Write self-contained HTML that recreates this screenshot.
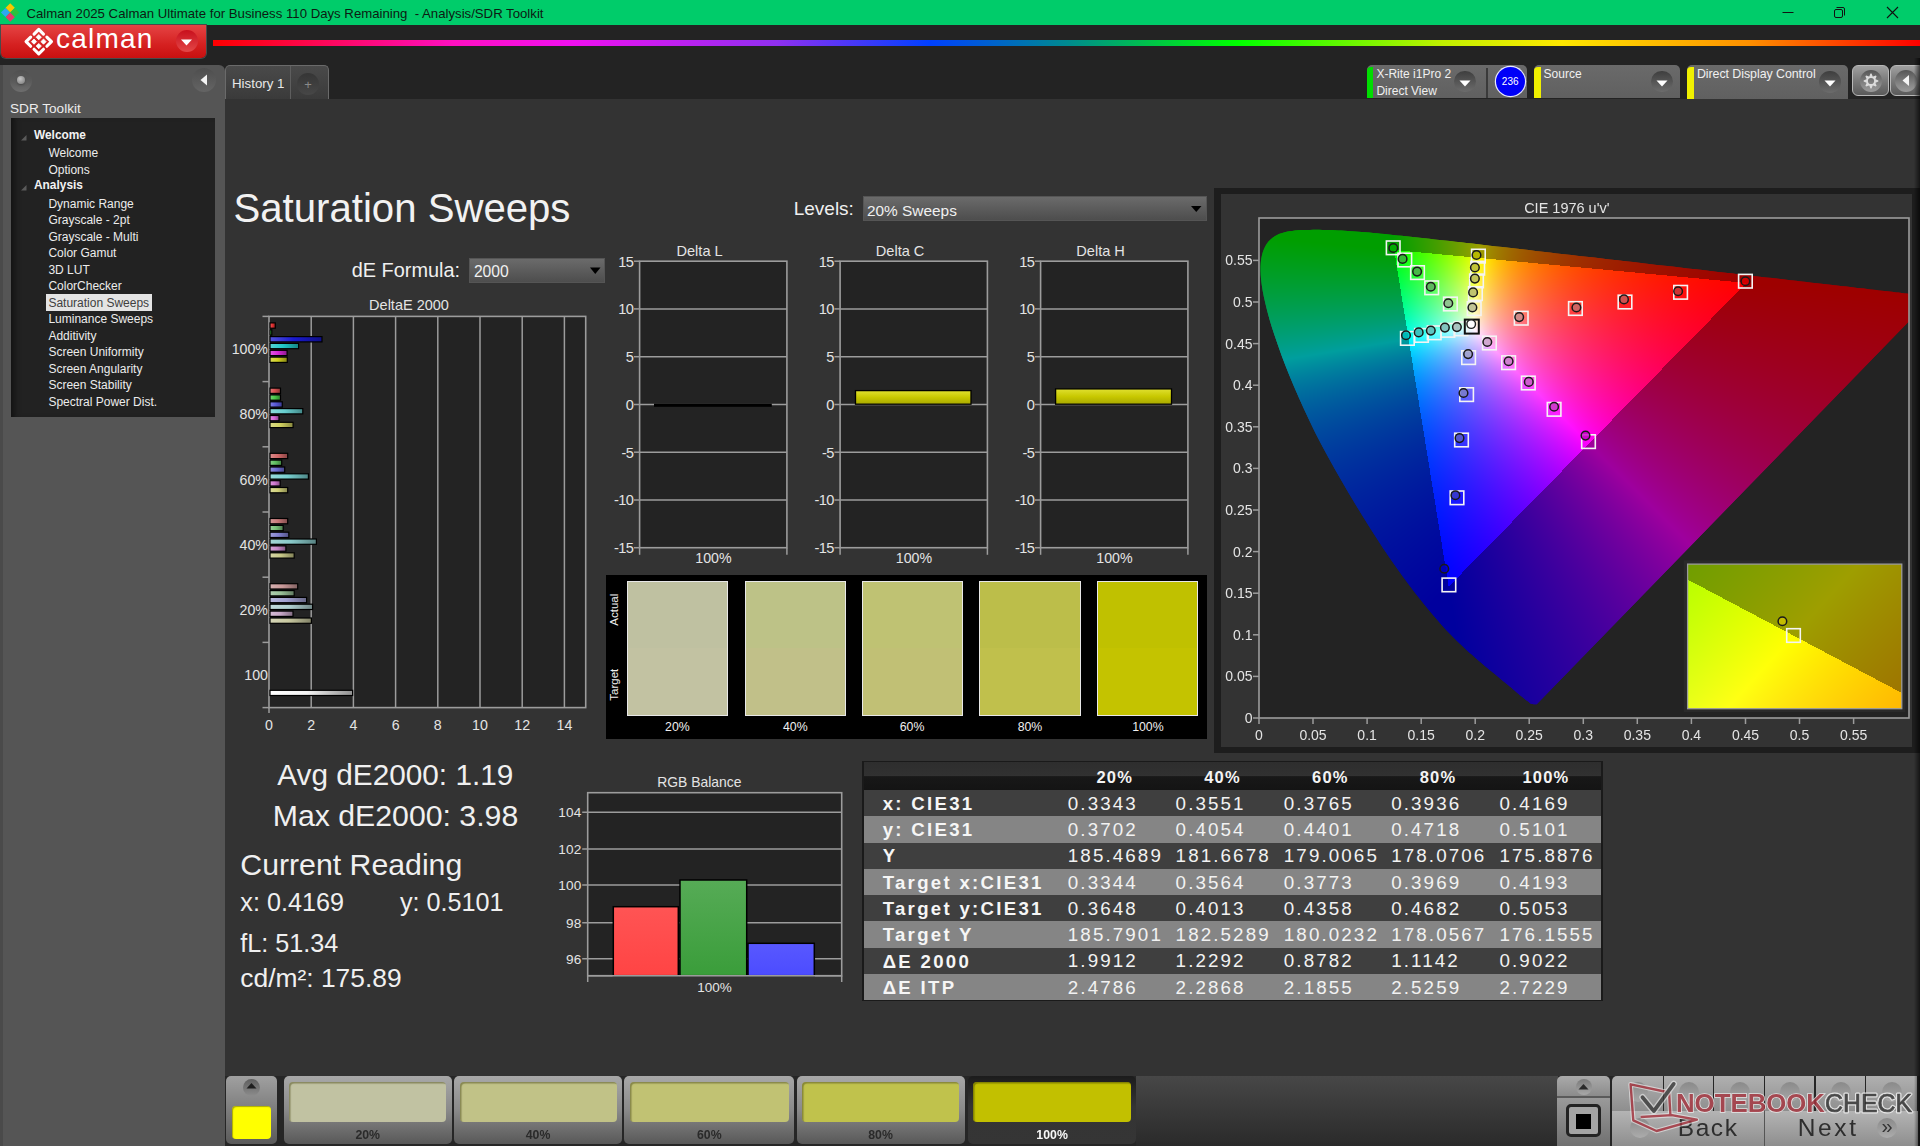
<!DOCTYPE html>
<html><head><meta charset="utf-8"><title>Calman Saturation Sweeps</title>
<style>
html,body{margin:0;padding:0;}
body{width:1920px;height:1146px;overflow:hidden;position:relative;background:#232323;font-family:"Liberation Sans",sans-serif;}
.t{position:absolute;white-space:nowrap;line-height:1;}
div{position:absolute;}
</style></head><body>
<div style="position:absolute;left:0px;top:0px;width:1920px;height:25px;background:#00cc6a"></div>
<svg style="position:absolute;left:0;top:0" width="24" height="25" viewBox="0 0 24 25">
<path d="M10.2 3.2 L14.8 7.8 L10.2 12.4 L5.6 7.8Z" fill="#f7c600"/>
<path d="M5.5 7.9 L10.1 12.5 L5.5 17.1 L0.9 12.5Z" fill="#2ea8f0"/>
<path d="M14.8 7.9 L19.4 12.5 L14.8 17.1 L10.2 12.5Z" fill="#2cc040"/>
<path d="M10.2 12.6 L14.8 17.2 L10.2 21.8 L5.6 17.2Z" fill="#e8386a"/>
</svg>
<div class="t" style="left:26.5px;top:6.8px;font-size:13.2px;color:#0d1a12;">Calman 2025 Calman Ultimate for Business 110 Days Remaining&nbsp; - Analysis/SDR Toolkit</div>
<svg style="position:absolute;left:1770px;top:0" width="150" height="25" viewBox="1770 0 150 25">
<line x1="1782.5" y1="12.5" x2="1793.5" y2="12.5" stroke="#111" stroke-width="1"/>
<rect x="1834.5" y="9.5" width="8" height="8" rx="1.5" fill="none" stroke="#111" stroke-width="1"/>
<path d="M1836.5 7.5 H1843 a1.5 1.5 0 0 1 1.5 1.5 V15.5" fill="none" stroke="#111" stroke-width="1"/>
<path d="M1887 7 L1898 18 M1898 7 L1887 18" stroke="#111" stroke-width="1.1"/>
</svg>
<div style="position:absolute;left:0px;top:25px;width:1920px;height:40px;background:#232323"></div>
<div style="position:absolute;left:1px;top:25px;width:204.5px;height:32.5px;background:linear-gradient(#e54444,#d52020 60%,#c81010);border-radius:0 0 5px 5px;box-shadow:0 0 0 1px #4a4a4a"></div>
<svg style="position:absolute;left:20px;top:24px" width="40" height="36" viewBox="-18.76 -17.64 40 36">
<g fill="none" stroke="#fff" stroke-width="3.1" stroke-linecap="round" stroke-linejoin="round">
<path d="M-4.7 -7.6 L0 -12.3 L4.7 -7.6"/><path d="M-4.7 7.6 L0 12.3 L4.7 7.6"/>
<path d="M-8.1 -4.6 L-12.7 0 L-8.1 4.6"/><path d="M8.1 -4.6 L12.7 0 L8.1 4.6"/>
</g>
<g fill="#fff" stroke="#fff" stroke-width="0.8" stroke-linejoin="round">
<path d="M0 -7.1 L2.6 -4.45 L0 -1.8 L-2.6 -4.45Z"/><path d="M0 1.8 L2.6 4.45 L0 7.1 L-2.6 4.45Z"/>
<path d="M-4.76 -2.6 L-2.16 0 L-4.76 2.6 L-7.36 0Z"/><path d="M4.76 -2.6 L7.36 0 L4.76 2.6 L2.16 0Z"/>
</g></svg>
<div class="t" style="left:56.0px;top:25.3px;font-size:28px;color:#ffffff;letter-spacing:1.2px;">calman</div>
<div style="position:absolute;left:175.5px;top:30px;width:22px;height:22px;border-radius:50%;background:linear-gradient(#c80f1c,#e34848)"></div>
<svg style="position:absolute;left:180px;top:38px" width="14" height="9"><path d="M1 1.5 H12 L6.5 7.5Z" fill="#fff"/></svg>
<div style="position:absolute;left:213px;top:40px;width:1707px;height:5.5px;background:linear-gradient(90deg,#ff0000 0%,#ff10c0 14%,#f010f0 21%,#9030f0 33%,#0040ff 42%,#008a90 50%,#00ff00 60%,#c0f000 72%,#ffe800 79%,#ff9000 90%,#ff0000 100%)"></div>
<div style="position:absolute;left:0px;top:65px;width:2.5px;height:1081px;background:#4a4a4a"></div>
<div style="position:absolute;left:2.5px;top:65px;width:222px;height:1081px;background:#555555;border-radius:0 6px 0 0"></div>
<div style="position:absolute;left:10px;top:69.5px;width:22px;height:22px;border-radius:50%;background:linear-gradient(#505050,#5a5a5a 50%,#6e6e6e)"></div>
<div style="position:absolute;left:16.5px;top:75.5px;width:8px;height:8px;border-radius:50%;background:radial-gradient(circle at 40% 35%,#c4c4c4,#8a8a8a 75%);box-shadow:0 1px 2px #444"></div>
<div style="position:absolute;left:192px;top:68px;width:24px;height:24px;border-radius:50%;background:linear-gradient(#4e4e4e,#646464)"></div>
<svg style="position:absolute;left:199px;top:73px" width="10" height="14"><path d="M8 1.5 V12.5 L1.5 7Z" fill="#f4f4f4"/></svg>
<div class="t" style="left:10.0px;top:101.5px;font-size:13.6px;color:#ececec;">SDR Toolkit</div>
<div style="position:absolute;left:11px;top:118px;width:204px;height:298.6px;background:#222;box-shadow:inset 7px 0 6px -4px #111"></div>
<svg style="position:absolute;left:20px;top:133.8px" width="8" height="8"><path d="M6.5 1 V6.5 H1Z" fill="#5a5a5a"/></svg>
<div class="t" style="left:34.0px;top:130.2px;font-size:11.9px;color:#f2f2f2;font-weight:bold;">Welcome</div>
<div class="t" style="left:48.4px;top:146.6px;font-size:12px;color:#ececec;">Welcome</div>
<div class="t" style="left:48.4px;top:163.5px;font-size:12px;color:#ececec;">Options</div>
<svg style="position:absolute;left:20px;top:184.0px" width="8" height="8"><path d="M6.5 1 V6.5 H1Z" fill="#5a5a5a"/></svg>
<div class="t" style="left:34.0px;top:180.4px;font-size:11.9px;color:#f2f2f2;font-weight:bold;">Analysis</div>
<div class="t" style="left:48.4px;top:197.8px;font-size:12px;color:#ececec;">Dynamic Range</div>
<div class="t" style="left:48.4px;top:214.3px;font-size:12px;color:#ececec;">Grayscale - 2pt</div>
<div class="t" style="left:48.4px;top:230.8px;font-size:12px;color:#ececec;">Grayscale - Multi</div>
<div class="t" style="left:48.4px;top:247.3px;font-size:12px;color:#ececec;">Color Gamut</div>
<div class="t" style="left:48.4px;top:263.8px;font-size:12px;color:#ececec;">3D LUT</div>
<div class="t" style="left:48.4px;top:280.3px;font-size:12px;color:#ececec;">ColorChecker</div>
<div style="position:absolute;left:46px;top:293.9px;width:106px;height:17px;background:#e4e4e4;border:0"></div>
<div class="t" style="left:48.4px;top:296.7px;font-size:12px;color:#404040;">Saturation Sweeps</div>
<div class="t" style="left:48.4px;top:313.2px;font-size:12px;color:#ececec;">Luminance Sweeps</div>
<div class="t" style="left:48.4px;top:329.7px;font-size:12px;color:#ececec;">Additivity</div>
<div class="t" style="left:48.4px;top:346.2px;font-size:12px;color:#ececec;">Screen Uniformity</div>
<div class="t" style="left:48.4px;top:362.7px;font-size:12px;color:#ececec;">Screen Angularity</div>
<div class="t" style="left:48.4px;top:379.2px;font-size:12px;color:#ececec;">Screen Stability</div>
<div class="t" style="left:48.4px;top:395.7px;font-size:12px;color:#ececec;">Spectral Power Dist.</div>
<div style="position:absolute;left:225px;top:65px;width:104px;height:34px;box-sizing:border-box;background:linear-gradient(#4a4a4a,#3a3a3a);border-radius:5px 5px 0 0;border:1.2px solid #6a6a6a;border-bottom:0"></div>
<div style="position:absolute;left:290px;top:66px;width:1.2px;height:33px;background:#5e5e5e"></div>
<div class="t" style="left:232.0px;top:77.2px;font-size:13.3px;color:#e8e8e8;">History 1</div>
<div style="position:absolute;left:297px;top:73px;width:22px;height:22px;border-radius:50%;background:linear-gradient(#353535,#474747)"></div>
<div class="t" style="left:298.0px;width:20px;text-align:center;top:78.0px;font-size:13px;color:#8a8a8a;">+</div>
<div style="position:absolute;left:225px;top:99px;width:1695px;height:1047px;background:#333"></div>
<div style="position:absolute;left:1366.6px;top:65.2px;width:160.2px;height:33.2px;background:linear-gradient(#6a6a6a,#606060);border-radius:5px 5px 0 0"></div>
<div style="position:absolute;left:1366.6px;top:66.5px;width:6.5px;height:31.9px;background:#00dd00;border-radius:4px 0 0 0"></div>
<div class="t" style="left:1376.4px;top:68.2px;font-size:12px;color:#f0f0f0;">X-Rite i1Pro 2</div>
<div class="t" style="left:1376.4px;top:84.8px;font-size:12px;color:#f0f0f0;">Direct View</div>
<div style="position:absolute;left:1454.2px;top:70.8px;width:21.6px;height:21.6px;border-radius:50%;background:linear-gradient(#3e3e3e,#6c6c6c)"></div>
<svg style="position:absolute;left:1459px;top:79.6px" width="12" height="7"><path d="M0.5 0.5 H11.5 L6 6.5Z" fill="#fff"/></svg>
<div style="position:absolute;left:1486px;top:68px;width:2px;height:30.4px;background:#3a3a3a"></div>
<div style="position:absolute;left:1495.5px;top:67.1px;width:29px;height:29px;border-radius:50%;background:#0000f8;box-shadow:0 0 0 1.2px #e8e8ff"></div>
<div class="t" style="left:1495.2px;width:30px;text-align:center;top:76.7px;font-size:10px;color:#ffffff;">236</div>
<div style="position:absolute;left:1534px;top:65.2px;width:145.9px;height:33.2px;background:linear-gradient(#6a6a6a,#606060);border-radius:5px 5px 0 0"></div>
<div style="position:absolute;left:1534px;top:66.5px;width:6.5px;height:31.9px;background:#f0f000;border-radius:4px 0 0 0"></div>
<div class="t" style="left:1543.6px;top:68.2px;font-size:12px;color:#f0f0f0;">Source</div>
<div style="position:absolute;left:1651.0px;top:70.9px;width:21.6px;height:21.6px;border-radius:50%;background:linear-gradient(#3e3e3e,#6c6c6c)"></div>
<svg style="position:absolute;left:1655.8px;top:79.7px" width="12" height="7"><path d="M0.5 0.5 H11.5 L6 6.5Z" fill="#fff"/></svg>
<div style="position:absolute;left:1686.9px;top:65.2px;width:161.1px;height:33.4px;background:linear-gradient(#6a6a6a,#606060);border-radius:5px 5px 0 0"></div>
<div style="position:absolute;left:1686.9px;top:66.5px;width:6.8px;height:32.1px;background:#f0f000;border-radius:4px 0 0 0"></div>
<div class="t" style="left:1696.9px;top:67.9px;font-size:12.4px;color:#f0f0f0;letter-spacing:-0.05px;">Direct Display Control</div>
<div style="position:absolute;left:1819.2px;top:70.95px;width:21.6px;height:21.6px;border-radius:50%;background:linear-gradient(#3e3e3e,#6c6c6c)"></div>
<svg style="position:absolute;left:1824px;top:79.75px" width="12" height="7"><path d="M0.5 0.5 H11.5 L6 6.5Z" fill="#fff"/></svg>
<div style="position:absolute;left:1851.9px;top:65.2px;width:37.6px;height:31.2px;box-sizing:border-box;border:1.5px solid #b8b8b8;border-radius:6px;background:linear-gradient(#a0a0a0,#7a7a7a 50%,#5a5a5a)"></div>
<div style="position:absolute;left:1859.6px;top:69.5px;width:22px;height:22px;border-radius:50%;background:linear-gradient(#555,#8a8a8a 70%,#9a9a9a)"></div>
<svg style="position:absolute;left:1860.6px;top:70.5px" width="20" height="20" viewBox="-10 -10 20 20"><path fill-rule="evenodd" fill="#dcdcdc" d="M-1.73 -4.59 L-0.52 -7.38 L0.52 -7.38 L1.73 -4.59 L2.02 -4.46 L4.85 -5.59 L5.59 -4.85 L4.46 -2.02 L4.59 -1.73 L7.38 -0.52 L7.38 0.52 L4.59 1.73 L4.46 2.02 L5.59 4.85 L4.85 5.59 L2.02 4.46 L1.73 4.59 L0.52 7.38 L-0.52 7.38 L-1.73 4.59 L-2.02 4.46 L-4.85 5.59 L-5.59 4.85 L-4.46 2.02 L-4.59 1.73 L-7.38 0.52 L-7.38 -0.52 L-4.59 -1.73 L-4.46 -2.02 L-5.59 -4.85 L-4.85 -5.59 L-2.02 -4.46Z M3.1 0 A3.1 3.1 0 1 0 -3.1 0 A3.1 3.1 0 1 0 3.1 0Z"/></svg>
<div style="position:absolute;left:1889.5px;top:65.2px;width:35px;height:31.2px;box-sizing:border-box;border:1.5px solid #b8b8b8;border-radius:6px;background:linear-gradient(#a0a0a0,#7a7a7a 50%,#5a5a5a)"></div>
<div style="position:absolute;left:1894.5px;top:69.5px;width:22px;height:22px;border-radius:50%;background:linear-gradient(#555,#8a8a8a 70%,#9a9a9a)"></div>
<svg style="position:absolute;left:1901px;top:74px" width="10" height="13"><path d="M8 1 V12 L1.5 6.5Z" fill="#f4f4f4"/></svg>
<div class="t" style="left:233.5px;top:189.4px;font-size:40.15px;color:#f2f2f2;">Saturation Sweeps</div>
<div class="t" style="left:351.7px;top:260.9px;font-size:19.9px;color:#f0f0f0;">dE Formula:</div>
<div style="position:absolute;left:469px;top:258px;width:135.7px;height:25.2px;background:linear-gradient(#6c6c6c,#4c4c4c);box-shadow:inset 0 0 0 1px #555"></div>
<div class="t" style="left:473.9px;top:264.4px;font-size:15.7px;color:#f0f0f0;">2000</div>
<svg style="position:absolute;left:589px;top:266px" width="14" height="10"><path d="M1 1.5 H11.5 L6.25 8Z" fill="#000"/></svg>
<div class="t" style="left:793.7px;top:199.1px;font-size:19.0px;color:#f0f0f0;">Levels:</div>
<div style="position:absolute;left:862.5px;top:195.7px;width:344.2px;height:25.5px;background:linear-gradient(#6c6c6c,#4c4c4c);box-shadow:inset 0 0 0 1px #555"></div>
<div class="t" style="left:867.0px;top:203.0px;font-size:15.4px;color:#f0f0f0;">20% Sweeps</div>
<svg style="position:absolute;left:1190px;top:205px" width="14" height="10"><path d="M1 1 H11.5 L6.25 7Z" fill="#000"/></svg>
<svg style="position:absolute;left:0;top:0" width="1920" height="1146" viewBox="0 0 1920 1146" font-family="Liberation Sans, sans-serif"><defs><linearGradient id="g00" x1="0" x2="1" y1="0" y2="0"><stop offset="0" stop-color="#eb6363"/><stop offset="0.45" stop-color="#e53030"/><stop offset="1" stop-color="#941f1f"/></linearGradient><linearGradient id="g01" x1="0" x2="1" y1="0" y2="0"><stop offset="0" stop-color="#63db63"/><stop offset="0.45" stop-color="#30d030"/><stop offset="1" stop-color="#1f871f"/></linearGradient><linearGradient id="g02" x1="0" x2="1" y1="0" y2="0"><stop offset="0" stop-color="#5353db"/><stop offset="0.45" stop-color="#1a1ad0"/><stop offset="1" stop-color="#101087"/></linearGradient><linearGradient id="g03" x1="0" x2="1" y1="0" y2="0"><stop offset="0" stop-color="#57d5d5"/><stop offset="0.45" stop-color="#20c8c8"/><stop offset="1" stop-color="#148282"/></linearGradient><linearGradient id="g04" x1="0" x2="1" y1="0" y2="0"><stop offset="0" stop-color="#e15de1"/><stop offset="0.45" stop-color="#d828d8"/><stop offset="1" stop-color="#8c1a8c"/></linearGradient><linearGradient id="g05" x1="0" x2="1" y1="0" y2="0"><stop offset="0" stop-color="#dbdb57"/><stop offset="0.45" stop-color="#d0d020"/><stop offset="1" stop-color="#878714"/></linearGradient><linearGradient id="g10" x1="0" x2="1" y1="0" y2="0"><stop offset="0" stop-color="#e17b7b"/><stop offset="0.45" stop-color="#d85050"/><stop offset="1" stop-color="#8c3434"/></linearGradient><linearGradient id="g11" x1="0" x2="1" y1="0" y2="0"><stop offset="0" stop-color="#75d575"/><stop offset="0.45" stop-color="#48c848"/><stop offset="1" stop-color="#2e822e"/></linearGradient><linearGradient id="g12" x1="0" x2="1" y1="0" y2="0"><stop offset="0" stop-color="#8181e1"/><stop offset="0.45" stop-color="#5858d8"/><stop offset="1" stop-color="#39398c"/></linearGradient><linearGradient id="g13" x1="0" x2="1" y1="0" y2="0"><stop offset="0" stop-color="#8ddbdb"/><stop offset="0.45" stop-color="#68d0d0"/><stop offset="1" stop-color="#438787"/></linearGradient><linearGradient id="g14" x1="0" x2="1" y1="0" y2="0"><stop offset="0" stop-color="#e18de1"/><stop offset="0.45" stop-color="#d868d8"/><stop offset="1" stop-color="#8c438c"/></linearGradient><linearGradient id="g15" x1="0" x2="1" y1="0" y2="0"><stop offset="0" stop-color="#dbdb87"/><stop offset="0.45" stop-color="#d0d060"/><stop offset="1" stop-color="#87873e"/></linearGradient><linearGradient id="g20" x1="0" x2="1" y1="0" y2="0"><stop offset="0" stop-color="#db8d8d"/><stop offset="0.45" stop-color="#d06868"/><stop offset="1" stop-color="#874343"/></linearGradient><linearGradient id="g21" x1="0" x2="1" y1="0" y2="0"><stop offset="0" stop-color="#87cf87"/><stop offset="0.45" stop-color="#60c060"/><stop offset="1" stop-color="#3e7c3e"/></linearGradient><linearGradient id="g22" x1="0" x2="1" y1="0" y2="0"><stop offset="0" stop-color="#9090db"/><stop offset="0.45" stop-color="#6c6cd0"/><stop offset="1" stop-color="#464687"/></linearGradient><linearGradient id="g23" x1="0" x2="1" y1="0" y2="0"><stop offset="0" stop-color="#99dbdb"/><stop offset="0.45" stop-color="#78d0d0"/><stop offset="1" stop-color="#4e8787"/></linearGradient><linearGradient id="g24" x1="0" x2="1" y1="0" y2="0"><stop offset="0" stop-color="#db99db"/><stop offset="0.45" stop-color="#d078d0"/><stop offset="1" stop-color="#874e87"/></linearGradient><linearGradient id="g25" x1="0" x2="1" y1="0" y2="0"><stop offset="0" stop-color="#dbdb99"/><stop offset="0.45" stop-color="#d0d078"/><stop offset="1" stop-color="#87874e"/></linearGradient><linearGradient id="g30" x1="0" x2="1" y1="0" y2="0"><stop offset="0" stop-color="#d59999"/><stop offset="0.45" stop-color="#c87878"/><stop offset="1" stop-color="#824e4e"/></linearGradient><linearGradient id="g31" x1="0" x2="1" y1="0" y2="0"><stop offset="0" stop-color="#99cf99"/><stop offset="0.45" stop-color="#78c078"/><stop offset="1" stop-color="#4e7c4e"/></linearGradient><linearGradient id="g32" x1="0" x2="1" y1="0" y2="0"><stop offset="0" stop-color="#9f9fdb"/><stop offset="0.45" stop-color="#8080d0"/><stop offset="1" stop-color="#535387"/></linearGradient><linearGradient id="g33" x1="0" x2="1" y1="0" y2="0"><stop offset="0" stop-color="#a5d5d5"/><stop offset="0.45" stop-color="#88c8c8"/><stop offset="1" stop-color="#588282"/></linearGradient><linearGradient id="g34" x1="0" x2="1" y1="0" y2="0"><stop offset="0" stop-color="#d5a5d5"/><stop offset="0.45" stop-color="#c888c8"/><stop offset="1" stop-color="#825882"/></linearGradient><linearGradient id="g35" x1="0" x2="1" y1="0" y2="0"><stop offset="0" stop-color="#d5d5a5"/><stop offset="0.45" stop-color="#c8c888"/><stop offset="1" stop-color="#828258"/></linearGradient><linearGradient id="g40" x1="0" x2="1" y1="0" y2="0"><stop offset="0" stop-color="#d5b1b1"/><stop offset="0.45" stop-color="#c89898"/><stop offset="1" stop-color="#826262"/></linearGradient><linearGradient id="g41" x1="0" x2="1" y1="0" y2="0"><stop offset="0" stop-color="#b1cfb1"/><stop offset="0.45" stop-color="#98c098"/><stop offset="1" stop-color="#627c62"/></linearGradient><linearGradient id="g42" x1="0" x2="1" y1="0" y2="0"><stop offset="0" stop-color="#b7b7db"/><stop offset="0.45" stop-color="#a0a0d0"/><stop offset="1" stop-color="#686887"/></linearGradient><linearGradient id="g43" x1="0" x2="1" y1="0" y2="0"><stop offset="0" stop-color="#c3dbdb"/><stop offset="0.45" stop-color="#b0d0d0"/><stop offset="1" stop-color="#728787"/></linearGradient><linearGradient id="g44" x1="0" x2="1" y1="0" y2="0"><stop offset="0" stop-color="#d5bdd5"/><stop offset="0.45" stop-color="#c8a8c8"/><stop offset="1" stop-color="#826d82"/></linearGradient><linearGradient id="g45" x1="0" x2="1" y1="0" y2="0"><stop offset="0" stop-color="#d5d5b7"/><stop offset="0.45" stop-color="#c8c8a0"/><stop offset="1" stop-color="#828268"/></linearGradient><linearGradient id="gw" x1="0" x2="1" y1="0" y2="0"><stop offset="0" stop-color="#ffffff"/><stop offset="0.45" stop-color="#f4f4f4"/><stop offset="1" stop-color="#909090"/></linearGradient><linearGradient id="gy" x1="0" x2="0" y1="0" y2="1"><stop offset="0" stop-color="#e0e030"/><stop offset="0.5" stop-color="#c8c800"/><stop offset="1" stop-color="#a8a800"/></linearGradient></defs><rect x="269" y="316.4" width="316.70000000000005" height="391.20000000000005" fill="#232323" stroke="#9c9c9c" stroke-width="1.6"/><line x1="311.2" y1="316.4" x2="311.2" y2="707.6" stroke="#9c9c9c" stroke-width="1.5"/><line x1="353.4" y1="316.4" x2="353.4" y2="707.6" stroke="#9c9c9c" stroke-width="1.5"/><line x1="395.6" y1="316.4" x2="395.6" y2="707.6" stroke="#9c9c9c" stroke-width="1.5"/><line x1="437.8" y1="316.4" x2="437.8" y2="707.6" stroke="#9c9c9c" stroke-width="1.5"/><line x1="480.0" y1="316.4" x2="480.0" y2="707.6" stroke="#9c9c9c" stroke-width="1.5"/><line x1="522.2" y1="316.4" x2="522.2" y2="707.6" stroke="#9c9c9c" stroke-width="1.5"/><line x1="564.4" y1="316.4" x2="564.4" y2="707.6" stroke="#9c9c9c" stroke-width="1.5"/><text x="269.0" y="729.8" font-size="14.2" fill="#e4e4e4" text-anchor="middle" >0</text><text x="311.2" y="729.8" font-size="14.2" fill="#e4e4e4" text-anchor="middle" >2</text><text x="353.4" y="729.8" font-size="14.2" fill="#e4e4e4" text-anchor="middle" >4</text><text x="395.6" y="729.8" font-size="14.2" fill="#e4e4e4" text-anchor="middle" >6</text><text x="437.8" y="729.8" font-size="14.2" fill="#e4e4e4" text-anchor="middle" >8</text><text x="480.0" y="729.8" font-size="14.2" fill="#e4e4e4" text-anchor="middle" >10</text><text x="522.2" y="729.8" font-size="14.2" fill="#e4e4e4" text-anchor="middle" >12</text><text x="564.4" y="729.8" font-size="14.2" fill="#e4e4e4" text-anchor="middle" >14</text><line x1="269" y1="707.6" x2="269" y2="713" stroke="#9c9c9c" stroke-width="1.5"/><line x1="262.5" y1="316.4" x2="269" y2="316.4" stroke="#9c9c9c" stroke-width="1.5"/><line x1="262.5" y1="381.6" x2="269" y2="381.6" stroke="#9c9c9c" stroke-width="1.5"/><line x1="262.5" y1="446.8" x2="269" y2="446.8" stroke="#9c9c9c" stroke-width="1.5"/><line x1="262.5" y1="512.0" x2="269" y2="512.0" stroke="#9c9c9c" stroke-width="1.5"/><line x1="262.5" y1="577.2" x2="269" y2="577.2" stroke="#9c9c9c" stroke-width="1.5"/><line x1="262.5" y1="642.4" x2="269" y2="642.4" stroke="#9c9c9c" stroke-width="1.5"/><line x1="262.5" y1="707.6" x2="269" y2="707.6" stroke="#9c9c9c" stroke-width="1.5"/><text x="268.0" y="354.2" font-size="14.2" fill="#e4e4e4" text-anchor="end" >100%</text><text x="268.0" y="419.4" font-size="14.2" fill="#e4e4e4" text-anchor="end" >80%</text><text x="268.0" y="484.6" font-size="14.2" fill="#e4e4e4" text-anchor="end" >60%</text><text x="268.0" y="549.8" font-size="14.2" fill="#e4e4e4" text-anchor="end" >40%</text><text x="268.0" y="615.0" font-size="14.2" fill="#e4e4e4" text-anchor="end" >20%</text><text x="268.0" y="680.2" font-size="14.2" fill="#e4e4e4" text-anchor="end" >100</text><rect x="270" y="322.9" width="5.3" height="5.3" fill="url(#g00)" stroke="#000" stroke-width="1.2"/><rect x="270" y="329.8" width="1.8" height="5.3" fill="url(#g01)" stroke="#000" stroke-width="1.2"/><rect x="270" y="336.6" width="52.0" height="5.3" fill="url(#g02)" stroke="#000" stroke-width="1.2"/><rect x="270" y="343.4" width="28.6" height="5.3" fill="url(#g03)" stroke="#000" stroke-width="1.2"/><rect x="270" y="350.3" width="17.1" height="5.3" fill="url(#g04)" stroke="#000" stroke-width="1.2"/><rect x="270" y="357.1" width="17.3" height="5.3" fill="url(#g05)" stroke="#000" stroke-width="1.2"/><rect x="270" y="388.1" width="10.5" height="5.3" fill="url(#g10)" stroke="#000" stroke-width="1.2"/><rect x="270" y="394.9" width="10.5" height="5.3" fill="url(#g11)" stroke="#000" stroke-width="1.2"/><rect x="270" y="401.8" width="12.3" height="5.3" fill="url(#g12)" stroke="#000" stroke-width="1.2"/><rect x="270" y="408.6" width="32.8" height="5.3" fill="url(#g13)" stroke="#000" stroke-width="1.2"/><rect x="270" y="415.5" width="9.0" height="5.3" fill="url(#g14)" stroke="#000" stroke-width="1.2"/><rect x="270" y="422.3" width="23.1" height="5.3" fill="url(#g15)" stroke="#000" stroke-width="1.2"/><rect x="270" y="453.3" width="17.7" height="5.3" fill="url(#g20)" stroke="#000" stroke-width="1.2"/><rect x="270" y="460.1" width="11.7" height="5.3" fill="url(#g21)" stroke="#000" stroke-width="1.2"/><rect x="270" y="467.0" width="14.7" height="5.3" fill="url(#g22)" stroke="#000" stroke-width="1.2"/><rect x="270" y="473.8" width="38.4" height="5.3" fill="url(#g23)" stroke="#000" stroke-width="1.2"/><rect x="270" y="480.7" width="10.2" height="5.3" fill="url(#g24)" stroke="#000" stroke-width="1.2"/><rect x="270" y="487.5" width="17.7" height="5.3" fill="url(#g25)" stroke="#000" stroke-width="1.2"/><rect x="270" y="518.5" width="17.7" height="5.3" fill="url(#g30)" stroke="#000" stroke-width="1.2"/><rect x="270" y="525.4" width="13.2" height="5.3" fill="url(#g31)" stroke="#000" stroke-width="1.2"/><rect x="270" y="532.2" width="18.8" height="5.3" fill="url(#g32)" stroke="#000" stroke-width="1.2"/><rect x="270" y="539.0" width="46.4" height="5.3" fill="url(#g33)" stroke="#000" stroke-width="1.2"/><rect x="270" y="545.9" width="15.9" height="5.3" fill="url(#g34)" stroke="#000" stroke-width="1.2"/><rect x="270" y="552.8" width="24.2" height="5.3" fill="url(#g35)" stroke="#000" stroke-width="1.2"/><rect x="270" y="583.7" width="27.7" height="5.3" fill="url(#g40)" stroke="#000" stroke-width="1.2"/><rect x="270" y="590.6" width="24.2" height="5.3" fill="url(#g41)" stroke="#000" stroke-width="1.2"/><rect x="270" y="597.4" width="36.6" height="5.3" fill="url(#g42)" stroke="#000" stroke-width="1.2"/><rect x="270" y="604.2" width="42.6" height="5.3" fill="url(#g43)" stroke="#000" stroke-width="1.2"/><rect x="270" y="611.1" width="23.0" height="5.3" fill="url(#g44)" stroke="#000" stroke-width="1.2"/><rect x="270" y="618.0" width="41.4" height="5.3" fill="url(#g45)" stroke="#000" stroke-width="1.2"/><rect x="270" y="690.3" width="82.6" height="5.2" fill="url(#gw)" stroke="#000" stroke-width="1.2"/><text x="409.0" y="310.0" font-size="14.5" fill="#e4e4e4" text-anchor="middle" >DeltaE 2000</text><rect x="639.6" y="261.2" width="147.3" height="286.5" fill="#232323" stroke="#9c9c9c" stroke-width="1.6"/><line x1="634.0" y1="261.2" x2="639.6" y2="261.2" stroke="#9c9c9c" stroke-width="1.5"/><text x="633.3" y="266.5" font-size="14.6" fill="#e4e4e4" text-anchor="end" letter-spacing="-0.6">15</text><line x1="639.6" y1="308.9" x2="786.9" y2="308.9" stroke="#9c9c9c" stroke-width="1.5"/><line x1="634.0" y1="308.9" x2="639.6" y2="308.9" stroke="#9c9c9c" stroke-width="1.5"/><text x="633.3" y="314.2" font-size="14.6" fill="#e4e4e4" text-anchor="end" letter-spacing="-0.6">10</text><line x1="639.6" y1="356.7" x2="786.9" y2="356.7" stroke="#9c9c9c" stroke-width="1.5"/><line x1="634.0" y1="356.7" x2="639.6" y2="356.7" stroke="#9c9c9c" stroke-width="1.5"/><text x="633.3" y="362.0" font-size="14.6" fill="#e4e4e4" text-anchor="end" letter-spacing="-0.6">5</text><line x1="639.6" y1="404.5" x2="786.9" y2="404.5" stroke="#9c9c9c" stroke-width="1.5"/><line x1="634.0" y1="404.5" x2="639.6" y2="404.5" stroke="#9c9c9c" stroke-width="1.5"/><text x="633.3" y="409.8" font-size="14.6" fill="#e4e4e4" text-anchor="end" letter-spacing="-0.6">0</text><line x1="639.6" y1="452.2" x2="786.9" y2="452.2" stroke="#9c9c9c" stroke-width="1.5"/><line x1="634.0" y1="452.2" x2="639.6" y2="452.2" stroke="#9c9c9c" stroke-width="1.5"/><text x="633.3" y="457.5" font-size="14.6" fill="#e4e4e4" text-anchor="end" letter-spacing="-0.6">-5</text><line x1="639.6" y1="500.0" x2="786.9" y2="500.0" stroke="#9c9c9c" stroke-width="1.5"/><line x1="634.0" y1="500.0" x2="639.6" y2="500.0" stroke="#9c9c9c" stroke-width="1.5"/><text x="633.3" y="505.3" font-size="14.6" fill="#e4e4e4" text-anchor="end" letter-spacing="-0.6">-10</text><line x1="634.0" y1="547.7" x2="639.6" y2="547.7" stroke="#9c9c9c" stroke-width="1.5"/><text x="633.3" y="553.0" font-size="14.6" fill="#e4e4e4" text-anchor="end" letter-spacing="-0.6">-15</text><line x1="639.6" y1="547.7" x2="639.6" y2="554.8" stroke="#9c9c9c" stroke-width="1.5"/><line x1="786.9" y1="547.7" x2="786.9" y2="554.8" stroke="#9c9c9c" stroke-width="1.5"/><text x="713.4" y="563.4" font-size="14.2" fill="#e4e4e4" text-anchor="middle" >100%</text><text x="699.6" y="255.7" font-size="14.6" fill="#e4e4e4" text-anchor="middle" >Delta L</text><rect x="840.1" y="261.2" width="147.3" height="286.5" fill="#232323" stroke="#9c9c9c" stroke-width="1.6"/><line x1="834.5" y1="261.2" x2="840.1" y2="261.2" stroke="#9c9c9c" stroke-width="1.5"/><text x="833.8" y="266.5" font-size="14.6" fill="#e4e4e4" text-anchor="end" letter-spacing="-0.6">15</text><line x1="840.1" y1="308.9" x2="987.4" y2="308.9" stroke="#9c9c9c" stroke-width="1.5"/><line x1="834.5" y1="308.9" x2="840.1" y2="308.9" stroke="#9c9c9c" stroke-width="1.5"/><text x="833.8" y="314.2" font-size="14.6" fill="#e4e4e4" text-anchor="end" letter-spacing="-0.6">10</text><line x1="840.1" y1="356.7" x2="987.4" y2="356.7" stroke="#9c9c9c" stroke-width="1.5"/><line x1="834.5" y1="356.7" x2="840.1" y2="356.7" stroke="#9c9c9c" stroke-width="1.5"/><text x="833.8" y="362.0" font-size="14.6" fill="#e4e4e4" text-anchor="end" letter-spacing="-0.6">5</text><line x1="840.1" y1="404.5" x2="987.4" y2="404.5" stroke="#9c9c9c" stroke-width="1.5"/><line x1="834.5" y1="404.5" x2="840.1" y2="404.5" stroke="#9c9c9c" stroke-width="1.5"/><text x="833.8" y="409.8" font-size="14.6" fill="#e4e4e4" text-anchor="end" letter-spacing="-0.6">0</text><line x1="840.1" y1="452.2" x2="987.4" y2="452.2" stroke="#9c9c9c" stroke-width="1.5"/><line x1="834.5" y1="452.2" x2="840.1" y2="452.2" stroke="#9c9c9c" stroke-width="1.5"/><text x="833.8" y="457.5" font-size="14.6" fill="#e4e4e4" text-anchor="end" letter-spacing="-0.6">-5</text><line x1="840.1" y1="500.0" x2="987.4" y2="500.0" stroke="#9c9c9c" stroke-width="1.5"/><line x1="834.5" y1="500.0" x2="840.1" y2="500.0" stroke="#9c9c9c" stroke-width="1.5"/><text x="833.8" y="505.3" font-size="14.6" fill="#e4e4e4" text-anchor="end" letter-spacing="-0.6">-10</text><line x1="834.5" y1="547.7" x2="840.1" y2="547.7" stroke="#9c9c9c" stroke-width="1.5"/><text x="833.8" y="553.0" font-size="14.6" fill="#e4e4e4" text-anchor="end" letter-spacing="-0.6">-15</text><line x1="840.1" y1="547.7" x2="840.1" y2="554.8" stroke="#9c9c9c" stroke-width="1.5"/><line x1="987.4" y1="547.7" x2="987.4" y2="554.8" stroke="#9c9c9c" stroke-width="1.5"/><text x="913.9" y="563.4" font-size="14.2" fill="#e4e4e4" text-anchor="middle" >100%</text><text x="900.1" y="255.7" font-size="14.6" fill="#e4e4e4" text-anchor="middle" >Delta C</text><rect x="1040.6" y="261.2" width="147.3" height="286.5" fill="#232323" stroke="#9c9c9c" stroke-width="1.6"/><line x1="1035.0" y1="261.2" x2="1040.6" y2="261.2" stroke="#9c9c9c" stroke-width="1.5"/><text x="1034.3" y="266.5" font-size="14.6" fill="#e4e4e4" text-anchor="end" letter-spacing="-0.6">15</text><line x1="1040.6" y1="308.9" x2="1187.9" y2="308.9" stroke="#9c9c9c" stroke-width="1.5"/><line x1="1035.0" y1="308.9" x2="1040.6" y2="308.9" stroke="#9c9c9c" stroke-width="1.5"/><text x="1034.3" y="314.2" font-size="14.6" fill="#e4e4e4" text-anchor="end" letter-spacing="-0.6">10</text><line x1="1040.6" y1="356.7" x2="1187.9" y2="356.7" stroke="#9c9c9c" stroke-width="1.5"/><line x1="1035.0" y1="356.7" x2="1040.6" y2="356.7" stroke="#9c9c9c" stroke-width="1.5"/><text x="1034.3" y="362.0" font-size="14.6" fill="#e4e4e4" text-anchor="end" letter-spacing="-0.6">5</text><line x1="1040.6" y1="404.5" x2="1187.9" y2="404.5" stroke="#9c9c9c" stroke-width="1.5"/><line x1="1035.0" y1="404.5" x2="1040.6" y2="404.5" stroke="#9c9c9c" stroke-width="1.5"/><text x="1034.3" y="409.8" font-size="14.6" fill="#e4e4e4" text-anchor="end" letter-spacing="-0.6">0</text><line x1="1040.6" y1="452.2" x2="1187.9" y2="452.2" stroke="#9c9c9c" stroke-width="1.5"/><line x1="1035.0" y1="452.2" x2="1040.6" y2="452.2" stroke="#9c9c9c" stroke-width="1.5"/><text x="1034.3" y="457.5" font-size="14.6" fill="#e4e4e4" text-anchor="end" letter-spacing="-0.6">-5</text><line x1="1040.6" y1="500.0" x2="1187.9" y2="500.0" stroke="#9c9c9c" stroke-width="1.5"/><line x1="1035.0" y1="500.0" x2="1040.6" y2="500.0" stroke="#9c9c9c" stroke-width="1.5"/><text x="1034.3" y="505.3" font-size="14.6" fill="#e4e4e4" text-anchor="end" letter-spacing="-0.6">-10</text><line x1="1035.0" y1="547.7" x2="1040.6" y2="547.7" stroke="#9c9c9c" stroke-width="1.5"/><text x="1034.3" y="553.0" font-size="14.6" fill="#e4e4e4" text-anchor="end" letter-spacing="-0.6">-15</text><line x1="1040.6" y1="547.7" x2="1040.6" y2="554.8" stroke="#9c9c9c" stroke-width="1.5"/><line x1="1187.9" y1="547.7" x2="1187.9" y2="554.8" stroke="#9c9c9c" stroke-width="1.5"/><text x="1114.4" y="563.4" font-size="14.2" fill="#e4e4e4" text-anchor="middle" >100%</text><text x="1100.6" y="255.7" font-size="14.6" fill="#e4e4e4" text-anchor="middle" >Delta H</text><rect x="654" y="403.6" width="117.8" height="3.2" fill="#000"/><rect x="855.5" y="390.6" width="115.5" height="13.6" fill="url(#gy)" stroke="#000" stroke-width="1.3"/><rect x="1055.6" y="388.9" width="115.9" height="15.3" fill="url(#gy)" stroke="#000" stroke-width="1.3"/></svg>
<div style="position:absolute;left:605.8px;top:574.8px;width:601.2px;height:164.7px;background:#000"></div>
<div style="position:absolute;left:626.8px;top:581.3px;width:101.2px;height:134.7px;box-sizing:border-box;border:1px solid #e8e8e8;background:linear-gradient(#bfc1a1 50%,#c2c2a2 50%)"></div>
<div class="t" style="left:637.4px;width:80px;text-align:center;top:721.1px;font-size:12.3px;color:#f0f0f0;">20%</div>
<div style="position:absolute;left:744.7px;top:581.3px;width:101.2px;height:134.7px;box-sizing:border-box;border:1px solid #e8e8e8;background:linear-gradient(#bdc287 50%,#c1c089 50%)"></div>
<div class="t" style="left:755.3px;width:80px;text-align:center;top:721.1px;font-size:12.3px;color:#f0f0f0;">40%</div>
<div style="position:absolute;left:861.5px;top:581.3px;width:101.2px;height:134.7px;box-sizing:border-box;border:1px solid #e8e8e8;background:linear-gradient(#bfc273 50%,#c1c075 50%)"></div>
<div class="t" style="left:872.1px;width:80px;text-align:center;top:721.1px;font-size:12.3px;color:#f0f0f0;">60%</div>
<div style="position:absolute;left:979.4px;top:581.3px;width:101.2px;height:134.7px;box-sizing:border-box;border:1px solid #e8e8e8;background:linear-gradient(#bcbe4a 50%,#c0c04c 50%)"></div>
<div class="t" style="left:990.0px;width:80px;text-align:center;top:721.1px;font-size:12.3px;color:#f0f0f0;">80%</div>
<div style="position:absolute;left:1097.3px;top:581.3px;width:101.2px;height:134.7px;box-sizing:border-box;border:1px solid #e8e8e8;background:linear-gradient(#c0c100 50%,#c4c300 50%)"></div>
<div class="t" style="left:1107.9px;width:80px;text-align:center;top:721.1px;font-size:12.3px;color:#f0f0f0;">100%</div>
<div class="t" style="left:575px;top:604px;width:80px;text-align:center;font-size:11.5px;color:#f0f0f0;transform:rotate(-90deg);">Actual</div>
<div class="t" style="left:575px;top:679px;width:80px;text-align:center;font-size:11.5px;color:#f0f0f0;transform:rotate(-90deg);">Target</div>
<div class="t" style="left:277.3px;top:759.8px;font-size:29.75px;color:#f0f0f0;">Avg dE2000: 1.19</div>
<div class="t" style="left:272.7px;top:801.1px;font-size:30.26px;color:#f0f0f0;">Max dE2000: 3.98</div>
<div class="t" style="left:240.3px;top:850.4px;font-size:30.25px;color:#f0f0f0;">Current Reading</div>
<div class="t" style="left:240.3px;top:890.4px;font-size:25.2px;color:#f0f0f0;">x: 0.4169</div>
<div class="t" style="left:400.0px;top:890.4px;font-size:25.2px;color:#f0f0f0;">y: 0.5101</div>
<div class="t" style="left:240.3px;top:931.4px;font-size:25.2px;color:#f0f0f0;">fL: 51.34</div>
<div class="t" style="left:240.3px;top:965.0px;font-size:26.4px;color:#f0f0f0;">cd/m²: 175.89</div>
<svg style="position:absolute;left:0;top:0" width="1920" height="1146" viewBox="0 0 1920 1146" font-family="Liberation Sans, sans-serif"><defs><linearGradient id="rb" x1="0" x2="0" y1="0" y2="1"><stop offset="0" stop-color="#ff5454"/><stop offset="1" stop-color="#ff4444"/></linearGradient><linearGradient id="gb" x1="0" x2="0" y1="0" y2="1"><stop offset="0" stop-color="#56ab56"/><stop offset="1" stop-color="#3a9d3a"/></linearGradient><linearGradient id="bb" x1="0" x2="0" y1="0" y2="1"><stop offset="0" stop-color="#5858ff"/><stop offset="1" stop-color="#4c4cff"/></linearGradient></defs><rect x="587.7" y="792.7" width="254.0" height="183.0" fill="#232323" stroke="#9c9c9c" stroke-width="1.6"/><line x1="582.2" y1="812.3" x2="841.7" y2="812.3" stroke="#9c9c9c" stroke-width="1.5"/><text x="581.5" y="817.1" font-size="13.6" fill="#e4e4e4" text-anchor="end" letter-spacing="0.2">104</text><line x1="582.2" y1="849" x2="841.7" y2="849" stroke="#9c9c9c" stroke-width="1.5"/><text x="581.5" y="853.8" font-size="13.6" fill="#e4e4e4" text-anchor="end" letter-spacing="0.2">102</text><line x1="582.2" y1="885" x2="841.7" y2="885" stroke="#9c9c9c" stroke-width="1.5"/><text x="581.5" y="889.8" font-size="13.6" fill="#e4e4e4" text-anchor="end" letter-spacing="0.2">100</text><line x1="582.2" y1="922.7" x2="841.7" y2="922.7" stroke="#9c9c9c" stroke-width="1.5"/><text x="581.5" y="927.5" font-size="13.6" fill="#e4e4e4" text-anchor="end" letter-spacing="0.2">98</text><line x1="582.2" y1="958.7" x2="841.7" y2="958.7" stroke="#9c9c9c" stroke-width="1.5"/><text x="581.5" y="963.5" font-size="13.6" fill="#e4e4e4" text-anchor="end" letter-spacing="0.2">96</text><line x1="587.7" y1="975.7" x2="587.7" y2="982" stroke="#9c9c9c" stroke-width="1.5"/><line x1="841.7" y1="975.7" x2="841.7" y2="982" stroke="#9c9c9c" stroke-width="1.5"/><rect x="613.3" y="906.7" width="65" height="69.0" fill="url(#rb)" stroke="#000" stroke-width="1.5"/><rect x="680" y="880" width="66.7" height="95.70000000000005" fill="url(#gb)" stroke="#000" stroke-width="1.5"/><rect x="748" y="943.3" width="66.3" height="32.40000000000009" fill="url(#bb)" stroke="#000" stroke-width="1.5"/><line x1="587.7" y1="975.7" x2="841.7" y2="975.7" stroke="#9c9c9c" stroke-width="1.6"/><text x="714.5" y="992.3" font-size="13.5" fill="#e4e4e4" text-anchor="middle" >100%</text><text x="699.3" y="787.3" font-size="13.9" fill="#e4e4e4" text-anchor="middle" >RGB Balance</text></svg>
<div style="position:absolute;left:861.5px;top:760.5px;width:741px;height:240.5px;background:#1a1a1a"></div>
<div style="position:absolute;left:863.5px;top:762px;width:737.5px;height:28px;background:linear-gradient(#2e2e2e 0,#313131 48%,#3a3a3a 50%,#181818 52%,#141414 100%)"></div>
<div class="t" style="left:1064.7px;width:100px;text-align:center;top:769.2px;font-size:16.5px;color:#f4f4f4;font-weight:bold;letter-spacing:1.2px;">20%</div>
<div class="t" style="left:1172.5px;width:100px;text-align:center;top:769.2px;font-size:16.5px;color:#f4f4f4;font-weight:bold;letter-spacing:1.2px;">40%</div>
<div class="t" style="left:1280.4px;width:100px;text-align:center;top:769.2px;font-size:16.5px;color:#f4f4f4;font-weight:bold;letter-spacing:1.2px;">60%</div>
<div class="t" style="left:1388.0px;width:100px;text-align:center;top:769.2px;font-size:16.5px;color:#f4f4f4;font-weight:bold;letter-spacing:1.2px;">80%</div>
<div class="t" style="left:1496.0px;width:100px;text-align:center;top:769.2px;font-size:16.5px;color:#f4f4f4;font-weight:bold;letter-spacing:1.2px;">100%</div>
<div style="position:absolute;left:863.5px;top:790.0px;width:737.5px;height:26.3px;background:#3f3f3f"></div>
<div class="t" style="left:882.7px;top:794.9px;font-size:18.6px;color:#f6f6f6;font-weight:bold;letter-spacing:2.3px;">x: CIE31</div>
<div class="t" style="left:1067.8px;top:794.7px;font-size:18.8px;color:#f2f2f2;letter-spacing:2.1px;">0.3343</div>
<div class="t" style="left:1175.6px;top:794.7px;font-size:18.8px;color:#f2f2f2;letter-spacing:2.1px;">0.3551</div>
<div class="t" style="left:1283.8px;top:794.7px;font-size:18.8px;color:#f2f2f2;letter-spacing:2.1px;">0.3765</div>
<div class="t" style="left:1391.2px;top:794.7px;font-size:18.8px;color:#f2f2f2;letter-spacing:2.1px;">0.3936</div>
<div class="t" style="left:1499.5px;top:794.7px;font-size:18.8px;color:#f2f2f2;letter-spacing:2.1px;">0.4169</div>
<div style="position:absolute;left:863.5px;top:816.3px;width:737.5px;height:26.3px;background:#858585"></div>
<div class="t" style="left:882.7px;top:821.1px;font-size:18.6px;color:#f6f6f6;font-weight:bold;letter-spacing:2.3px;">y: CIE31</div>
<div class="t" style="left:1067.8px;top:821.0px;font-size:18.8px;color:#f2f2f2;letter-spacing:2.1px;">0.3702</div>
<div class="t" style="left:1175.6px;top:821.0px;font-size:18.8px;color:#f2f2f2;letter-spacing:2.1px;">0.4054</div>
<div class="t" style="left:1283.8px;top:821.0px;font-size:18.8px;color:#f2f2f2;letter-spacing:2.1px;">0.4401</div>
<div class="t" style="left:1391.2px;top:821.0px;font-size:18.8px;color:#f2f2f2;letter-spacing:2.1px;">0.4718</div>
<div class="t" style="left:1499.5px;top:821.0px;font-size:18.8px;color:#f2f2f2;letter-spacing:2.1px;">0.5101</div>
<div style="position:absolute;left:863.5px;top:842.6px;width:737.5px;height:26.3px;background:#3f3f3f"></div>
<div class="t" style="left:882.7px;top:847.4px;font-size:18.6px;color:#f6f6f6;font-weight:bold;letter-spacing:2.3px;">Y</div>
<div class="t" style="left:1067.8px;top:847.3px;font-size:18.8px;color:#f2f2f2;letter-spacing:2.1px;">185.4689</div>
<div class="t" style="left:1175.6px;top:847.3px;font-size:18.8px;color:#f2f2f2;letter-spacing:2.1px;">181.6678</div>
<div class="t" style="left:1283.8px;top:847.3px;font-size:18.8px;color:#f2f2f2;letter-spacing:2.1px;">179.0065</div>
<div class="t" style="left:1391.2px;top:847.3px;font-size:18.8px;color:#f2f2f2;letter-spacing:2.1px;">178.0706</div>
<div class="t" style="left:1499.5px;top:847.3px;font-size:18.8px;color:#f2f2f2;letter-spacing:2.1px;">175.8876</div>
<div style="position:absolute;left:863.5px;top:868.9px;width:737.5px;height:26.3px;background:#858585"></div>
<div class="t" style="left:882.7px;top:873.7px;font-size:18.6px;color:#f6f6f6;font-weight:bold;letter-spacing:2.3px;">Target x:CIE31</div>
<div class="t" style="left:1067.8px;top:873.5px;font-size:18.8px;color:#f2f2f2;letter-spacing:2.1px;">0.3344</div>
<div class="t" style="left:1175.6px;top:873.5px;font-size:18.8px;color:#f2f2f2;letter-spacing:2.1px;">0.3564</div>
<div class="t" style="left:1283.8px;top:873.5px;font-size:18.8px;color:#f2f2f2;letter-spacing:2.1px;">0.3773</div>
<div class="t" style="left:1391.2px;top:873.5px;font-size:18.8px;color:#f2f2f2;letter-spacing:2.1px;">0.3969</div>
<div class="t" style="left:1499.5px;top:873.5px;font-size:18.8px;color:#f2f2f2;letter-spacing:2.1px;">0.4193</div>
<div style="position:absolute;left:863.5px;top:895.1px;width:737.5px;height:26.3px;background:#3f3f3f"></div>
<div class="t" style="left:882.7px;top:900.0px;font-size:18.6px;color:#f6f6f6;font-weight:bold;letter-spacing:2.3px;">Target y:CIE31</div>
<div class="t" style="left:1067.8px;top:899.8px;font-size:18.8px;color:#f2f2f2;letter-spacing:2.1px;">0.3648</div>
<div class="t" style="left:1175.6px;top:899.8px;font-size:18.8px;color:#f2f2f2;letter-spacing:2.1px;">0.4013</div>
<div class="t" style="left:1283.8px;top:899.8px;font-size:18.8px;color:#f2f2f2;letter-spacing:2.1px;">0.4358</div>
<div class="t" style="left:1391.2px;top:899.8px;font-size:18.8px;color:#f2f2f2;letter-spacing:2.1px;">0.4682</div>
<div class="t" style="left:1499.5px;top:899.8px;font-size:18.8px;color:#f2f2f2;letter-spacing:2.1px;">0.5053</div>
<div style="position:absolute;left:863.5px;top:921.4px;width:737.5px;height:26.3px;background:#858585"></div>
<div class="t" style="left:882.7px;top:926.3px;font-size:18.6px;color:#f6f6f6;font-weight:bold;letter-spacing:2.3px;">Target Y</div>
<div class="t" style="left:1067.8px;top:926.1px;font-size:18.8px;color:#f2f2f2;letter-spacing:2.1px;">185.7901</div>
<div class="t" style="left:1175.6px;top:926.1px;font-size:18.8px;color:#f2f2f2;letter-spacing:2.1px;">182.5289</div>
<div class="t" style="left:1283.8px;top:926.1px;font-size:18.8px;color:#f2f2f2;letter-spacing:2.1px;">180.0232</div>
<div class="t" style="left:1391.2px;top:926.1px;font-size:18.8px;color:#f2f2f2;letter-spacing:2.1px;">178.0567</div>
<div class="t" style="left:1499.5px;top:926.1px;font-size:18.8px;color:#f2f2f2;letter-spacing:2.1px;">176.1555</div>
<div style="position:absolute;left:863.5px;top:947.7px;width:737.5px;height:26.3px;background:#3f3f3f"></div>
<div class="t" style="left:882.7px;top:952.6px;font-size:18.6px;color:#f6f6f6;font-weight:bold;letter-spacing:2.3px;">ΔE 2000</div>
<div class="t" style="left:1067.8px;top:952.4px;font-size:18.8px;color:#f2f2f2;letter-spacing:2.1px;">1.9912</div>
<div class="t" style="left:1175.6px;top:952.4px;font-size:18.8px;color:#f2f2f2;letter-spacing:2.1px;">1.2292</div>
<div class="t" style="left:1283.8px;top:952.4px;font-size:18.8px;color:#f2f2f2;letter-spacing:2.1px;">0.8782</div>
<div class="t" style="left:1391.2px;top:952.4px;font-size:18.8px;color:#f2f2f2;letter-spacing:2.1px;">1.1142</div>
<div class="t" style="left:1499.5px;top:952.4px;font-size:18.8px;color:#f2f2f2;letter-spacing:2.1px;">0.9022</div>
<div style="position:absolute;left:863.5px;top:974.0px;width:737.5px;height:26.3px;background:#858585"></div>
<div class="t" style="left:882.7px;top:978.9px;font-size:18.6px;color:#f6f6f6;font-weight:bold;letter-spacing:2.3px;">ΔE ITP</div>
<div class="t" style="left:1067.8px;top:978.7px;font-size:18.8px;color:#f2f2f2;letter-spacing:2.1px;">2.4786</div>
<div class="t" style="left:1175.6px;top:978.7px;font-size:18.8px;color:#f2f2f2;letter-spacing:2.1px;">2.2868</div>
<div class="t" style="left:1283.8px;top:978.7px;font-size:18.8px;color:#f2f2f2;letter-spacing:2.1px;">2.1855</div>
<div class="t" style="left:1391.2px;top:978.7px;font-size:18.8px;color:#f2f2f2;letter-spacing:2.1px;">2.5259</div>
<div class="t" style="left:1499.5px;top:978.7px;font-size:18.8px;color:#f2f2f2;letter-spacing:2.1px;">2.7229</div>
<div style="position:absolute;left:1214.3px;top:187.6px;width:705.7px;height:565.7px;background:#1d1d1d"></div>
<div style="position:absolute;left:1221px;top:194px;width:691px;height:552.8px;background:#333"></div>
<div style="position:absolute;left:1259px;top:218px;width:650px;height:500px;background:#232323"></div>
<svg style="position:absolute;left:0;top:0" width="1920" height="1146" viewBox="0 0 1920 1146"><defs><clipPath id="clL"><path d="M1536.7 704.3 L1536.0 704.3 L1534.9 704.3 L1533.7 704.2 L1532.6 704.1 L1531.7 704.0 L1531.0 703.7 L1530.4 703.4 L1529.9 703.0 L1529.4 702.6 L1528.8 702.1 L1528.2 701.6 L1527.5 701.1 L1526.7 700.5 L1525.9 699.9 L1525.0 699.2 L1524.1 698.4 L1523.0 697.6 L1522.0 696.8 L1520.8 695.8 L1519.6 694.9 L1518.4 693.8 L1517.1 692.7 L1515.7 691.5 L1514.3 690.3 L1512.8 689.0 L1511.2 687.6 L1509.5 686.3 L1507.8 684.8 L1505.9 683.3 L1504.0 681.7 L1501.9 680.0 L1499.8 678.2 L1497.5 676.3 L1495.1 674.3 L1492.6 672.3 L1490.1 670.2 L1487.4 668.0 L1484.6 665.7 L1481.8 663.3 L1478.8 660.7 L1475.6 658.0 L1472.4 655.1 L1469.0 652.2 L1465.5 649.0 L1461.9 645.5 L1458.1 641.9 L1454.3 638.2 L1450.4 634.3 L1446.2 629.9 L1441.7 624.9 L1436.8 619.3 L1431.6 613.3 L1426.2 606.8 L1420.6 599.8 L1414.8 592.4 L1408.8 584.4 L1402.5 576.0 L1396.1 567.0 L1389.6 557.7 L1383.0 547.9 L1376.2 537.6 L1369.3 526.8 L1362.3 515.6 L1355.4 504.2 L1348.5 492.7 L1341.7 481.0 L1334.8 469.0 L1328.0 456.8 L1321.5 444.7 L1315.4 432.9 L1309.6 421.1 L1304.1 409.3 L1298.9 397.7 L1294.0 386.4 L1289.4 375.5 L1285.2 365.0 L1281.4 354.9 L1277.9 345.1 L1274.7 335.8 L1271.8 327.1 L1269.4 318.9 L1267.3 311.3 L1265.5 304.1 L1264.0 297.4 L1262.7 291.1 L1261.8 285.3 L1261.1 279.9 L1260.7 275.0 L1260.5 270.4 L1260.5 266.1 L1260.8 262.0 L1261.3 258.3 L1262.0 254.9 L1262.9 251.8 L1264.0 248.9 L1265.3 246.2 L1266.8 243.8 L1268.5 241.6 L1270.3 239.7 L1272.3 238.0 L1274.4 236.4 L1276.6 235.2 L1279.0 234.1 L1281.4 233.2 L1284.0 232.4 L1286.6 231.7 L1289.3 231.2 L1292.1 230.9 L1295.0 230.6 L1297.9 230.3 L1300.9 230.1 L1303.9 230.0 L1307.0 229.9 L1310.0 229.9 L1313.1 229.8 L1316.2 229.8 L1319.2 229.8 L1322.3 229.9 L1325.4 229.9 L1328.5 230.0 L1331.7 230.1 L1334.9 230.2 L1338.1 230.4 L1341.3 230.6 L1344.6 230.8 L1348.0 231.0 L1351.4 231.2 L1354.9 231.5 L1358.4 231.7 L1362.0 232.0 L1365.6 232.3 L1369.3 232.6 L1373.1 233.0 L1376.9 233.3 L1380.8 233.7 L1384.8 234.1 L1388.9 234.5 L1393.0 234.9 L1397.3 235.4 L1401.6 235.8 L1406.0 236.3 L1410.5 236.8 L1415.1 237.3 L1419.7 237.8 L1424.5 238.3 L1429.4 238.8 L1434.4 239.4 L1439.4 239.9 L1444.6 240.5 L1449.9 241.1 L1455.3 241.7 L1460.8 242.3 L1466.4 243.0 L1472.1 243.6 L1478.0 244.3 L1483.9 245.0 L1490.0 245.7 L1496.2 246.4 L1502.5 247.1 L1508.9 247.8 L1515.4 248.6 L1522.0 249.3 L1528.8 250.1 L1535.6 250.9 L1542.6 251.7 L1549.7 252.5 L1556.8 253.4 L1564.1 254.2 L1571.5 255.0 L1578.9 255.9 L1586.4 256.8 L1594.1 257.6 L1601.8 258.5 L1609.5 259.4 L1617.3 260.3 L1625.2 261.2 L1633.1 262.1 L1641.1 263.0 L1649.0 264.0 L1656.9 264.9 L1664.7 265.8 L1672.4 266.6 L1680.0 267.5 L1687.6 268.4 L1695.2 269.3 L1702.8 270.1 L1710.3 271.0 L1717.9 271.9 L1725.2 272.7 L1732.5 273.6 L1739.5 274.4 L1746.4 275.1 L1753.1 275.9 L1759.7 276.7 L1766.1 277.4 L1772.4 278.1 L1778.5 278.8 L1784.5 279.5 L1790.3 280.2 L1795.9 280.8 L1801.4 281.5 L1806.6 282.1 L1811.7 282.7 L1816.6 283.2 L1821.3 283.8 L1825.9 284.3 L1830.3 284.8 L1834.6 285.3 L1838.7 285.8 L1842.7 286.2 L1846.5 286.6 L1850.2 287.1 L1853.7 287.5 L1857.2 287.9 L1860.6 288.3 L1863.9 288.6 L1867.1 289.0 L1870.2 289.4 L1873.2 289.7 L1876.1 290.1 L1878.9 290.4 L1881.7 290.7 L1884.3 291.0 L1886.8 291.3 L1889.2 291.6 L1891.6 291.8 L1893.8 292.1 L1896.0 292.4 L1898.1 292.6 L1900.0 292.8 L1901.7 293.0 L1903.3 293.2 L1904.8 293.4 L1906.3 293.5 L1908.1 293.7 L1910.2 294.0 L1912.4 294.2 L1914.8 294.5 L1917.1 294.8 L1919.3 295.0 L1921.4 295.3 L1923.6 295.5 L1925.7 295.8 L1927.6 296.0 L1929.2 296.2 L1930.4 296.3 L1931.3 296.4 L1931.9 296.5 L1932.5 296.5 L1932.9 296.6Z"/></clipPath><clipPath id="clT"><path d="M1394.1 250.0 L1746.2 282.9 L1448.6 586.6Z"/></clipPath><clipPath id="clP"><rect x="1259" y="218" width="650" height="500"/></clipPath><filter id="blr" x="-5%" y="-5%" width="110%" height="110%"><feGaussianBlur stdDeviation="6.6000000000000005"/></filter></defs><g clip-path="url(#clP)"><g clip-path="url(#clL)"><g filter="url(#blr)"><rect x="1259" y="218" width="132" height="12" fill="#009c00"/><rect x="1391" y="218" width="12" height="12" fill="#0c9c00"/><rect x="1403" y="218" width="12" height="12" fill="#189c00"/><rect x="1415" y="218" width="12" height="12" fill="#2a9c00"/><rect x="1427" y="218" width="12" height="12" fill="#429c00"/><rect x="1439" y="218" width="12" height="12" fill="#549c00"/><rect x="1451" y="218" width="12" height="12" fill="#6c9c00"/><rect x="1463" y="218" width="12" height="12" fill="#849c00"/><rect x="1475" y="218" width="12" height="12" fill="#9c9c00"/><rect x="1487" y="218" width="12" height="12" fill="#9c8a00"/><rect x="1499" y="218" width="12" height="12" fill="#9c7800"/><rect x="1259" y="230" width="132" height="12" fill="#009c00"/><rect x="1391" y="230" width="12" height="12" fill="#069c00"/><rect x="1403" y="230" width="12" height="12" fill="#189c00"/><rect x="1415" y="230" width="12" height="12" fill="#2a9c00"/><rect x="1427" y="230" width="12" height="12" fill="#3c9c00"/><rect x="1439" y="230" width="12" height="12" fill="#549c00"/><rect x="1451" y="230" width="12" height="12" fill="#6c9c00"/><rect x="1463" y="230" width="12" height="12" fill="#849c00"/><rect x="1475" y="230" width="12" height="12" fill="#9c9c00"/><rect x="1487" y="230" width="12" height="12" fill="#9c8400"/><rect x="1499" y="230" width="12" height="12" fill="#9c7200"/><rect x="1511" y="230" width="12" height="12" fill="#9c6600"/><rect x="1523" y="230" width="12" height="12" fill="#9c5a00"/><rect x="1535" y="230" width="12" height="12" fill="#9c4e00"/><rect x="1547" y="230" width="12" height="12" fill="#9c4200"/><rect x="1559" y="230" width="12" height="12" fill="#9c3c00"/><rect x="1571" y="230" width="12" height="12" fill="#9c3600"/><rect x="1583" y="230" width="12" height="12" fill="#9c3000"/><rect x="1595" y="230" width="12" height="12" fill="#9c2a00"/><rect x="1607" y="230" width="12" height="12" fill="#9c2400"/><rect x="1259" y="242" width="24" height="12" fill="#009c0c"/><rect x="1283" y="242" width="60" height="12" fill="#009c06"/><rect x="1343" y="242" width="48" height="12" fill="#009c00"/><rect x="1391" y="242" width="12" height="12" fill="#069c00"/><rect x="1403" y="242" width="12" height="12" fill="#189c00"/><rect x="1415" y="242" width="12" height="12" fill="#2a9c00"/><rect x="1427" y="242" width="12" height="12" fill="#3c9c00"/><rect x="1439" y="242" width="12" height="12" fill="#549c00"/><rect x="1451" y="242" width="12" height="12" fill="#6c9c00"/><rect x="1463" y="242" width="12" height="12" fill="#849c00"/><rect x="1475" y="242" width="12" height="12" fill="#9c9c00"/><rect x="1487" y="242" width="12" height="12" fill="#9c8400"/><rect x="1499" y="242" width="12" height="12" fill="#9c7200"/><rect x="1511" y="242" width="12" height="12" fill="#9c6000"/><rect x="1523" y="242" width="12" height="12" fill="#9c5400"/><rect x="1535" y="242" width="12" height="12" fill="#9c4800"/><rect x="1547" y="242" width="12" height="12" fill="#9c4200"/><rect x="1559" y="242" width="12" height="12" fill="#9c3c00"/><rect x="1571" y="242" width="12" height="12" fill="#9c3000"/><rect x="1583" y="242" width="24" height="12" fill="#9c2a00"/><rect x="1607" y="242" width="12" height="12" fill="#9c2400"/><rect x="1619" y="242" width="12" height="12" fill="#9c1e00"/><rect x="1631" y="242" width="24" height="12" fill="#9c1800"/><rect x="1655" y="242" width="24" height="12" fill="#9c1200"/><rect x="1679" y="242" width="36" height="12" fill="#9c0c00"/><rect x="1259" y="254" width="36" height="12" fill="#009c18"/><rect x="1295" y="254" width="84" height="12" fill="#009c12"/><rect x="1379" y="254" width="12" height="12" fill="#009c0c"/><rect x="1391" y="254" width="12" height="12" fill="#00ff18"/><rect x="1403" y="254" width="12" height="12" fill="#1eff12"/><rect x="1415" y="254" width="12" height="12" fill="#42ff12"/><rect x="1427" y="254" width="12" height="12" fill="#60ff12"/><rect x="1439" y="254" width="12" height="12" fill="#84ff0c"/><rect x="1451" y="254" width="12" height="12" fill="#aeff0c"/><rect x="1463" y="254" width="12" height="12" fill="#d8ff06"/><rect x="1475" y="254" width="12" height="12" fill="#fff606"/><rect x="1487" y="254" width="12" height="12" fill="#ffd200"/><rect x="1499" y="254" width="12" height="12" fill="#9c6c00"/><rect x="1511" y="254" width="12" height="12" fill="#9c6000"/><rect x="1523" y="254" width="12" height="12" fill="#9c5400"/><rect x="1535" y="254" width="12" height="12" fill="#9c4800"/><rect x="1547" y="254" width="12" height="12" fill="#9c3c00"/><rect x="1559" y="254" width="12" height="12" fill="#9c3600"/><rect x="1571" y="254" width="12" height="12" fill="#9c3000"/><rect x="1583" y="254" width="12" height="12" fill="#9c2a00"/><rect x="1595" y="254" width="12" height="12" fill="#9c2400"/><rect x="1607" y="254" width="24" height="12" fill="#9c1e00"/><rect x="1631" y="254" width="24" height="12" fill="#9c1800"/><rect x="1655" y="254" width="24" height="12" fill="#9c1200"/><rect x="1679" y="254" width="24" height="12" fill="#9c0c00"/><rect x="1703" y="254" width="48" height="12" fill="#9c0600"/><rect x="1751" y="254" width="72" height="12" fill="#9c0000"/><rect x="1259" y="266" width="84" height="12" fill="#009c24"/><rect x="1343" y="266" width="60" height="12" fill="#009c1e"/><rect x="1403" y="266" width="12" height="12" fill="#1eff30"/><rect x="1415" y="266" width="12" height="12" fill="#3cff30"/><rect x="1427" y="266" width="12" height="12" fill="#60ff30"/><rect x="1439" y="266" width="12" height="12" fill="#84ff30"/><rect x="1451" y="266" width="12" height="12" fill="#aeff2a"/><rect x="1463" y="266" width="12" height="12" fill="#d8ff2a"/><rect x="1475" y="266" width="12" height="12" fill="#fff62a"/><rect x="1487" y="266" width="12" height="12" fill="#ffcc1e"/><rect x="1499" y="266" width="12" height="12" fill="#ffae18"/><rect x="1511" y="266" width="12" height="12" fill="#ff9612"/><rect x="1523" y="266" width="12" height="12" fill="#ff7e12"/><rect x="1535" y="266" width="12" height="12" fill="#ff6c0c"/><rect x="1547" y="266" width="12" height="12" fill="#ff600c"/><rect x="1559" y="266" width="12" height="12" fill="#ff5406"/><rect x="1571" y="266" width="12" height="12" fill="#ff4806"/><rect x="1583" y="266" width="12" height="12" fill="#ff4206"/><rect x="1595" y="266" width="12" height="12" fill="#ff3606"/><rect x="1607" y="266" width="12" height="12" fill="#ff3000"/><rect x="1619" y="266" width="12" height="12" fill="#ff2a00"/><rect x="1631" y="266" width="12" height="12" fill="#9c1800"/><rect x="1643" y="266" width="24" height="12" fill="#9c1200"/><rect x="1667" y="266" width="36" height="12" fill="#9c0c00"/><rect x="1703" y="266" width="36" height="12" fill="#9c0600"/><rect x="1739" y="266" width="180" height="12" fill="#9c0000"/><rect x="1259" y="278" width="144" height="12" fill="#009c30"/><rect x="1403" y="278" width="12" height="12" fill="#18ff4e"/><rect x="1415" y="278" width="12" height="12" fill="#3cff4e"/><rect x="1427" y="278" width="12" height="12" fill="#60ff4e"/><rect x="1439" y="278" width="12" height="12" fill="#84ff4e"/><rect x="1451" y="278" width="12" height="12" fill="#aeff4e"/><rect x="1463" y="278" width="12" height="12" fill="#deff4e"/><rect x="1475" y="278" width="12" height="12" fill="#fff04e"/><rect x="1487" y="278" width="12" height="12" fill="#ffc63c"/><rect x="1499" y="278" width="12" height="12" fill="#ffa836"/><rect x="1511" y="278" width="12" height="12" fill="#ff9030"/><rect x="1523" y="278" width="12" height="12" fill="#ff782a"/><rect x="1535" y="278" width="12" height="12" fill="#ff6c24"/><rect x="1547" y="278" width="12" height="12" fill="#ff5a1e"/><rect x="1559" y="278" width="12" height="12" fill="#ff4e18"/><rect x="1571" y="278" width="12" height="12" fill="#ff4818"/><rect x="1583" y="278" width="12" height="12" fill="#ff3c12"/><rect x="1595" y="278" width="12" height="12" fill="#ff3612"/><rect x="1607" y="278" width="12" height="12" fill="#ff3012"/><rect x="1619" y="278" width="12" height="12" fill="#ff2a0c"/><rect x="1631" y="278" width="12" height="12" fill="#ff240c"/><rect x="1643" y="278" width="12" height="12" fill="#ff1e0c"/><rect x="1655" y="278" width="12" height="12" fill="#ff1806"/><rect x="1667" y="278" width="24" height="12" fill="#ff1206"/><rect x="1691" y="278" width="12" height="12" fill="#ff0c06"/><rect x="1703" y="278" width="12" height="12" fill="#ff0606"/><rect x="1715" y="278" width="12" height="12" fill="#ff0600"/><rect x="1727" y="278" width="24" height="12" fill="#ff0000"/><rect x="1751" y="278" width="168" height="12" fill="#9c0000"/><rect x="1259" y="290" width="132" height="12" fill="#009c42"/><rect x="1391" y="290" width="12" height="12" fill="#009c48"/><rect x="1403" y="290" width="12" height="12" fill="#12ff72"/><rect x="1415" y="290" width="12" height="12" fill="#36ff72"/><rect x="1427" y="290" width="12" height="12" fill="#5aff72"/><rect x="1439" y="290" width="12" height="12" fill="#84ff78"/><rect x="1451" y="290" width="12" height="12" fill="#b4ff78"/><rect x="1463" y="290" width="12" height="12" fill="#e4ff78"/><rect x="1475" y="290" width="12" height="12" fill="#ffea72"/><rect x="1487" y="290" width="12" height="12" fill="#ffc060"/><rect x="1499" y="290" width="12" height="12" fill="#ffa254"/><rect x="1511" y="290" width="12" height="12" fill="#ff8a48"/><rect x="1523" y="290" width="12" height="12" fill="#ff783c"/><rect x="1535" y="290" width="12" height="12" fill="#ff6636"/><rect x="1547" y="290" width="12" height="12" fill="#ff5a30"/><rect x="1559" y="290" width="12" height="12" fill="#ff4e2a"/><rect x="1571" y="290" width="12" height="12" fill="#ff422a"/><rect x="1583" y="290" width="12" height="12" fill="#ff3624"/><rect x="1595" y="290" width="12" height="12" fill="#ff301e"/><rect x="1607" y="290" width="12" height="12" fill="#ff2a1e"/><rect x="1619" y="290" width="12" height="12" fill="#ff2418"/><rect x="1631" y="290" width="12" height="12" fill="#ff1e18"/><rect x="1643" y="290" width="12" height="12" fill="#ff1818"/><rect x="1655" y="290" width="24" height="12" fill="#ff1212"/><rect x="1679" y="290" width="12" height="12" fill="#ff0c12"/><rect x="1691" y="290" width="12" height="12" fill="#ff0c0c"/><rect x="1703" y="290" width="12" height="12" fill="#ff060c"/><rect x="1715" y="290" width="24" height="12" fill="#ff000c"/><rect x="1739" y="290" width="60" height="12" fill="#9c0006"/><rect x="1799" y="290" width="120" height="12" fill="#9c0000"/><rect x="1259" y="302" width="48" height="12" fill="#009c4e"/><rect x="1307" y="302" width="60" height="12" fill="#009c54"/><rect x="1367" y="302" width="36" height="12" fill="#009c5a"/><rect x="1403" y="302" width="12" height="12" fill="#12ff96"/><rect x="1415" y="302" width="12" height="12" fill="#36ff96"/><rect x="1427" y="302" width="12" height="12" fill="#5aff9c"/><rect x="1439" y="302" width="12" height="12" fill="#84ff9c"/><rect x="1451" y="302" width="12" height="12" fill="#b4ffa2"/><rect x="1463" y="302" width="12" height="12" fill="#e4ffa8"/><rect x="1475" y="302" width="12" height="12" fill="#ffe496"/><rect x="1487" y="302" width="12" height="12" fill="#ffba84"/><rect x="1499" y="302" width="12" height="12" fill="#ff9c72"/><rect x="1511" y="302" width="12" height="12" fill="#ff8460"/><rect x="1523" y="302" width="12" height="12" fill="#ff7254"/><rect x="1535" y="302" width="12" height="12" fill="#ff604e"/><rect x="1547" y="302" width="12" height="12" fill="#ff5442"/><rect x="1559" y="302" width="12" height="12" fill="#ff483c"/><rect x="1571" y="302" width="12" height="12" fill="#ff3c36"/><rect x="1583" y="302" width="12" height="12" fill="#ff3630"/><rect x="1595" y="302" width="12" height="12" fill="#ff2a30"/><rect x="1607" y="302" width="12" height="12" fill="#ff242a"/><rect x="1619" y="302" width="12" height="12" fill="#ff1e24"/><rect x="1631" y="302" width="24" height="12" fill="#ff1824"/><rect x="1655" y="302" width="12" height="12" fill="#ff121e"/><rect x="1667" y="302" width="12" height="12" fill="#ff0c1e"/><rect x="1679" y="302" width="12" height="12" fill="#ff0c18"/><rect x="1691" y="302" width="24" height="12" fill="#ff0618"/><rect x="1715" y="302" width="12" height="12" fill="#ff0012"/><rect x="1727" y="302" width="48" height="12" fill="#9c000c"/><rect x="1775" y="302" width="132" height="12" fill="#9c0006"/><rect x="1907" y="302" width="12" height="12" fill="#9c0000"/><rect x="1259" y="314" width="48" height="12" fill="#009c60"/><rect x="1307" y="314" width="48" height="12" fill="#009c66"/><rect x="1355" y="314" width="24" height="12" fill="#009c6c"/><rect x="1379" y="314" width="24" height="12" fill="#009c72"/><rect x="1403" y="314" width="12" height="12" fill="#0cffba"/><rect x="1415" y="314" width="12" height="12" fill="#30ffc0"/><rect x="1427" y="314" width="12" height="12" fill="#5affc6"/><rect x="1439" y="314" width="12" height="12" fill="#84ffcc"/><rect x="1451" y="314" width="12" height="12" fill="#b4ffd2"/><rect x="1463" y="314" width="12" height="12" fill="#eaffd8"/><rect x="1475" y="314" width="12" height="12" fill="#ffdec0"/><rect x="1487" y="314" width="12" height="12" fill="#ffb4a2"/><rect x="1499" y="314" width="12" height="12" fill="#ff9690"/><rect x="1511" y="314" width="12" height="12" fill="#ff7e7e"/><rect x="1523" y="314" width="12" height="12" fill="#ff6c6c"/><rect x="1535" y="314" width="12" height="12" fill="#ff5a60"/><rect x="1547" y="314" width="12" height="12" fill="#ff4e5a"/><rect x="1559" y="314" width="12" height="12" fill="#ff424e"/><rect x="1571" y="314" width="12" height="12" fill="#ff3c48"/><rect x="1583" y="314" width="12" height="12" fill="#ff3042"/><rect x="1595" y="314" width="12" height="12" fill="#ff2a3c"/><rect x="1607" y="314" width="12" height="12" fill="#ff2436"/><rect x="1619" y="314" width="12" height="12" fill="#ff1e36"/><rect x="1631" y="314" width="12" height="12" fill="#ff1830"/><rect x="1643" y="314" width="12" height="12" fill="#ff122a"/><rect x="1655" y="314" width="12" height="12" fill="#ff0c2a"/><rect x="1667" y="314" width="12" height="12" fill="#ff0c24"/><rect x="1679" y="314" width="24" height="12" fill="#ff0624"/><rect x="1703" y="314" width="12" height="12" fill="#ff001e"/><rect x="1715" y="314" width="48" height="12" fill="#9c0012"/><rect x="1763" y="314" width="84" height="12" fill="#9c000c"/><rect x="1847" y="314" width="72" height="12" fill="#9c0006"/><rect x="1259" y="326" width="12" height="12" fill="#009c6c"/><rect x="1271" y="326" width="36" height="12" fill="#009c72"/><rect x="1307" y="326" width="24" height="12" fill="#009c78"/><rect x="1331" y="326" width="36" height="12" fill="#009c7e"/><rect x="1367" y="326" width="24" height="12" fill="#009c84"/><rect x="1391" y="326" width="12" height="12" fill="#009c8a"/><rect x="1403" y="326" width="12" height="12" fill="#06ffe4"/><rect x="1415" y="326" width="12" height="12" fill="#2affea"/><rect x="1427" y="326" width="12" height="12" fill="#54fff0"/><rect x="1439" y="326" width="12" height="12" fill="#84fffc"/><rect x="1451" y="326" width="12" height="12" fill="#b4fcff"/><rect x="1463" y="326" width="12" height="12" fill="#e4f0ff"/><rect x="1475" y="326" width="12" height="12" fill="#ffd8f0"/><rect x="1487" y="326" width="12" height="12" fill="#ffaecc"/><rect x="1499" y="326" width="12" height="12" fill="#ff90ae"/><rect x="1511" y="326" width="12" height="12" fill="#ff7896"/><rect x="1523" y="326" width="12" height="12" fill="#ff668a"/><rect x="1535" y="326" width="12" height="12" fill="#ff5478"/><rect x="1547" y="326" width="12" height="12" fill="#ff486c"/><rect x="1559" y="326" width="12" height="12" fill="#ff3c66"/><rect x="1571" y="326" width="12" height="12" fill="#ff365a"/><rect x="1583" y="326" width="12" height="12" fill="#ff2a54"/><rect x="1595" y="326" width="12" height="12" fill="#ff244e"/><rect x="1607" y="326" width="12" height="12" fill="#ff1e48"/><rect x="1619" y="326" width="12" height="12" fill="#ff1842"/><rect x="1631" y="326" width="12" height="12" fill="#ff123c"/><rect x="1643" y="326" width="12" height="12" fill="#ff0c3c"/><rect x="1655" y="326" width="12" height="12" fill="#ff0c36"/><rect x="1667" y="326" width="24" height="12" fill="#ff0630"/><rect x="1691" y="326" width="12" height="12" fill="#ff002a"/><rect x="1703" y="326" width="48" height="12" fill="#9c0018"/><rect x="1751" y="326" width="72" height="12" fill="#9c0012"/><rect x="1823" y="326" width="96" height="12" fill="#9c000c"/><rect x="1259" y="338" width="12" height="12" fill="#009c7e"/><rect x="1271" y="338" width="24" height="12" fill="#009c84"/><rect x="1295" y="338" width="24" height="12" fill="#009c8a"/><rect x="1319" y="338" width="24" height="12" fill="#009c90"/><rect x="1343" y="338" width="24" height="12" fill="#009c96"/><rect x="1367" y="338" width="24" height="12" fill="#009c9c"/><rect x="1391" y="338" width="12" height="12" fill="#00969c"/><rect x="1403" y="338" width="12" height="12" fill="#00909c"/><rect x="1415" y="338" width="12" height="12" fill="#24e4ff"/><rect x="1427" y="338" width="12" height="12" fill="#48deff"/><rect x="1439" y="338" width="12" height="12" fill="#6cd8ff"/><rect x="1451" y="338" width="12" height="12" fill="#96ccff"/><rect x="1463" y="338" width="12" height="12" fill="#bac6ff"/><rect x="1475" y="338" width="12" height="12" fill="#e4c0ff"/><rect x="1487" y="338" width="12" height="12" fill="#ffa8f0"/><rect x="1499" y="338" width="12" height="12" fill="#ff8ad2"/><rect x="1511" y="338" width="12" height="12" fill="#ff72b4"/><rect x="1523" y="338" width="12" height="12" fill="#ff60a2"/><rect x="1535" y="338" width="12" height="12" fill="#ff5490"/><rect x="1547" y="338" width="12" height="12" fill="#ff4284"/><rect x="1559" y="338" width="12" height="12" fill="#ff3c78"/><rect x="1571" y="338" width="12" height="12" fill="#ff306c"/><rect x="1583" y="338" width="12" height="12" fill="#ff2a66"/><rect x="1595" y="338" width="12" height="12" fill="#ff1e5a"/><rect x="1607" y="338" width="12" height="12" fill="#ff1854"/><rect x="1619" y="338" width="12" height="12" fill="#ff124e"/><rect x="1631" y="338" width="12" height="12" fill="#ff1248"/><rect x="1643" y="338" width="12" height="12" fill="#ff0c48"/><rect x="1655" y="338" width="12" height="12" fill="#ff0642"/><rect x="1667" y="338" width="12" height="12" fill="#ff063c"/><rect x="1679" y="338" width="12" height="12" fill="#ff003c"/><rect x="1691" y="338" width="12" height="12" fill="#9c0024"/><rect x="1703" y="338" width="36" height="12" fill="#9c001e"/><rect x="1739" y="338" width="60" height="12" fill="#9c0018"/><rect x="1799" y="338" width="84" height="12" fill="#9c0012"/><rect x="1883" y="338" width="36" height="12" fill="#9c000c"/><rect x="1259" y="350" width="12" height="12" fill="#009c90"/><rect x="1271" y="350" width="12" height="12" fill="#009c96"/><rect x="1283" y="350" width="36" height="12" fill="#009c9c"/><rect x="1319" y="350" width="24" height="12" fill="#00969c"/><rect x="1343" y="350" width="12" height="12" fill="#00909c"/><rect x="1355" y="350" width="24" height="12" fill="#008a9c"/><rect x="1379" y="350" width="12" height="12" fill="#00849c"/><rect x="1391" y="350" width="24" height="12" fill="#007e9c"/><rect x="1415" y="350" width="12" height="12" fill="#18c0ff"/><rect x="1427" y="350" width="12" height="12" fill="#3cbaff"/><rect x="1439" y="350" width="12" height="12" fill="#5ab4ff"/><rect x="1451" y="350" width="12" height="12" fill="#7eaeff"/><rect x="1463" y="350" width="12" height="12" fill="#a2a2ff"/><rect x="1475" y="350" width="12" height="12" fill="#c69cff"/><rect x="1487" y="350" width="12" height="12" fill="#ea96ff"/><rect x="1499" y="350" width="12" height="12" fill="#ff84f0"/><rect x="1511" y="350" width="12" height="12" fill="#ff6cd2"/><rect x="1523" y="350" width="12" height="12" fill="#ff5aba"/><rect x="1535" y="350" width="12" height="12" fill="#ff4ea8"/><rect x="1547" y="350" width="12" height="12" fill="#ff4296"/><rect x="1559" y="350" width="12" height="12" fill="#ff368a"/><rect x="1571" y="350" width="12" height="12" fill="#ff2a7e"/><rect x="1583" y="350" width="12" height="12" fill="#ff2478"/><rect x="1595" y="350" width="12" height="12" fill="#ff1e6c"/><rect x="1607" y="350" width="12" height="12" fill="#ff1866"/><rect x="1619" y="350" width="12" height="12" fill="#ff1260"/><rect x="1631" y="350" width="12" height="12" fill="#ff0c5a"/><rect x="1643" y="350" width="12" height="12" fill="#ff0654"/><rect x="1655" y="350" width="12" height="12" fill="#ff064e"/><rect x="1667" y="350" width="12" height="12" fill="#ff0048"/><rect x="1679" y="350" width="24" height="12" fill="#9c002a"/><rect x="1703" y="350" width="36" height="12" fill="#9c0024"/><rect x="1739" y="350" width="48" height="12" fill="#9c001e"/><rect x="1787" y="350" width="60" height="12" fill="#9c0018"/><rect x="1847" y="350" width="60" height="12" fill="#9c0012"/><rect x="1259" y="362" width="12" height="12" fill="#00969c"/><rect x="1271" y="362" width="24" height="12" fill="#00909c"/><rect x="1295" y="362" width="24" height="12" fill="#008a9c"/><rect x="1319" y="362" width="24" height="12" fill="#00849c"/><rect x="1343" y="362" width="12" height="12" fill="#007e9c"/><rect x="1355" y="362" width="24" height="12" fill="#00789c"/><rect x="1379" y="362" width="12" height="12" fill="#00729c"/><rect x="1391" y="362" width="24" height="12" fill="#006c9c"/><rect x="1415" y="362" width="12" height="12" fill="#12a8ff"/><rect x="1427" y="362" width="12" height="12" fill="#309cff"/><rect x="1439" y="362" width="12" height="12" fill="#4e96ff"/><rect x="1451" y="362" width="12" height="12" fill="#6c90ff"/><rect x="1463" y="362" width="12" height="12" fill="#8a8aff"/><rect x="1475" y="362" width="12" height="12" fill="#a884ff"/><rect x="1487" y="362" width="12" height="12" fill="#cc7eff"/><rect x="1499" y="362" width="12" height="12" fill="#ea72ff"/><rect x="1511" y="362" width="12" height="12" fill="#ff66f6"/><rect x="1523" y="362" width="12" height="12" fill="#ff54d8"/><rect x="1535" y="362" width="12" height="12" fill="#ff48c0"/><rect x="1547" y="362" width="12" height="12" fill="#ff3cae"/><rect x="1559" y="362" width="12" height="12" fill="#ff30a2"/><rect x="1571" y="362" width="12" height="12" fill="#ff2490"/><rect x="1583" y="362" width="12" height="12" fill="#ff1e84"/><rect x="1595" y="362" width="12" height="12" fill="#ff187e"/><rect x="1607" y="362" width="12" height="12" fill="#ff1272"/><rect x="1619" y="362" width="12" height="12" fill="#ff0c6c"/><rect x="1631" y="362" width="12" height="12" fill="#ff0666"/><rect x="1643" y="362" width="12" height="12" fill="#ff0660"/><rect x="1655" y="362" width="12" height="12" fill="#ff005a"/><rect x="1667" y="362" width="12" height="12" fill="#9c0036"/><rect x="1679" y="362" width="24" height="12" fill="#9c0030"/><rect x="1703" y="362" width="36" height="12" fill="#9c002a"/><rect x="1739" y="362" width="36" height="12" fill="#9c0024"/><rect x="1775" y="362" width="60" height="12" fill="#9c001e"/><rect x="1835" y="362" width="60" height="12" fill="#9c0018"/><rect x="1271" y="374" width="12" height="12" fill="#00849c"/><rect x="1283" y="374" width="24" height="12" fill="#007e9c"/><rect x="1307" y="374" width="24" height="12" fill="#00789c"/><rect x="1331" y="374" width="12" height="12" fill="#00729c"/><rect x="1343" y="374" width="24" height="12" fill="#006c9c"/><rect x="1367" y="374" width="24" height="12" fill="#00669c"/><rect x="1391" y="374" width="12" height="12" fill="#00609c"/><rect x="1403" y="374" width="12" height="12" fill="#005a9c"/><rect x="1415" y="374" width="12" height="12" fill="#0c90ff"/><rect x="1427" y="374" width="12" height="12" fill="#248aff"/><rect x="1439" y="374" width="12" height="12" fill="#4284ff"/><rect x="1451" y="374" width="12" height="12" fill="#5a7eff"/><rect x="1463" y="374" width="12" height="12" fill="#7878ff"/><rect x="1475" y="374" width="12" height="12" fill="#966cff"/><rect x="1487" y="374" width="12" height="12" fill="#ae66ff"/><rect x="1499" y="374" width="12" height="12" fill="#cc60ff"/><rect x="1511" y="374" width="12" height="12" fill="#ea5aff"/><rect x="1523" y="374" width="12" height="12" fill="#ff4ef6"/><rect x="1535" y="374" width="12" height="12" fill="#ff42de"/><rect x="1547" y="374" width="12" height="12" fill="#ff36c6"/><rect x="1559" y="374" width="12" height="12" fill="#ff2ab4"/><rect x="1571" y="374" width="12" height="12" fill="#ff24a8"/><rect x="1583" y="374" width="12" height="12" fill="#ff1896"/><rect x="1595" y="374" width="12" height="12" fill="#ff1290"/><rect x="1607" y="374" width="12" height="12" fill="#ff0c84"/><rect x="1619" y="374" width="12" height="12" fill="#ff0c78"/><rect x="1631" y="374" width="12" height="12" fill="#ff0672"/><rect x="1643" y="374" width="12" height="12" fill="#ff006c"/><rect x="1655" y="374" width="24" height="12" fill="#9c003c"/><rect x="1679" y="374" width="24" height="12" fill="#9c0036"/><rect x="1703" y="374" width="36" height="12" fill="#9c0030"/><rect x="1739" y="374" width="36" height="12" fill="#9c002a"/><rect x="1775" y="374" width="48" height="12" fill="#9c0024"/><rect x="1823" y="374" width="60" height="12" fill="#9c001e"/><rect x="1271" y="386" width="24" height="12" fill="#00729c"/><rect x="1295" y="386" width="24" height="12" fill="#006c9c"/><rect x="1319" y="386" width="24" height="12" fill="#00669c"/><rect x="1343" y="386" width="24" height="12" fill="#00609c"/><rect x="1367" y="386" width="24" height="12" fill="#005a9c"/><rect x="1391" y="386" width="12" height="12" fill="#00549c"/><rect x="1403" y="386" width="12" height="12" fill="#004e9c"/><rect x="1415" y="386" width="12" height="12" fill="#067eff"/><rect x="1427" y="386" width="12" height="12" fill="#1e78ff"/><rect x="1439" y="386" width="12" height="12" fill="#3672ff"/><rect x="1451" y="386" width="12" height="12" fill="#4e6cff"/><rect x="1463" y="386" width="12" height="12" fill="#6c66ff"/><rect x="1475" y="386" width="12" height="12" fill="#8460ff"/><rect x="1487" y="386" width="12" height="12" fill="#9c5aff"/><rect x="1499" y="386" width="12" height="12" fill="#b44eff"/><rect x="1511" y="386" width="12" height="12" fill="#d248ff"/><rect x="1523" y="386" width="12" height="12" fill="#ea42ff"/><rect x="1535" y="386" width="12" height="12" fill="#ff3cf6"/><rect x="1547" y="386" width="12" height="12" fill="#ff30de"/><rect x="1559" y="386" width="12" height="12" fill="#ff24cc"/><rect x="1571" y="386" width="12" height="12" fill="#ff1eba"/><rect x="1583" y="386" width="12" height="12" fill="#ff18a8"/><rect x="1595" y="386" width="12" height="12" fill="#ff129c"/><rect x="1607" y="386" width="12" height="12" fill="#ff0c96"/><rect x="1619" y="386" width="12" height="12" fill="#ff068a"/><rect x="1631" y="386" width="12" height="12" fill="#ff007e"/><rect x="1643" y="386" width="24" height="12" fill="#9c0048"/><rect x="1667" y="386" width="24" height="12" fill="#9c0042"/><rect x="1691" y="386" width="12" height="12" fill="#9c003c"/><rect x="1703" y="386" width="36" height="12" fill="#9c0036"/><rect x="1739" y="386" width="24" height="12" fill="#9c0030"/><rect x="1763" y="386" width="48" height="12" fill="#9c002a"/><rect x="1811" y="386" width="48" height="12" fill="#9c0024"/><rect x="1859" y="386" width="12" height="12" fill="#9c001e"/><rect x="1271" y="398" width="24" height="12" fill="#00669c"/><rect x="1295" y="398" width="24" height="12" fill="#00609c"/><rect x="1319" y="398" width="24" height="12" fill="#005a9c"/><rect x="1343" y="398" width="24" height="12" fill="#00549c"/><rect x="1367" y="398" width="24" height="12" fill="#004e9c"/><rect x="1391" y="398" width="24" height="12" fill="#00489c"/><rect x="1415" y="398" width="12" height="12" fill="#066cff"/><rect x="1427" y="398" width="12" height="12" fill="#1866ff"/><rect x="1439" y="398" width="12" height="12" fill="#3060ff"/><rect x="1451" y="398" width="12" height="12" fill="#485aff"/><rect x="1463" y="398" width="12" height="12" fill="#6054ff"/><rect x="1475" y="398" width="12" height="12" fill="#724eff"/><rect x="1487" y="398" width="12" height="12" fill="#8a48ff"/><rect x="1499" y="398" width="12" height="12" fill="#a242ff"/><rect x="1511" y="398" width="12" height="12" fill="#ba3cff"/><rect x="1523" y="398" width="12" height="12" fill="#d836ff"/><rect x="1535" y="398" width="12" height="12" fill="#f030ff"/><rect x="1547" y="398" width="12" height="12" fill="#ff2af6"/><rect x="1559" y="398" width="12" height="12" fill="#ff1ede"/><rect x="1571" y="398" width="12" height="12" fill="#ff18cc"/><rect x="1583" y="398" width="12" height="12" fill="#ff12c0"/><rect x="1595" y="398" width="12" height="12" fill="#ff0cae"/><rect x="1607" y="398" width="12" height="12" fill="#ff06a2"/><rect x="1619" y="398" width="12" height="12" fill="#ff0096"/><rect x="1631" y="398" width="12" height="12" fill="#9c005a"/><rect x="1643" y="398" width="12" height="12" fill="#9c0054"/><rect x="1655" y="398" width="12" height="12" fill="#9c004e"/><rect x="1667" y="398" width="24" height="12" fill="#9c0048"/><rect x="1691" y="398" width="24" height="12" fill="#9c0042"/><rect x="1715" y="398" width="24" height="12" fill="#9c003c"/><rect x="1739" y="398" width="24" height="12" fill="#9c0036"/><rect x="1763" y="398" width="36" height="12" fill="#9c0030"/><rect x="1799" y="398" width="48" height="12" fill="#9c002a"/><rect x="1847" y="398" width="12" height="12" fill="#9c0024"/><rect x="1283" y="410" width="24" height="12" fill="#005a9c"/><rect x="1307" y="410" width="24" height="12" fill="#00549c"/><rect x="1331" y="410" width="24" height="12" fill="#004e9c"/><rect x="1355" y="410" width="24" height="12" fill="#00489c"/><rect x="1379" y="410" width="24" height="12" fill="#00429c"/><rect x="1403" y="410" width="24" height="12" fill="#003c9c"/><rect x="1427" y="410" width="12" height="12" fill="#125aff"/><rect x="1439" y="410" width="12" height="12" fill="#2a54ff"/><rect x="1451" y="410" width="12" height="12" fill="#3c4eff"/><rect x="1463" y="410" width="12" height="12" fill="#5448ff"/><rect x="1475" y="410" width="12" height="12" fill="#6642ff"/><rect x="1487" y="410" width="12" height="12" fill="#7e3cff"/><rect x="1499" y="410" width="12" height="12" fill="#9636ff"/><rect x="1511" y="410" width="12" height="12" fill="#a830ff"/><rect x="1523" y="410" width="12" height="12" fill="#c02aff"/><rect x="1535" y="410" width="12" height="12" fill="#d824ff"/><rect x="1547" y="410" width="12" height="12" fill="#f01eff"/><rect x="1559" y="410" width="12" height="12" fill="#ff18f6"/><rect x="1571" y="410" width="12" height="12" fill="#ff12e4"/><rect x="1583" y="410" width="12" height="12" fill="#ff0cd2"/><rect x="1595" y="410" width="12" height="12" fill="#ff06c0"/><rect x="1607" y="410" width="12" height="12" fill="#ff00b4"/><rect x="1619" y="410" width="12" height="12" fill="#9c0066"/><rect x="1631" y="410" width="12" height="12" fill="#9c0060"/><rect x="1643" y="410" width="12" height="12" fill="#9c005a"/><rect x="1655" y="410" width="24" height="12" fill="#9c0054"/><rect x="1679" y="410" width="12" height="12" fill="#9c004e"/><rect x="1691" y="410" width="24" height="12" fill="#9c0048"/><rect x="1715" y="410" width="24" height="12" fill="#9c0042"/><rect x="1739" y="410" width="24" height="12" fill="#9c003c"/><rect x="1763" y="410" width="24" height="12" fill="#9c0036"/><rect x="1787" y="410" width="48" height="12" fill="#9c0030"/><rect x="1835" y="410" width="12" height="12" fill="#9c002a"/><rect x="1283" y="422" width="12" height="12" fill="#00549c"/><rect x="1295" y="422" width="24" height="12" fill="#004e9c"/><rect x="1319" y="422" width="24" height="12" fill="#00489c"/><rect x="1343" y="422" width="24" height="12" fill="#00429c"/><rect x="1367" y="422" width="36" height="12" fill="#003c9c"/><rect x="1403" y="422" width="24" height="12" fill="#00369c"/><rect x="1427" y="422" width="12" height="12" fill="#124eff"/><rect x="1439" y="422" width="12" height="12" fill="#2448ff"/><rect x="1451" y="422" width="12" height="12" fill="#3642ff"/><rect x="1463" y="422" width="12" height="12" fill="#483cff"/><rect x="1475" y="422" width="12" height="12" fill="#603cff"/><rect x="1487" y="422" width="12" height="12" fill="#7236ff"/><rect x="1499" y="422" width="12" height="12" fill="#8430ff"/><rect x="1511" y="422" width="12" height="12" fill="#9c2aff"/><rect x="1523" y="422" width="12" height="12" fill="#ae24ff"/><rect x="1535" y="422" width="12" height="12" fill="#c61eff"/><rect x="1547" y="422" width="12" height="12" fill="#d818ff"/><rect x="1559" y="422" width="12" height="12" fill="#f012ff"/><rect x="1571" y="422" width="12" height="12" fill="#ff0cf6"/><rect x="1583" y="422" width="12" height="12" fill="#ff06e4"/><rect x="1595" y="422" width="12" height="12" fill="#ff00d2"/><rect x="1607" y="422" width="12" height="12" fill="#9c0078"/><rect x="1619" y="422" width="12" height="12" fill="#9c0072"/><rect x="1631" y="422" width="12" height="12" fill="#9c006c"/><rect x="1643" y="422" width="12" height="12" fill="#9c0066"/><rect x="1655" y="422" width="12" height="12" fill="#9c0060"/><rect x="1667" y="422" width="12" height="12" fill="#9c005a"/><rect x="1679" y="422" width="12" height="12" fill="#9c0054"/><rect x="1691" y="422" width="24" height="12" fill="#9c004e"/><rect x="1715" y="422" width="24" height="12" fill="#9c0048"/><rect x="1739" y="422" width="24" height="12" fill="#9c0042"/><rect x="1763" y="422" width="24" height="12" fill="#9c003c"/><rect x="1787" y="422" width="36" height="12" fill="#9c0036"/><rect x="1823" y="422" width="12" height="12" fill="#9c0030"/><rect x="1295" y="434" width="24" height="12" fill="#00489c"/><rect x="1319" y="434" width="24" height="12" fill="#00429c"/><rect x="1343" y="434" width="24" height="12" fill="#003c9c"/><rect x="1367" y="434" width="24" height="12" fill="#00369c"/><rect x="1391" y="434" width="24" height="12" fill="#00309c"/><rect x="1415" y="434" width="12" height="12" fill="#002a9c"/><rect x="1427" y="434" width="12" height="12" fill="#0c42ff"/><rect x="1439" y="434" width="12" height="12" fill="#1e3cff"/><rect x="1451" y="434" width="12" height="12" fill="#303cff"/><rect x="1463" y="434" width="12" height="12" fill="#4236ff"/><rect x="1475" y="434" width="12" height="12" fill="#5430ff"/><rect x="1487" y="434" width="12" height="12" fill="#662aff"/><rect x="1499" y="434" width="12" height="12" fill="#7824ff"/><rect x="1511" y="434" width="12" height="12" fill="#9024ff"/><rect x="1523" y="434" width="12" height="12" fill="#a21eff"/><rect x="1535" y="434" width="12" height="12" fill="#b418ff"/><rect x="1547" y="434" width="12" height="12" fill="#c612ff"/><rect x="1559" y="434" width="12" height="12" fill="#de0cff"/><rect x="1571" y="434" width="12" height="12" fill="#f006ff"/><rect x="1583" y="434" width="12" height="12" fill="#ff00f6"/><rect x="1595" y="434" width="12" height="12" fill="#9c0090"/><rect x="1607" y="434" width="12" height="12" fill="#9c0084"/><rect x="1619" y="434" width="12" height="12" fill="#9c007e"/><rect x="1631" y="434" width="12" height="12" fill="#9c0072"/><rect x="1643" y="434" width="12" height="12" fill="#9c006c"/><rect x="1655" y="434" width="12" height="12" fill="#9c0066"/><rect x="1667" y="434" width="12" height="12" fill="#9c0060"/><rect x="1679" y="434" width="24" height="12" fill="#9c005a"/><rect x="1703" y="434" width="12" height="12" fill="#9c0054"/><rect x="1715" y="434" width="24" height="12" fill="#9c004e"/><rect x="1739" y="434" width="24" height="12" fill="#9c0048"/><rect x="1763" y="434" width="24" height="12" fill="#9c0042"/><rect x="1787" y="434" width="24" height="12" fill="#9c003c"/><rect x="1811" y="434" width="12" height="12" fill="#9c0036"/><rect x="1295" y="446" width="12" height="12" fill="#00429c"/><rect x="1307" y="446" width="36" height="12" fill="#003c9c"/><rect x="1343" y="446" width="24" height="12" fill="#00369c"/><rect x="1367" y="446" width="24" height="12" fill="#00309c"/><rect x="1391" y="446" width="36" height="12" fill="#002a9c"/><rect x="1427" y="446" width="12" height="12" fill="#063cff"/><rect x="1439" y="446" width="12" height="12" fill="#1836ff"/><rect x="1451" y="446" width="12" height="12" fill="#2a30ff"/><rect x="1463" y="446" width="12" height="12" fill="#3c30ff"/><rect x="1475" y="446" width="12" height="12" fill="#4e2aff"/><rect x="1487" y="446" width="12" height="12" fill="#6024ff"/><rect x="1499" y="446" width="12" height="12" fill="#721eff"/><rect x="1511" y="446" width="12" height="12" fill="#8418ff"/><rect x="1523" y="446" width="12" height="12" fill="#9618ff"/><rect x="1535" y="446" width="12" height="12" fill="#a812ff"/><rect x="1547" y="446" width="12" height="12" fill="#ba0cff"/><rect x="1559" y="446" width="12" height="12" fill="#cc06ff"/><rect x="1571" y="446" width="12" height="12" fill="#de00ff"/><rect x="1583" y="446" width="12" height="12" fill="#96009c"/><rect x="1595" y="446" width="12" height="12" fill="#9c009c"/><rect x="1607" y="446" width="12" height="12" fill="#9c0090"/><rect x="1619" y="446" width="12" height="12" fill="#9c0084"/><rect x="1631" y="446" width="12" height="12" fill="#9c007e"/><rect x="1643" y="446" width="12" height="12" fill="#9c0078"/><rect x="1655" y="446" width="12" height="12" fill="#9c0072"/><rect x="1667" y="446" width="12" height="12" fill="#9c006c"/><rect x="1679" y="446" width="12" height="12" fill="#9c0066"/><rect x="1691" y="446" width="12" height="12" fill="#9c0060"/><rect x="1703" y="446" width="12" height="12" fill="#9c005a"/><rect x="1715" y="446" width="24" height="12" fill="#9c0054"/><rect x="1739" y="446" width="12" height="12" fill="#9c004e"/><rect x="1751" y="446" width="24" height="12" fill="#9c0048"/><rect x="1775" y="446" width="36" height="12" fill="#9c0042"/><rect x="1307" y="458" width="36" height="12" fill="#00369c"/><rect x="1343" y="458" width="24" height="12" fill="#00309c"/><rect x="1367" y="458" width="36" height="12" fill="#002a9c"/><rect x="1403" y="458" width="24" height="12" fill="#00249c"/><rect x="1427" y="458" width="12" height="12" fill="#0636ff"/><rect x="1439" y="458" width="12" height="12" fill="#1830ff"/><rect x="1451" y="458" width="12" height="12" fill="#242aff"/><rect x="1463" y="458" width="12" height="12" fill="#3624ff"/><rect x="1475" y="458" width="12" height="12" fill="#4824ff"/><rect x="1487" y="458" width="12" height="12" fill="#541eff"/><rect x="1499" y="458" width="12" height="12" fill="#6618ff"/><rect x="1511" y="458" width="12" height="12" fill="#7812ff"/><rect x="1523" y="458" width="12" height="12" fill="#8a12ff"/><rect x="1535" y="458" width="12" height="12" fill="#9c0cff"/><rect x="1547" y="458" width="12" height="12" fill="#a806ff"/><rect x="1559" y="458" width="12" height="12" fill="#ba00ff"/><rect x="1571" y="458" width="12" height="12" fill="#7e009c"/><rect x="1583" y="458" width="12" height="12" fill="#8a009c"/><rect x="1595" y="458" width="12" height="12" fill="#96009c"/><rect x="1607" y="458" width="12" height="12" fill="#9c009c"/><rect x="1619" y="458" width="12" height="12" fill="#9c0090"/><rect x="1631" y="458" width="12" height="12" fill="#9c008a"/><rect x="1643" y="458" width="12" height="12" fill="#9c007e"/><rect x="1655" y="458" width="12" height="12" fill="#9c0078"/><rect x="1667" y="458" width="12" height="12" fill="#9c0072"/><rect x="1679" y="458" width="12" height="12" fill="#9c006c"/><rect x="1691" y="458" width="12" height="12" fill="#9c0066"/><rect x="1703" y="458" width="12" height="12" fill="#9c0060"/><rect x="1715" y="458" width="24" height="12" fill="#9c005a"/><rect x="1739" y="458" width="12" height="12" fill="#9c0054"/><rect x="1751" y="458" width="24" height="12" fill="#9c004e"/><rect x="1775" y="458" width="24" height="12" fill="#9c0048"/><rect x="1307" y="470" width="12" height="12" fill="#00369c"/><rect x="1319" y="470" width="24" height="12" fill="#00309c"/><rect x="1343" y="470" width="36" height="12" fill="#002a9c"/><rect x="1379" y="470" width="24" height="12" fill="#00249c"/><rect x="1403" y="470" width="24" height="12" fill="#001e9c"/><rect x="1427" y="470" width="12" height="12" fill="#002aff"/><rect x="1439" y="470" width="12" height="12" fill="#122aff"/><rect x="1451" y="470" width="12" height="12" fill="#1e24ff"/><rect x="1463" y="470" width="12" height="12" fill="#301eff"/><rect x="1475" y="470" width="12" height="12" fill="#421eff"/><rect x="1487" y="470" width="12" height="12" fill="#4e18ff"/><rect x="1499" y="470" width="12" height="12" fill="#6012ff"/><rect x="1511" y="470" width="12" height="12" fill="#6c0cff"/><rect x="1523" y="470" width="12" height="12" fill="#7e0cff"/><rect x="1535" y="470" width="12" height="12" fill="#9006ff"/><rect x="1547" y="470" width="12" height="12" fill="#9c00ff"/><rect x="1559" y="470" width="12" height="12" fill="#6c009c"/><rect x="1571" y="470" width="12" height="12" fill="#78009c"/><rect x="1583" y="470" width="12" height="12" fill="#84009c"/><rect x="1595" y="470" width="12" height="12" fill="#8a009c"/><rect x="1607" y="470" width="12" height="12" fill="#96009c"/><rect x="1619" y="470" width="12" height="12" fill="#9c009c"/><rect x="1631" y="470" width="12" height="12" fill="#9c0090"/><rect x="1643" y="470" width="12" height="12" fill="#9c008a"/><rect x="1655" y="470" width="12" height="12" fill="#9c007e"/><rect x="1667" y="470" width="12" height="12" fill="#9c0078"/><rect x="1679" y="470" width="12" height="12" fill="#9c0072"/><rect x="1691" y="470" width="12" height="12" fill="#9c006c"/><rect x="1703" y="470" width="24" height="12" fill="#9c0066"/><rect x="1727" y="470" width="12" height="12" fill="#9c0060"/><rect x="1739" y="470" width="12" height="12" fill="#9c005a"/><rect x="1751" y="470" width="24" height="12" fill="#9c0054"/><rect x="1775" y="470" width="12" height="12" fill="#9c004e"/><rect x="1319" y="482" width="36" height="12" fill="#002a9c"/><rect x="1355" y="482" width="24" height="12" fill="#00249c"/><rect x="1379" y="482" width="36" height="12" fill="#001e9c"/><rect x="1415" y="482" width="12" height="12" fill="#00189c"/><rect x="1427" y="482" width="12" height="12" fill="#0024ff"/><rect x="1439" y="482" width="12" height="12" fill="#0c24ff"/><rect x="1451" y="482" width="12" height="12" fill="#1e1eff"/><rect x="1463" y="482" width="12" height="12" fill="#2a18ff"/><rect x="1475" y="482" width="12" height="12" fill="#3c18ff"/><rect x="1487" y="482" width="12" height="12" fill="#4812ff"/><rect x="1499" y="482" width="12" height="12" fill="#5a0cff"/><rect x="1511" y="482" width="12" height="12" fill="#660cff"/><rect x="1523" y="482" width="12" height="12" fill="#7806ff"/><rect x="1535" y="482" width="12" height="12" fill="#8400ff"/><rect x="1547" y="482" width="12" height="12" fill="#5a009c"/><rect x="1559" y="482" width="12" height="12" fill="#66009c"/><rect x="1571" y="482" width="12" height="12" fill="#72009c"/><rect x="1583" y="482" width="12" height="12" fill="#78009c"/><rect x="1595" y="482" width="12" height="12" fill="#84009c"/><rect x="1607" y="482" width="12" height="12" fill="#8a009c"/><rect x="1619" y="482" width="12" height="12" fill="#96009c"/><rect x="1631" y="482" width="12" height="12" fill="#9c009c"/><rect x="1643" y="482" width="12" height="12" fill="#9c0090"/><rect x="1655" y="482" width="12" height="12" fill="#9c008a"/><rect x="1667" y="482" width="12" height="12" fill="#9c0084"/><rect x="1679" y="482" width="12" height="12" fill="#9c0078"/><rect x="1691" y="482" width="24" height="12" fill="#9c0072"/><rect x="1715" y="482" width="12" height="12" fill="#9c006c"/><rect x="1727" y="482" width="12" height="12" fill="#9c0066"/><rect x="1739" y="482" width="12" height="12" fill="#9c0060"/><rect x="1751" y="482" width="24" height="12" fill="#9c005a"/><rect x="1331" y="494" width="36" height="12" fill="#00249c"/><rect x="1367" y="494" width="24" height="12" fill="#001e9c"/><rect x="1391" y="494" width="36" height="12" fill="#00189c"/><rect x="1427" y="494" width="12" height="12" fill="#00129c"/><rect x="1439" y="494" width="12" height="12" fill="#0c1eff"/><rect x="1451" y="494" width="12" height="12" fill="#1818ff"/><rect x="1463" y="494" width="12" height="12" fill="#2418ff"/><rect x="1475" y="494" width="12" height="12" fill="#3612ff"/><rect x="1487" y="494" width="12" height="12" fill="#420cff"/><rect x="1499" y="494" width="12" height="12" fill="#4e0cff"/><rect x="1511" y="494" width="12" height="12" fill="#6006ff"/><rect x="1523" y="494" width="12" height="12" fill="#6c00ff"/><rect x="1535" y="494" width="12" height="12" fill="#4e009c"/><rect x="1547" y="494" width="12" height="12" fill="#54009c"/><rect x="1559" y="494" width="12" height="12" fill="#60009c"/><rect x="1571" y="494" width="12" height="12" fill="#66009c"/><rect x="1583" y="494" width="12" height="12" fill="#72009c"/><rect x="1595" y="494" width="12" height="12" fill="#78009c"/><rect x="1607" y="494" width="12" height="12" fill="#84009c"/><rect x="1619" y="494" width="12" height="12" fill="#90009c"/><rect x="1631" y="494" width="12" height="12" fill="#96009c"/><rect x="1643" y="494" width="12" height="12" fill="#9c009c"/><rect x="1655" y="494" width="12" height="12" fill="#9c0090"/><rect x="1667" y="494" width="12" height="12" fill="#9c008a"/><rect x="1679" y="494" width="12" height="12" fill="#9c0084"/><rect x="1691" y="494" width="12" height="12" fill="#9c007e"/><rect x="1703" y="494" width="12" height="12" fill="#9c0078"/><rect x="1715" y="494" width="12" height="12" fill="#9c0072"/><rect x="1727" y="494" width="12" height="12" fill="#9c006c"/><rect x="1739" y="494" width="12" height="12" fill="#9c0066"/><rect x="1751" y="494" width="12" height="12" fill="#9c0060"/><rect x="1331" y="506" width="12" height="12" fill="#00249c"/><rect x="1343" y="506" width="36" height="12" fill="#001e9c"/><rect x="1379" y="506" width="36" height="12" fill="#00189c"/><rect x="1415" y="506" width="24" height="12" fill="#00129c"/><rect x="1439" y="506" width="12" height="12" fill="#0618ff"/><rect x="1451" y="506" width="12" height="12" fill="#1812ff"/><rect x="1463" y="506" width="12" height="12" fill="#2412ff"/><rect x="1475" y="506" width="12" height="12" fill="#300cff"/><rect x="1487" y="506" width="12" height="12" fill="#3c0cff"/><rect x="1499" y="506" width="12" height="12" fill="#4806ff"/><rect x="1511" y="506" width="12" height="12" fill="#5a00ff"/><rect x="1523" y="506" width="12" height="12" fill="#3c009c"/><rect x="1535" y="506" width="12" height="12" fill="#48009c"/><rect x="1547" y="506" width="12" height="12" fill="#4e009c"/><rect x="1559" y="506" width="12" height="12" fill="#5a009c"/><rect x="1571" y="506" width="12" height="12" fill="#60009c"/><rect x="1583" y="506" width="12" height="12" fill="#6c009c"/><rect x="1595" y="506" width="12" height="12" fill="#72009c"/><rect x="1607" y="506" width="12" height="12" fill="#7e009c"/><rect x="1619" y="506" width="12" height="12" fill="#84009c"/><rect x="1631" y="506" width="12" height="12" fill="#90009c"/><rect x="1643" y="506" width="12" height="12" fill="#96009c"/><rect x="1655" y="506" width="12" height="12" fill="#9c009c"/><rect x="1667" y="506" width="12" height="12" fill="#9c0090"/><rect x="1679" y="506" width="12" height="12" fill="#9c008a"/><rect x="1691" y="506" width="12" height="12" fill="#9c0084"/><rect x="1703" y="506" width="12" height="12" fill="#9c007e"/><rect x="1715" y="506" width="12" height="12" fill="#9c0078"/><rect x="1727" y="506" width="12" height="12" fill="#9c0072"/><rect x="1739" y="506" width="12" height="12" fill="#9c006c"/><rect x="1751" y="506" width="12" height="12" fill="#9c0066"/><rect x="1343" y="518" width="12" height="12" fill="#001e9c"/><rect x="1355" y="518" width="36" height="12" fill="#00189c"/><rect x="1391" y="518" width="36" height="12" fill="#00129c"/><rect x="1427" y="518" width="12" height="12" fill="#000c9c"/><rect x="1439" y="518" width="12" height="12" fill="#0612ff"/><rect x="1451" y="518" width="12" height="12" fill="#1212ff"/><rect x="1463" y="518" width="12" height="12" fill="#1e0cff"/><rect x="1475" y="518" width="12" height="12" fill="#2a06ff"/><rect x="1487" y="518" width="12" height="12" fill="#3606ff"/><rect x="1499" y="518" width="12" height="12" fill="#4800ff"/><rect x="1511" y="518" width="12" height="12" fill="#30009c"/><rect x="1523" y="518" width="12" height="12" fill="#3c009c"/><rect x="1535" y="518" width="12" height="12" fill="#42009c"/><rect x="1547" y="518" width="12" height="12" fill="#4e009c"/><rect x="1559" y="518" width="12" height="12" fill="#54009c"/><rect x="1571" y="518" width="12" height="12" fill="#5a009c"/><rect x="1583" y="518" width="12" height="12" fill="#66009c"/><rect x="1595" y="518" width="12" height="12" fill="#6c009c"/><rect x="1607" y="518" width="12" height="12" fill="#72009c"/><rect x="1619" y="518" width="12" height="12" fill="#7e009c"/><rect x="1631" y="518" width="12" height="12" fill="#84009c"/><rect x="1643" y="518" width="12" height="12" fill="#90009c"/><rect x="1655" y="518" width="12" height="12" fill="#96009c"/><rect x="1667" y="518" width="12" height="12" fill="#9c009c"/><rect x="1679" y="518" width="12" height="12" fill="#9c0096"/><rect x="1691" y="518" width="12" height="12" fill="#9c008a"/><rect x="1703" y="518" width="12" height="12" fill="#9c0084"/><rect x="1715" y="518" width="12" height="12" fill="#9c007e"/><rect x="1727" y="518" width="12" height="12" fill="#9c0078"/><rect x="1739" y="518" width="12" height="12" fill="#9c0072"/><rect x="1343" y="530" width="36" height="12" fill="#00189c"/><rect x="1379" y="530" width="36" height="12" fill="#00129c"/><rect x="1415" y="530" width="24" height="12" fill="#000c9c"/><rect x="1439" y="530" width="12" height="12" fill="#060cff"/><rect x="1451" y="530" width="12" height="12" fill="#120cff"/><rect x="1463" y="530" width="12" height="12" fill="#1e06ff"/><rect x="1475" y="530" width="12" height="12" fill="#2a06ff"/><rect x="1487" y="530" width="12" height="12" fill="#3600ff"/><rect x="1499" y="530" width="12" height="12" fill="#2a009c"/><rect x="1511" y="530" width="12" height="12" fill="#30009c"/><rect x="1523" y="530" width="12" height="12" fill="#36009c"/><rect x="1535" y="530" width="12" height="12" fill="#3c009c"/><rect x="1547" y="530" width="12" height="12" fill="#48009c"/><rect x="1559" y="530" width="12" height="12" fill="#4e009c"/><rect x="1571" y="530" width="12" height="12" fill="#54009c"/><rect x="1583" y="530" width="12" height="12" fill="#60009c"/><rect x="1595" y="530" width="12" height="12" fill="#66009c"/><rect x="1607" y="530" width="12" height="12" fill="#6c009c"/><rect x="1619" y="530" width="12" height="12" fill="#78009c"/><rect x="1631" y="530" width="12" height="12" fill="#7e009c"/><rect x="1643" y="530" width="12" height="12" fill="#8a009c"/><rect x="1655" y="530" width="12" height="12" fill="#90009c"/><rect x="1667" y="530" width="12" height="12" fill="#96009c"/><rect x="1679" y="530" width="12" height="12" fill="#9c009c"/><rect x="1691" y="530" width="12" height="12" fill="#9c0096"/><rect x="1703" y="530" width="12" height="12" fill="#9c008a"/><rect x="1715" y="530" width="12" height="12" fill="#9c0084"/><rect x="1727" y="530" width="12" height="12" fill="#9c007e"/><rect x="1355" y="542" width="36" height="12" fill="#00129c"/><rect x="1391" y="542" width="36" height="12" fill="#000c9c"/><rect x="1427" y="542" width="12" height="12" fill="#00069c"/><rect x="1439" y="542" width="12" height="12" fill="#000cff"/><rect x="1451" y="542" width="12" height="12" fill="#0c06ff"/><rect x="1463" y="542" width="12" height="12" fill="#1806ff"/><rect x="1475" y="542" width="12" height="12" fill="#2400ff"/><rect x="1487" y="542" width="12" height="12" fill="#1e009c"/><rect x="1499" y="542" width="12" height="12" fill="#24009c"/><rect x="1511" y="542" width="12" height="12" fill="#2a009c"/><rect x="1523" y="542" width="12" height="12" fill="#36009c"/><rect x="1535" y="542" width="12" height="12" fill="#3c009c"/><rect x="1547" y="542" width="12" height="12" fill="#42009c"/><rect x="1559" y="542" width="12" height="12" fill="#48009c"/><rect x="1571" y="542" width="12" height="12" fill="#54009c"/><rect x="1583" y="542" width="12" height="12" fill="#5a009c"/><rect x="1595" y="542" width="12" height="12" fill="#60009c"/><rect x="1607" y="542" width="12" height="12" fill="#66009c"/><rect x="1619" y="542" width="12" height="12" fill="#72009c"/><rect x="1631" y="542" width="12" height="12" fill="#78009c"/><rect x="1643" y="542" width="12" height="12" fill="#7e009c"/><rect x="1655" y="542" width="12" height="12" fill="#8a009c"/><rect x="1667" y="542" width="12" height="12" fill="#90009c"/><rect x="1679" y="542" width="12" height="12" fill="#96009c"/><rect x="1691" y="542" width="12" height="12" fill="#9c009c"/><rect x="1703" y="542" width="12" height="12" fill="#9c0096"/><rect x="1715" y="542" width="12" height="12" fill="#9c0090"/><rect x="1367" y="554" width="12" height="12" fill="#00129c"/><rect x="1379" y="554" width="36" height="12" fill="#000c9c"/><rect x="1415" y="554" width="24" height="12" fill="#00069c"/><rect x="1439" y="554" width="12" height="12" fill="#0006ff"/><rect x="1451" y="554" width="12" height="12" fill="#0c06ff"/><rect x="1463" y="554" width="12" height="12" fill="#1800ff"/><rect x="1475" y="554" width="12" height="12" fill="#12009c"/><rect x="1487" y="554" width="12" height="12" fill="#1e009c"/><rect x="1499" y="554" width="12" height="12" fill="#24009c"/><rect x="1511" y="554" width="12" height="12" fill="#2a009c"/><rect x="1523" y="554" width="12" height="12" fill="#30009c"/><rect x="1535" y="554" width="12" height="12" fill="#36009c"/><rect x="1547" y="554" width="12" height="12" fill="#3c009c"/><rect x="1559" y="554" width="12" height="12" fill="#48009c"/><rect x="1571" y="554" width="12" height="12" fill="#4e009c"/><rect x="1583" y="554" width="12" height="12" fill="#54009c"/><rect x="1595" y="554" width="12" height="12" fill="#5a009c"/><rect x="1607" y="554" width="12" height="12" fill="#60009c"/><rect x="1619" y="554" width="12" height="12" fill="#6c009c"/><rect x="1631" y="554" width="12" height="12" fill="#72009c"/><rect x="1643" y="554" width="12" height="12" fill="#78009c"/><rect x="1655" y="554" width="12" height="12" fill="#84009c"/><rect x="1667" y="554" width="12" height="12" fill="#8a009c"/><rect x="1679" y="554" width="12" height="12" fill="#90009c"/><rect x="1691" y="554" width="12" height="12" fill="#96009c"/><rect x="1703" y="554" width="12" height="12" fill="#9c009c"/><rect x="1367" y="566" width="36" height="12" fill="#000c9c"/><rect x="1403" y="566" width="36" height="12" fill="#00069c"/><rect x="1439" y="566" width="12" height="12" fill="#00009c"/><rect x="1451" y="566" width="12" height="12" fill="#0c00ff"/><rect x="1463" y="566" width="12" height="12" fill="#0c009c"/><rect x="1475" y="566" width="12" height="12" fill="#12009c"/><rect x="1487" y="566" width="12" height="12" fill="#18009c"/><rect x="1499" y="566" width="12" height="12" fill="#1e009c"/><rect x="1511" y="566" width="12" height="12" fill="#24009c"/><rect x="1523" y="566" width="12" height="12" fill="#30009c"/><rect x="1535" y="566" width="12" height="12" fill="#36009c"/><rect x="1547" y="566" width="12" height="12" fill="#3c009c"/><rect x="1559" y="566" width="12" height="12" fill="#42009c"/><rect x="1571" y="566" width="12" height="12" fill="#48009c"/><rect x="1583" y="566" width="12" height="12" fill="#4e009c"/><rect x="1595" y="566" width="12" height="12" fill="#54009c"/><rect x="1607" y="566" width="12" height="12" fill="#60009c"/><rect x="1619" y="566" width="12" height="12" fill="#66009c"/><rect x="1631" y="566" width="12" height="12" fill="#6c009c"/><rect x="1643" y="566" width="12" height="12" fill="#72009c"/><rect x="1655" y="566" width="12" height="12" fill="#78009c"/><rect x="1667" y="566" width="12" height="12" fill="#84009c"/><rect x="1679" y="566" width="12" height="12" fill="#8a009c"/><rect x="1691" y="566" width="12" height="12" fill="#90009c"/><rect x="1379" y="578" width="12" height="12" fill="#000c9c"/><rect x="1391" y="578" width="36" height="12" fill="#00069c"/><rect x="1427" y="578" width="24" height="12" fill="#00009c"/><rect x="1451" y="578" width="12" height="12" fill="#06009c"/><rect x="1463" y="578" width="12" height="12" fill="#0c009c"/><rect x="1475" y="578" width="12" height="12" fill="#12009c"/><rect x="1487" y="578" width="12" height="12" fill="#18009c"/><rect x="1499" y="578" width="12" height="12" fill="#1e009c"/><rect x="1511" y="578" width="12" height="12" fill="#24009c"/><rect x="1523" y="578" width="12" height="12" fill="#2a009c"/><rect x="1535" y="578" width="12" height="12" fill="#30009c"/><rect x="1547" y="578" width="12" height="12" fill="#36009c"/><rect x="1559" y="578" width="12" height="12" fill="#3c009c"/><rect x="1571" y="578" width="12" height="12" fill="#48009c"/><rect x="1583" y="578" width="12" height="12" fill="#4e009c"/><rect x="1595" y="578" width="12" height="12" fill="#54009c"/><rect x="1607" y="578" width="12" height="12" fill="#5a009c"/><rect x="1619" y="578" width="12" height="12" fill="#60009c"/><rect x="1631" y="578" width="12" height="12" fill="#66009c"/><rect x="1643" y="578" width="12" height="12" fill="#6c009c"/><rect x="1655" y="578" width="12" height="12" fill="#72009c"/><rect x="1667" y="578" width="12" height="12" fill="#7e009c"/><rect x="1679" y="578" width="12" height="12" fill="#84009c"/><rect x="1391" y="590" width="24" height="12" fill="#00069c"/><rect x="1415" y="590" width="36" height="12" fill="#00009c"/><rect x="1451" y="590" width="12" height="12" fill="#06009c"/><rect x="1463" y="590" width="12" height="12" fill="#0c009c"/><rect x="1475" y="590" width="12" height="12" fill="#12009c"/><rect x="1487" y="590" width="12" height="12" fill="#18009c"/><rect x="1499" y="590" width="12" height="12" fill="#1e009c"/><rect x="1511" y="590" width="12" height="12" fill="#24009c"/><rect x="1523" y="590" width="12" height="12" fill="#2a009c"/><rect x="1535" y="590" width="12" height="12" fill="#30009c"/><rect x="1547" y="590" width="12" height="12" fill="#36009c"/><rect x="1559" y="590" width="12" height="12" fill="#3c009c"/><rect x="1571" y="590" width="12" height="12" fill="#42009c"/><rect x="1583" y="590" width="12" height="12" fill="#48009c"/><rect x="1595" y="590" width="12" height="12" fill="#4e009c"/><rect x="1607" y="590" width="12" height="12" fill="#54009c"/><rect x="1619" y="590" width="12" height="12" fill="#5a009c"/><rect x="1631" y="590" width="12" height="12" fill="#60009c"/><rect x="1643" y="590" width="12" height="12" fill="#66009c"/><rect x="1655" y="590" width="12" height="12" fill="#72009c"/><rect x="1667" y="590" width="12" height="12" fill="#78009c"/><rect x="1391" y="602" width="12" height="12" fill="#00069c"/><rect x="1403" y="602" width="60" height="12" fill="#00009c"/><rect x="1463" y="602" width="12" height="12" fill="#06009c"/><rect x="1475" y="602" width="12" height="12" fill="#0c009c"/><rect x="1487" y="602" width="12" height="12" fill="#12009c"/><rect x="1499" y="602" width="12" height="12" fill="#18009c"/><rect x="1511" y="602" width="12" height="12" fill="#1e009c"/><rect x="1523" y="602" width="12" height="12" fill="#24009c"/><rect x="1535" y="602" width="12" height="12" fill="#2a009c"/><rect x="1547" y="602" width="12" height="12" fill="#30009c"/><rect x="1559" y="602" width="12" height="12" fill="#36009c"/><rect x="1571" y="602" width="12" height="12" fill="#3c009c"/><rect x="1583" y="602" width="12" height="12" fill="#42009c"/><rect x="1595" y="602" width="12" height="12" fill="#48009c"/><rect x="1607" y="602" width="12" height="12" fill="#4e009c"/><rect x="1619" y="602" width="12" height="12" fill="#5a009c"/><rect x="1631" y="602" width="12" height="12" fill="#60009c"/><rect x="1643" y="602" width="12" height="12" fill="#66009c"/><rect x="1655" y="602" width="12" height="12" fill="#6c009c"/><rect x="1403" y="614" width="60" height="12" fill="#00009c"/><rect x="1463" y="614" width="12" height="12" fill="#06009c"/><rect x="1475" y="614" width="12" height="12" fill="#0c009c"/><rect x="1487" y="614" width="12" height="12" fill="#12009c"/><rect x="1499" y="614" width="12" height="12" fill="#18009c"/><rect x="1511" y="614" width="12" height="12" fill="#1e009c"/><rect x="1523" y="614" width="12" height="12" fill="#24009c"/><rect x="1535" y="614" width="12" height="12" fill="#2a009c"/><rect x="1547" y="614" width="12" height="12" fill="#30009c"/><rect x="1559" y="614" width="12" height="12" fill="#36009c"/><rect x="1571" y="614" width="12" height="12" fill="#3c009c"/><rect x="1583" y="614" width="12" height="12" fill="#42009c"/><rect x="1595" y="614" width="12" height="12" fill="#48009c"/><rect x="1607" y="614" width="12" height="12" fill="#4e009c"/><rect x="1619" y="614" width="12" height="12" fill="#54009c"/><rect x="1631" y="614" width="12" height="12" fill="#5a009c"/><rect x="1643" y="614" width="12" height="12" fill="#60009c"/><rect x="1415" y="626" width="48" height="12" fill="#00009c"/><rect x="1463" y="626" width="12" height="12" fill="#06009c"/><rect x="1475" y="626" width="12" height="12" fill="#0c009c"/><rect x="1487" y="626" width="12" height="12" fill="#12009c"/><rect x="1499" y="626" width="12" height="12" fill="#18009c"/><rect x="1511" y="626" width="12" height="12" fill="#1e009c"/><rect x="1523" y="626" width="12" height="12" fill="#24009c"/><rect x="1535" y="626" width="24" height="12" fill="#2a009c"/><rect x="1559" y="626" width="12" height="12" fill="#30009c"/><rect x="1571" y="626" width="12" height="12" fill="#36009c"/><rect x="1583" y="626" width="12" height="12" fill="#3c009c"/><rect x="1595" y="626" width="12" height="12" fill="#42009c"/><rect x="1607" y="626" width="12" height="12" fill="#48009c"/><rect x="1619" y="626" width="12" height="12" fill="#4e009c"/><rect x="1631" y="626" width="12" height="12" fill="#54009c"/><rect x="1427" y="638" width="36" height="12" fill="#00009c"/><rect x="1463" y="638" width="12" height="12" fill="#06009c"/><rect x="1475" y="638" width="12" height="12" fill="#0c009c"/><rect x="1487" y="638" width="24" height="12" fill="#12009c"/><rect x="1511" y="638" width="12" height="12" fill="#18009c"/><rect x="1523" y="638" width="12" height="12" fill="#1e009c"/><rect x="1535" y="638" width="12" height="12" fill="#24009c"/><rect x="1547" y="638" width="12" height="12" fill="#2a009c"/><rect x="1559" y="638" width="12" height="12" fill="#30009c"/><rect x="1571" y="638" width="12" height="12" fill="#36009c"/><rect x="1583" y="638" width="12" height="12" fill="#3c009c"/><rect x="1595" y="638" width="12" height="12" fill="#42009c"/><rect x="1607" y="638" width="12" height="12" fill="#48009c"/><rect x="1619" y="638" width="12" height="12" fill="#4e009c"/><rect x="1439" y="650" width="24" height="12" fill="#00009c"/><rect x="1463" y="650" width="12" height="12" fill="#06009c"/><rect x="1475" y="650" width="24" height="12" fill="#0c009c"/><rect x="1499" y="650" width="12" height="12" fill="#12009c"/><rect x="1511" y="650" width="12" height="12" fill="#18009c"/><rect x="1523" y="650" width="12" height="12" fill="#1e009c"/><rect x="1535" y="650" width="12" height="12" fill="#24009c"/><rect x="1547" y="650" width="12" height="12" fill="#2a009c"/><rect x="1559" y="650" width="12" height="12" fill="#30009c"/><rect x="1571" y="650" width="24" height="12" fill="#36009c"/><rect x="1595" y="650" width="12" height="12" fill="#3c009c"/><rect x="1607" y="650" width="12" height="12" fill="#42009c"/><rect x="1451" y="662" width="24" height="12" fill="#00009c"/><rect x="1475" y="662" width="12" height="12" fill="#06009c"/><rect x="1487" y="662" width="12" height="12" fill="#0c009c"/><rect x="1499" y="662" width="12" height="12" fill="#12009c"/><rect x="1511" y="662" width="12" height="12" fill="#18009c"/><rect x="1523" y="662" width="12" height="12" fill="#1e009c"/><rect x="1535" y="662" width="24" height="12" fill="#24009c"/><rect x="1559" y="662" width="12" height="12" fill="#2a009c"/><rect x="1571" y="662" width="12" height="12" fill="#30009c"/><rect x="1583" y="662" width="12" height="12" fill="#36009c"/><rect x="1595" y="662" width="12" height="12" fill="#3c009c"/><rect x="1463" y="674" width="12" height="12" fill="#00009c"/><rect x="1475" y="674" width="12" height="12" fill="#06009c"/><rect x="1487" y="674" width="12" height="12" fill="#0c009c"/><rect x="1499" y="674" width="12" height="12" fill="#12009c"/><rect x="1511" y="674" width="24" height="12" fill="#18009c"/><rect x="1535" y="674" width="12" height="12" fill="#1e009c"/><rect x="1547" y="674" width="12" height="12" fill="#24009c"/><rect x="1559" y="674" width="12" height="12" fill="#2a009c"/><rect x="1571" y="674" width="12" height="12" fill="#30009c"/><rect x="1583" y="674" width="12" height="12" fill="#36009c"/><rect x="1475" y="686" width="12" height="12" fill="#06009c"/><rect x="1487" y="686" width="12" height="12" fill="#0c009c"/><rect x="1499" y="686" width="24" height="12" fill="#12009c"/><rect x="1523" y="686" width="12" height="12" fill="#18009c"/><rect x="1535" y="686" width="12" height="12" fill="#1e009c"/><rect x="1547" y="686" width="12" height="12" fill="#24009c"/><rect x="1559" y="686" width="24" height="12" fill="#2a009c"/><rect x="1499" y="698" width="12" height="12" fill="#0c009c"/><rect x="1511" y="698" width="12" height="12" fill="#12009c"/><rect x="1523" y="698" width="12" height="12" fill="#18009c"/><rect x="1535" y="698" width="12" height="12" fill="#1e009c"/><rect x="1547" y="698" width="24" height="12" fill="#24009c"/><rect x="1511" y="710" width="12" height="12" fill="#12009c"/><rect x="1523" y="710" width="24" height="12" fill="#18009c"/><rect x="1547" y="710" width="12" height="12" fill="#1e009c"/></g></g><g clip-path="url(#clT)"><g filter="url(#blr)"><rect x="1379" y="230" width="12" height="12" fill="#00ff00"/><rect x="1391" y="230" width="12" height="12" fill="#0cff00"/><rect x="1403" y="230" width="12" height="12" fill="#2aff00"/><rect x="1415" y="230" width="12" height="12" fill="#48ff00"/><rect x="1427" y="230" width="12" height="12" fill="#66ff00"/><rect x="1439" y="230" width="12" height="12" fill="#8aff00"/><rect x="1451" y="230" width="12" height="12" fill="#aeff00"/><rect x="1463" y="230" width="12" height="12" fill="#d2ff00"/><rect x="1475" y="230" width="12" height="12" fill="#fcff00"/><rect x="1487" y="230" width="12" height="12" fill="#ffd800"/><rect x="1367" y="242" width="24" height="12" fill="#00ff00"/><rect x="1391" y="242" width="12" height="12" fill="#06ff00"/><rect x="1403" y="242" width="12" height="12" fill="#24ff00"/><rect x="1415" y="242" width="12" height="12" fill="#42ff00"/><rect x="1427" y="242" width="12" height="12" fill="#66ff00"/><rect x="1439" y="242" width="12" height="12" fill="#84ff00"/><rect x="1451" y="242" width="12" height="12" fill="#aeff00"/><rect x="1463" y="242" width="12" height="12" fill="#d8ff00"/><rect x="1475" y="242" width="12" height="12" fill="#fffc00"/><rect x="1487" y="242" width="12" height="12" fill="#ffd800"/><rect x="1499" y="242" width="12" height="12" fill="#ffb400"/><rect x="1511" y="242" width="12" height="12" fill="#ff9c00"/><rect x="1523" y="242" width="12" height="12" fill="#ff8a00"/><rect x="1535" y="242" width="12" height="12" fill="#ff7800"/><rect x="1547" y="242" width="12" height="12" fill="#ff6c00"/><rect x="1559" y="242" width="12" height="12" fill="#ff5a00"/><rect x="1571" y="242" width="12" height="12" fill="#ff5400"/><rect x="1583" y="242" width="12" height="12" fill="#ff4800"/><rect x="1595" y="242" width="12" height="12" fill="#ff4200"/><rect x="1607" y="242" width="12" height="12" fill="#ff3600"/><rect x="1619" y="242" width="12" height="12" fill="#ff3000"/><rect x="1367" y="254" width="36" height="12" fill="#00ff18"/><rect x="1403" y="254" width="12" height="12" fill="#1eff12"/><rect x="1415" y="254" width="12" height="12" fill="#42ff12"/><rect x="1427" y="254" width="12" height="12" fill="#60ff12"/><rect x="1439" y="254" width="12" height="12" fill="#84ff0c"/><rect x="1451" y="254" width="12" height="12" fill="#aeff0c"/><rect x="1463" y="254" width="12" height="12" fill="#d8ff06"/><rect x="1475" y="254" width="12" height="12" fill="#fff606"/><rect x="1487" y="254" width="12" height="12" fill="#ffd200"/><rect x="1499" y="254" width="12" height="12" fill="#ffb400"/><rect x="1511" y="254" width="12" height="12" fill="#ff9600"/><rect x="1523" y="254" width="12" height="12" fill="#ff8400"/><rect x="1535" y="254" width="12" height="12" fill="#ff7200"/><rect x="1547" y="254" width="12" height="12" fill="#ff6600"/><rect x="1559" y="254" width="12" height="12" fill="#ff5a00"/><rect x="1571" y="254" width="12" height="12" fill="#ff4e00"/><rect x="1583" y="254" width="12" height="12" fill="#ff4200"/><rect x="1595" y="254" width="12" height="12" fill="#ff3c00"/><rect x="1607" y="254" width="12" height="12" fill="#ff3600"/><rect x="1619" y="254" width="12" height="12" fill="#ff3000"/><rect x="1631" y="254" width="12" height="12" fill="#ff2a00"/><rect x="1643" y="254" width="12" height="12" fill="#ff2400"/><rect x="1655" y="254" width="12" height="12" fill="#ff1e00"/><rect x="1667" y="254" width="24" height="12" fill="#ff1800"/><rect x="1691" y="254" width="12" height="12" fill="#ff1200"/><rect x="1703" y="254" width="24" height="12" fill="#ff0c00"/><rect x="1727" y="254" width="24" height="12" fill="#ff0600"/><rect x="1379" y="266" width="24" height="12" fill="#00ff30"/><rect x="1403" y="266" width="12" height="12" fill="#1eff30"/><rect x="1415" y="266" width="12" height="12" fill="#3cff30"/><rect x="1427" y="266" width="12" height="12" fill="#60ff30"/><rect x="1439" y="266" width="12" height="12" fill="#84ff30"/><rect x="1451" y="266" width="12" height="12" fill="#aeff2a"/><rect x="1463" y="266" width="12" height="12" fill="#d8ff2a"/><rect x="1475" y="266" width="12" height="12" fill="#fff62a"/><rect x="1487" y="266" width="12" height="12" fill="#ffcc1e"/><rect x="1499" y="266" width="12" height="12" fill="#ffae18"/><rect x="1511" y="266" width="12" height="12" fill="#ff9612"/><rect x="1523" y="266" width="12" height="12" fill="#ff7e12"/><rect x="1535" y="266" width="12" height="12" fill="#ff6c0c"/><rect x="1547" y="266" width="12" height="12" fill="#ff600c"/><rect x="1559" y="266" width="12" height="12" fill="#ff5406"/><rect x="1571" y="266" width="12" height="12" fill="#ff4806"/><rect x="1583" y="266" width="12" height="12" fill="#ff4206"/><rect x="1595" y="266" width="12" height="12" fill="#ff3606"/><rect x="1607" y="266" width="12" height="12" fill="#ff3000"/><rect x="1619" y="266" width="12" height="12" fill="#ff2a00"/><rect x="1631" y="266" width="12" height="12" fill="#ff2400"/><rect x="1643" y="266" width="12" height="12" fill="#ff1e00"/><rect x="1655" y="266" width="24" height="12" fill="#ff1800"/><rect x="1679" y="266" width="12" height="12" fill="#ff1200"/><rect x="1691" y="266" width="24" height="12" fill="#ff0c00"/><rect x="1715" y="266" width="24" height="12" fill="#ff0600"/><rect x="1739" y="266" width="24" height="12" fill="#ff0000"/><rect x="1379" y="278" width="24" height="12" fill="#00ff4e"/><rect x="1403" y="278" width="12" height="12" fill="#18ff4e"/><rect x="1415" y="278" width="12" height="12" fill="#3cff4e"/><rect x="1427" y="278" width="12" height="12" fill="#60ff4e"/><rect x="1439" y="278" width="12" height="12" fill="#84ff4e"/><rect x="1451" y="278" width="12" height="12" fill="#aeff4e"/><rect x="1463" y="278" width="12" height="12" fill="#deff4e"/><rect x="1475" y="278" width="12" height="12" fill="#fff04e"/><rect x="1487" y="278" width="12" height="12" fill="#ffc63c"/><rect x="1499" y="278" width="12" height="12" fill="#ffa836"/><rect x="1511" y="278" width="12" height="12" fill="#ff9030"/><rect x="1523" y="278" width="12" height="12" fill="#ff782a"/><rect x="1535" y="278" width="12" height="12" fill="#ff6c24"/><rect x="1547" y="278" width="12" height="12" fill="#ff5a1e"/><rect x="1559" y="278" width="12" height="12" fill="#ff4e18"/><rect x="1571" y="278" width="12" height="12" fill="#ff4818"/><rect x="1583" y="278" width="12" height="12" fill="#ff3c12"/><rect x="1595" y="278" width="12" height="12" fill="#ff3612"/><rect x="1607" y="278" width="12" height="12" fill="#ff3012"/><rect x="1619" y="278" width="12" height="12" fill="#ff2a0c"/><rect x="1631" y="278" width="12" height="12" fill="#ff240c"/><rect x="1643" y="278" width="12" height="12" fill="#ff1e0c"/><rect x="1655" y="278" width="12" height="12" fill="#ff1806"/><rect x="1667" y="278" width="24" height="12" fill="#ff1206"/><rect x="1691" y="278" width="12" height="12" fill="#ff0c06"/><rect x="1703" y="278" width="12" height="12" fill="#ff0606"/><rect x="1715" y="278" width="12" height="12" fill="#ff0600"/><rect x="1727" y="278" width="48" height="12" fill="#ff0000"/><rect x="1379" y="290" width="12" height="12" fill="#00ff6c"/><rect x="1391" y="290" width="12" height="12" fill="#00ff72"/><rect x="1403" y="290" width="12" height="12" fill="#12ff72"/><rect x="1415" y="290" width="12" height="12" fill="#36ff72"/><rect x="1427" y="290" width="12" height="12" fill="#5aff72"/><rect x="1439" y="290" width="12" height="12" fill="#84ff78"/><rect x="1451" y="290" width="12" height="12" fill="#b4ff78"/><rect x="1463" y="290" width="12" height="12" fill="#e4ff78"/><rect x="1475" y="290" width="12" height="12" fill="#ffea72"/><rect x="1487" y="290" width="12" height="12" fill="#ffc060"/><rect x="1499" y="290" width="12" height="12" fill="#ffa254"/><rect x="1511" y="290" width="12" height="12" fill="#ff8a48"/><rect x="1523" y="290" width="12" height="12" fill="#ff783c"/><rect x="1535" y="290" width="12" height="12" fill="#ff6636"/><rect x="1547" y="290" width="12" height="12" fill="#ff5a30"/><rect x="1559" y="290" width="12" height="12" fill="#ff4e2a"/><rect x="1571" y="290" width="12" height="12" fill="#ff422a"/><rect x="1583" y="290" width="12" height="12" fill="#ff3624"/><rect x="1595" y="290" width="12" height="12" fill="#ff301e"/><rect x="1607" y="290" width="12" height="12" fill="#ff2a1e"/><rect x="1619" y="290" width="12" height="12" fill="#ff2418"/><rect x="1631" y="290" width="12" height="12" fill="#ff1e18"/><rect x="1643" y="290" width="12" height="12" fill="#ff1818"/><rect x="1655" y="290" width="24" height="12" fill="#ff1212"/><rect x="1679" y="290" width="12" height="12" fill="#ff0c12"/><rect x="1691" y="290" width="12" height="12" fill="#ff0c0c"/><rect x="1703" y="290" width="12" height="12" fill="#ff060c"/><rect x="1715" y="290" width="36" height="12" fill="#ff000c"/><rect x="1751" y="290" width="12" height="12" fill="#ff0006"/><rect x="1379" y="302" width="24" height="12" fill="#00ff90"/><rect x="1403" y="302" width="12" height="12" fill="#12ff96"/><rect x="1415" y="302" width="12" height="12" fill="#36ff96"/><rect x="1427" y="302" width="12" height="12" fill="#5aff9c"/><rect x="1439" y="302" width="12" height="12" fill="#84ff9c"/><rect x="1451" y="302" width="12" height="12" fill="#b4ffa2"/><rect x="1463" y="302" width="12" height="12" fill="#e4ffa8"/><rect x="1475" y="302" width="12" height="12" fill="#ffe496"/><rect x="1487" y="302" width="12" height="12" fill="#ffba84"/><rect x="1499" y="302" width="12" height="12" fill="#ff9c72"/><rect x="1511" y="302" width="12" height="12" fill="#ff8460"/><rect x="1523" y="302" width="12" height="12" fill="#ff7254"/><rect x="1535" y="302" width="12" height="12" fill="#ff604e"/><rect x="1547" y="302" width="12" height="12" fill="#ff5442"/><rect x="1559" y="302" width="12" height="12" fill="#ff483c"/><rect x="1571" y="302" width="12" height="12" fill="#ff3c36"/><rect x="1583" y="302" width="12" height="12" fill="#ff3630"/><rect x="1595" y="302" width="12" height="12" fill="#ff2a30"/><rect x="1607" y="302" width="12" height="12" fill="#ff242a"/><rect x="1619" y="302" width="12" height="12" fill="#ff1e24"/><rect x="1631" y="302" width="24" height="12" fill="#ff1824"/><rect x="1655" y="302" width="12" height="12" fill="#ff121e"/><rect x="1667" y="302" width="12" height="12" fill="#ff0c1e"/><rect x="1679" y="302" width="12" height="12" fill="#ff0c18"/><rect x="1691" y="302" width="24" height="12" fill="#ff0618"/><rect x="1715" y="302" width="36" height="12" fill="#ff0012"/><rect x="1379" y="314" width="12" height="12" fill="#00ffb4"/><rect x="1391" y="314" width="12" height="12" fill="#00ffba"/><rect x="1403" y="314" width="12" height="12" fill="#0cffba"/><rect x="1415" y="314" width="12" height="12" fill="#30ffc0"/><rect x="1427" y="314" width="12" height="12" fill="#5affc6"/><rect x="1439" y="314" width="12" height="12" fill="#84ffcc"/><rect x="1451" y="314" width="12" height="12" fill="#b4ffd2"/><rect x="1463" y="314" width="12" height="12" fill="#eaffd8"/><rect x="1475" y="314" width="12" height="12" fill="#ffdec0"/><rect x="1487" y="314" width="12" height="12" fill="#ffb4a2"/><rect x="1499" y="314" width="12" height="12" fill="#ff9690"/><rect x="1511" y="314" width="12" height="12" fill="#ff7e7e"/><rect x="1523" y="314" width="12" height="12" fill="#ff6c6c"/><rect x="1535" y="314" width="12" height="12" fill="#ff5a60"/><rect x="1547" y="314" width="12" height="12" fill="#ff4e5a"/><rect x="1559" y="314" width="12" height="12" fill="#ff424e"/><rect x="1571" y="314" width="12" height="12" fill="#ff3c48"/><rect x="1583" y="314" width="12" height="12" fill="#ff3042"/><rect x="1595" y="314" width="12" height="12" fill="#ff2a3c"/><rect x="1607" y="314" width="12" height="12" fill="#ff2436"/><rect x="1619" y="314" width="12" height="12" fill="#ff1e36"/><rect x="1631" y="314" width="12" height="12" fill="#ff1830"/><rect x="1643" y="314" width="12" height="12" fill="#ff122a"/><rect x="1655" y="314" width="12" height="12" fill="#ff0c2a"/><rect x="1667" y="314" width="12" height="12" fill="#ff0c24"/><rect x="1679" y="314" width="24" height="12" fill="#ff0624"/><rect x="1703" y="314" width="36" height="12" fill="#ff001e"/><rect x="1379" y="326" width="12" height="12" fill="#00ffd8"/><rect x="1391" y="326" width="12" height="12" fill="#00ffde"/><rect x="1403" y="326" width="12" height="12" fill="#06ffe4"/><rect x="1415" y="326" width="12" height="12" fill="#2affea"/><rect x="1427" y="326" width="12" height="12" fill="#54fff0"/><rect x="1439" y="326" width="12" height="12" fill="#84fffc"/><rect x="1451" y="326" width="12" height="12" fill="#b4fcff"/><rect x="1463" y="326" width="12" height="12" fill="#e4f0ff"/><rect x="1475" y="326" width="12" height="12" fill="#ffd8f0"/><rect x="1487" y="326" width="12" height="12" fill="#ffaecc"/><rect x="1499" y="326" width="12" height="12" fill="#ff90ae"/><rect x="1511" y="326" width="12" height="12" fill="#ff7896"/><rect x="1523" y="326" width="12" height="12" fill="#ff668a"/><rect x="1535" y="326" width="12" height="12" fill="#ff5478"/><rect x="1547" y="326" width="12" height="12" fill="#ff486c"/><rect x="1559" y="326" width="12" height="12" fill="#ff3c66"/><rect x="1571" y="326" width="12" height="12" fill="#ff365a"/><rect x="1583" y="326" width="12" height="12" fill="#ff2a54"/><rect x="1595" y="326" width="12" height="12" fill="#ff244e"/><rect x="1607" y="326" width="12" height="12" fill="#ff1e48"/><rect x="1619" y="326" width="12" height="12" fill="#ff1842"/><rect x="1631" y="326" width="12" height="12" fill="#ff123c"/><rect x="1643" y="326" width="12" height="12" fill="#ff0c3c"/><rect x="1655" y="326" width="12" height="12" fill="#ff0c36"/><rect x="1667" y="326" width="24" height="12" fill="#ff0630"/><rect x="1691" y="326" width="24" height="12" fill="#ff002a"/><rect x="1715" y="326" width="12" height="12" fill="#ff0024"/><rect x="1391" y="338" width="12" height="12" fill="#00f6ff"/><rect x="1403" y="338" width="12" height="12" fill="#00eaff"/><rect x="1415" y="338" width="12" height="12" fill="#24e4ff"/><rect x="1427" y="338" width="12" height="12" fill="#48deff"/><rect x="1439" y="338" width="12" height="12" fill="#6cd8ff"/><rect x="1451" y="338" width="12" height="12" fill="#96ccff"/><rect x="1463" y="338" width="12" height="12" fill="#bac6ff"/><rect x="1475" y="338" width="12" height="12" fill="#e4c0ff"/><rect x="1487" y="338" width="12" height="12" fill="#ffa8f0"/><rect x="1499" y="338" width="12" height="12" fill="#ff8ad2"/><rect x="1511" y="338" width="12" height="12" fill="#ff72b4"/><rect x="1523" y="338" width="12" height="12" fill="#ff60a2"/><rect x="1535" y="338" width="12" height="12" fill="#ff5490"/><rect x="1547" y="338" width="12" height="12" fill="#ff4284"/><rect x="1559" y="338" width="12" height="12" fill="#ff3c78"/><rect x="1571" y="338" width="12" height="12" fill="#ff306c"/><rect x="1583" y="338" width="12" height="12" fill="#ff2a66"/><rect x="1595" y="338" width="12" height="12" fill="#ff1e5a"/><rect x="1607" y="338" width="12" height="12" fill="#ff1854"/><rect x="1619" y="338" width="12" height="12" fill="#ff124e"/><rect x="1631" y="338" width="12" height="12" fill="#ff1248"/><rect x="1643" y="338" width="12" height="12" fill="#ff0c48"/><rect x="1655" y="338" width="12" height="12" fill="#ff0642"/><rect x="1667" y="338" width="12" height="12" fill="#ff063c"/><rect x="1679" y="338" width="12" height="12" fill="#ff003c"/><rect x="1691" y="338" width="24" height="12" fill="#ff0036"/><rect x="1391" y="350" width="12" height="12" fill="#00d2ff"/><rect x="1403" y="350" width="12" height="12" fill="#00c6ff"/><rect x="1415" y="350" width="12" height="12" fill="#18c0ff"/><rect x="1427" y="350" width="12" height="12" fill="#3cbaff"/><rect x="1439" y="350" width="12" height="12" fill="#5ab4ff"/><rect x="1451" y="350" width="12" height="12" fill="#7eaeff"/><rect x="1463" y="350" width="12" height="12" fill="#a2a2ff"/><rect x="1475" y="350" width="12" height="12" fill="#c69cff"/><rect x="1487" y="350" width="12" height="12" fill="#ea96ff"/><rect x="1499" y="350" width="12" height="12" fill="#ff84f0"/><rect x="1511" y="350" width="12" height="12" fill="#ff6cd2"/><rect x="1523" y="350" width="12" height="12" fill="#ff5aba"/><rect x="1535" y="350" width="12" height="12" fill="#ff4ea8"/><rect x="1547" y="350" width="12" height="12" fill="#ff4296"/><rect x="1559" y="350" width="12" height="12" fill="#ff368a"/><rect x="1571" y="350" width="12" height="12" fill="#ff2a7e"/><rect x="1583" y="350" width="12" height="12" fill="#ff2478"/><rect x="1595" y="350" width="12" height="12" fill="#ff1e6c"/><rect x="1607" y="350" width="12" height="12" fill="#ff1866"/><rect x="1619" y="350" width="12" height="12" fill="#ff1260"/><rect x="1631" y="350" width="12" height="12" fill="#ff0c5a"/><rect x="1643" y="350" width="12" height="12" fill="#ff0654"/><rect x="1655" y="350" width="12" height="12" fill="#ff064e"/><rect x="1667" y="350" width="12" height="12" fill="#ff0048"/><rect x="1679" y="350" width="24" height="12" fill="#ff0042"/><rect x="1391" y="362" width="12" height="12" fill="#00b4ff"/><rect x="1403" y="362" width="12" height="12" fill="#00aeff"/><rect x="1415" y="362" width="12" height="12" fill="#12a8ff"/><rect x="1427" y="362" width="12" height="12" fill="#309cff"/><rect x="1439" y="362" width="12" height="12" fill="#4e96ff"/><rect x="1451" y="362" width="12" height="12" fill="#6c90ff"/><rect x="1463" y="362" width="12" height="12" fill="#8a8aff"/><rect x="1475" y="362" width="12" height="12" fill="#a884ff"/><rect x="1487" y="362" width="12" height="12" fill="#cc7eff"/><rect x="1499" y="362" width="12" height="12" fill="#ea72ff"/><rect x="1511" y="362" width="12" height="12" fill="#ff66f6"/><rect x="1523" y="362" width="12" height="12" fill="#ff54d8"/><rect x="1535" y="362" width="12" height="12" fill="#ff48c0"/><rect x="1547" y="362" width="12" height="12" fill="#ff3cae"/><rect x="1559" y="362" width="12" height="12" fill="#ff30a2"/><rect x="1571" y="362" width="12" height="12" fill="#ff2490"/><rect x="1583" y="362" width="12" height="12" fill="#ff1e84"/><rect x="1595" y="362" width="12" height="12" fill="#ff187e"/><rect x="1607" y="362" width="12" height="12" fill="#ff1272"/><rect x="1619" y="362" width="12" height="12" fill="#ff0c6c"/><rect x="1631" y="362" width="12" height="12" fill="#ff0666"/><rect x="1643" y="362" width="12" height="12" fill="#ff0660"/><rect x="1655" y="362" width="12" height="12" fill="#ff005a"/><rect x="1667" y="362" width="12" height="12" fill="#ff0054"/><rect x="1679" y="362" width="12" height="12" fill="#ff004e"/><rect x="1391" y="374" width="12" height="12" fill="#009cff"/><rect x="1403" y="374" width="12" height="12" fill="#0096ff"/><rect x="1415" y="374" width="12" height="12" fill="#0c90ff"/><rect x="1427" y="374" width="12" height="12" fill="#248aff"/><rect x="1439" y="374" width="12" height="12" fill="#4284ff"/><rect x="1451" y="374" width="12" height="12" fill="#5a7eff"/><rect x="1463" y="374" width="12" height="12" fill="#7878ff"/><rect x="1475" y="374" width="12" height="12" fill="#966cff"/><rect x="1487" y="374" width="12" height="12" fill="#ae66ff"/><rect x="1499" y="374" width="12" height="12" fill="#cc60ff"/><rect x="1511" y="374" width="12" height="12" fill="#ea5aff"/><rect x="1523" y="374" width="12" height="12" fill="#ff4ef6"/><rect x="1535" y="374" width="12" height="12" fill="#ff42de"/><rect x="1547" y="374" width="12" height="12" fill="#ff36c6"/><rect x="1559" y="374" width="12" height="12" fill="#ff2ab4"/><rect x="1571" y="374" width="12" height="12" fill="#ff24a8"/><rect x="1583" y="374" width="12" height="12" fill="#ff1896"/><rect x="1595" y="374" width="12" height="12" fill="#ff1290"/><rect x="1607" y="374" width="12" height="12" fill="#ff0c84"/><rect x="1619" y="374" width="12" height="12" fill="#ff0c78"/><rect x="1631" y="374" width="12" height="12" fill="#ff0672"/><rect x="1643" y="374" width="12" height="12" fill="#ff006c"/><rect x="1655" y="374" width="12" height="12" fill="#ff0066"/><rect x="1667" y="374" width="12" height="12" fill="#ff0060"/><rect x="1391" y="386" width="12" height="12" fill="#008aff"/><rect x="1403" y="386" width="12" height="12" fill="#0084ff"/><rect x="1415" y="386" width="12" height="12" fill="#067eff"/><rect x="1427" y="386" width="12" height="12" fill="#1e78ff"/><rect x="1439" y="386" width="12" height="12" fill="#3672ff"/><rect x="1451" y="386" width="12" height="12" fill="#4e6cff"/><rect x="1463" y="386" width="12" height="12" fill="#6c66ff"/><rect x="1475" y="386" width="12" height="12" fill="#8460ff"/><rect x="1487" y="386" width="12" height="12" fill="#9c5aff"/><rect x="1499" y="386" width="12" height="12" fill="#b44eff"/><rect x="1511" y="386" width="12" height="12" fill="#d248ff"/><rect x="1523" y="386" width="12" height="12" fill="#ea42ff"/><rect x="1535" y="386" width="12" height="12" fill="#ff3cf6"/><rect x="1547" y="386" width="12" height="12" fill="#ff30de"/><rect x="1559" y="386" width="12" height="12" fill="#ff24cc"/><rect x="1571" y="386" width="12" height="12" fill="#ff1eba"/><rect x="1583" y="386" width="12" height="12" fill="#ff18a8"/><rect x="1595" y="386" width="12" height="12" fill="#ff129c"/><rect x="1607" y="386" width="12" height="12" fill="#ff0c96"/><rect x="1619" y="386" width="12" height="12" fill="#ff068a"/><rect x="1631" y="386" width="12" height="12" fill="#ff007e"/><rect x="1643" y="386" width="12" height="12" fill="#ff0078"/><rect x="1655" y="386" width="12" height="12" fill="#ff0072"/><rect x="1391" y="398" width="12" height="12" fill="#0078ff"/><rect x="1403" y="398" width="12" height="12" fill="#0072ff"/><rect x="1415" y="398" width="12" height="12" fill="#066cff"/><rect x="1427" y="398" width="12" height="12" fill="#1866ff"/><rect x="1439" y="398" width="12" height="12" fill="#3060ff"/><rect x="1451" y="398" width="12" height="12" fill="#485aff"/><rect x="1463" y="398" width="12" height="12" fill="#6054ff"/><rect x="1475" y="398" width="12" height="12" fill="#724eff"/><rect x="1487" y="398" width="12" height="12" fill="#8a48ff"/><rect x="1499" y="398" width="12" height="12" fill="#a242ff"/><rect x="1511" y="398" width="12" height="12" fill="#ba3cff"/><rect x="1523" y="398" width="12" height="12" fill="#d836ff"/><rect x="1535" y="398" width="12" height="12" fill="#f030ff"/><rect x="1547" y="398" width="12" height="12" fill="#ff2af6"/><rect x="1559" y="398" width="12" height="12" fill="#ff1ede"/><rect x="1571" y="398" width="12" height="12" fill="#ff18cc"/><rect x="1583" y="398" width="12" height="12" fill="#ff12c0"/><rect x="1595" y="398" width="12" height="12" fill="#ff0cae"/><rect x="1607" y="398" width="12" height="12" fill="#ff06a2"/><rect x="1619" y="398" width="12" height="12" fill="#ff0096"/><rect x="1631" y="398" width="12" height="12" fill="#ff0090"/><rect x="1643" y="398" width="12" height="12" fill="#ff0084"/><rect x="1655" y="398" width="12" height="12" fill="#ff007e"/><rect x="1391" y="410" width="24" height="12" fill="#0066ff"/><rect x="1415" y="410" width="12" height="12" fill="#0060ff"/><rect x="1427" y="410" width="12" height="12" fill="#125aff"/><rect x="1439" y="410" width="12" height="12" fill="#2a54ff"/><rect x="1451" y="410" width="12" height="12" fill="#3c4eff"/><rect x="1463" y="410" width="12" height="12" fill="#5448ff"/><rect x="1475" y="410" width="12" height="12" fill="#6642ff"/><rect x="1487" y="410" width="12" height="12" fill="#7e3cff"/><rect x="1499" y="410" width="12" height="12" fill="#9636ff"/><rect x="1511" y="410" width="12" height="12" fill="#a830ff"/><rect x="1523" y="410" width="12" height="12" fill="#c02aff"/><rect x="1535" y="410" width="12" height="12" fill="#d824ff"/><rect x="1547" y="410" width="12" height="12" fill="#f01eff"/><rect x="1559" y="410" width="12" height="12" fill="#ff18f6"/><rect x="1571" y="410" width="12" height="12" fill="#ff12e4"/><rect x="1583" y="410" width="12" height="12" fill="#ff0cd2"/><rect x="1595" y="410" width="12" height="12" fill="#ff06c0"/><rect x="1607" y="410" width="12" height="12" fill="#ff00b4"/><rect x="1619" y="410" width="12" height="12" fill="#ff00a8"/><rect x="1631" y="410" width="12" height="12" fill="#ff009c"/><rect x="1643" y="410" width="12" height="12" fill="#ff0096"/><rect x="1403" y="422" width="12" height="12" fill="#005aff"/><rect x="1415" y="422" width="12" height="12" fill="#0054ff"/><rect x="1427" y="422" width="12" height="12" fill="#124eff"/><rect x="1439" y="422" width="12" height="12" fill="#2448ff"/><rect x="1451" y="422" width="12" height="12" fill="#3642ff"/><rect x="1463" y="422" width="12" height="12" fill="#483cff"/><rect x="1475" y="422" width="12" height="12" fill="#603cff"/><rect x="1487" y="422" width="12" height="12" fill="#7236ff"/><rect x="1499" y="422" width="12" height="12" fill="#8430ff"/><rect x="1511" y="422" width="12" height="12" fill="#9c2aff"/><rect x="1523" y="422" width="12" height="12" fill="#ae24ff"/><rect x="1535" y="422" width="12" height="12" fill="#c61eff"/><rect x="1547" y="422" width="12" height="12" fill="#d818ff"/><rect x="1559" y="422" width="12" height="12" fill="#f012ff"/><rect x="1571" y="422" width="12" height="12" fill="#ff0cf6"/><rect x="1583" y="422" width="12" height="12" fill="#ff06e4"/><rect x="1595" y="422" width="12" height="12" fill="#ff00d2"/><rect x="1607" y="422" width="12" height="12" fill="#ff00c6"/><rect x="1619" y="422" width="12" height="12" fill="#ff00ba"/><rect x="1631" y="422" width="12" height="12" fill="#ff00ae"/><rect x="1403" y="434" width="12" height="12" fill="#004eff"/><rect x="1415" y="434" width="12" height="12" fill="#0048ff"/><rect x="1427" y="434" width="12" height="12" fill="#0c42ff"/><rect x="1439" y="434" width="12" height="12" fill="#1e3cff"/><rect x="1451" y="434" width="12" height="12" fill="#303cff"/><rect x="1463" y="434" width="12" height="12" fill="#4236ff"/><rect x="1475" y="434" width="12" height="12" fill="#5430ff"/><rect x="1487" y="434" width="12" height="12" fill="#662aff"/><rect x="1499" y="434" width="12" height="12" fill="#7824ff"/><rect x="1511" y="434" width="12" height="12" fill="#9024ff"/><rect x="1523" y="434" width="12" height="12" fill="#a21eff"/><rect x="1535" y="434" width="12" height="12" fill="#b418ff"/><rect x="1547" y="434" width="12" height="12" fill="#c612ff"/><rect x="1559" y="434" width="12" height="12" fill="#de0cff"/><rect x="1571" y="434" width="12" height="12" fill="#f006ff"/><rect x="1583" y="434" width="12" height="12" fill="#ff00f6"/><rect x="1595" y="434" width="12" height="12" fill="#ff00e4"/><rect x="1607" y="434" width="12" height="12" fill="#ff00d8"/><rect x="1619" y="434" width="12" height="12" fill="#ff00c6"/><rect x="1403" y="446" width="24" height="12" fill="#0042ff"/><rect x="1427" y="446" width="12" height="12" fill="#063cff"/><rect x="1439" y="446" width="12" height="12" fill="#1836ff"/><rect x="1451" y="446" width="12" height="12" fill="#2a30ff"/><rect x="1463" y="446" width="12" height="12" fill="#3c30ff"/><rect x="1475" y="446" width="12" height="12" fill="#4e2aff"/><rect x="1487" y="446" width="12" height="12" fill="#6024ff"/><rect x="1499" y="446" width="12" height="12" fill="#721eff"/><rect x="1511" y="446" width="12" height="12" fill="#8418ff"/><rect x="1523" y="446" width="12" height="12" fill="#9618ff"/><rect x="1535" y="446" width="12" height="12" fill="#a812ff"/><rect x="1547" y="446" width="12" height="12" fill="#ba0cff"/><rect x="1559" y="446" width="12" height="12" fill="#cc06ff"/><rect x="1571" y="446" width="12" height="12" fill="#de00ff"/><rect x="1583" y="446" width="12" height="12" fill="#f000ff"/><rect x="1595" y="446" width="12" height="12" fill="#ff00f6"/><rect x="1607" y="446" width="12" height="12" fill="#ff00ea"/><rect x="1403" y="458" width="12" height="12" fill="#003cff"/><rect x="1415" y="458" width="12" height="12" fill="#0036ff"/><rect x="1427" y="458" width="12" height="12" fill="#0636ff"/><rect x="1439" y="458" width="12" height="12" fill="#1830ff"/><rect x="1451" y="458" width="12" height="12" fill="#242aff"/><rect x="1463" y="458" width="12" height="12" fill="#3624ff"/><rect x="1475" y="458" width="12" height="12" fill="#4824ff"/><rect x="1487" y="458" width="12" height="12" fill="#541eff"/><rect x="1499" y="458" width="12" height="12" fill="#6618ff"/><rect x="1511" y="458" width="12" height="12" fill="#7812ff"/><rect x="1523" y="458" width="12" height="12" fill="#8a12ff"/><rect x="1535" y="458" width="12" height="12" fill="#9c0cff"/><rect x="1547" y="458" width="12" height="12" fill="#a806ff"/><rect x="1559" y="458" width="12" height="12" fill="#ba00ff"/><rect x="1571" y="458" width="12" height="12" fill="#cc00ff"/><rect x="1583" y="458" width="12" height="12" fill="#de00ff"/><rect x="1595" y="458" width="12" height="12" fill="#f000ff"/><rect x="1403" y="470" width="12" height="12" fill="#0036ff"/><rect x="1415" y="470" width="12" height="12" fill="#0030ff"/><rect x="1427" y="470" width="12" height="12" fill="#002aff"/><rect x="1439" y="470" width="12" height="12" fill="#122aff"/><rect x="1451" y="470" width="12" height="12" fill="#1e24ff"/><rect x="1463" y="470" width="12" height="12" fill="#301eff"/><rect x="1475" y="470" width="12" height="12" fill="#421eff"/><rect x="1487" y="470" width="12" height="12" fill="#4e18ff"/><rect x="1499" y="470" width="12" height="12" fill="#6012ff"/><rect x="1511" y="470" width="12" height="12" fill="#6c0cff"/><rect x="1523" y="470" width="12" height="12" fill="#7e0cff"/><rect x="1535" y="470" width="12" height="12" fill="#9006ff"/><rect x="1547" y="470" width="12" height="12" fill="#9c00ff"/><rect x="1559" y="470" width="12" height="12" fill="#ae00ff"/><rect x="1571" y="470" width="12" height="12" fill="#c000ff"/><rect x="1583" y="470" width="12" height="12" fill="#d200ff"/><rect x="1403" y="482" width="12" height="12" fill="#0030ff"/><rect x="1415" y="482" width="12" height="12" fill="#002aff"/><rect x="1427" y="482" width="12" height="12" fill="#0024ff"/><rect x="1439" y="482" width="12" height="12" fill="#0c24ff"/><rect x="1451" y="482" width="12" height="12" fill="#1e1eff"/><rect x="1463" y="482" width="12" height="12" fill="#2a18ff"/><rect x="1475" y="482" width="12" height="12" fill="#3c18ff"/><rect x="1487" y="482" width="12" height="12" fill="#4812ff"/><rect x="1499" y="482" width="12" height="12" fill="#5a0cff"/><rect x="1511" y="482" width="12" height="12" fill="#660cff"/><rect x="1523" y="482" width="12" height="12" fill="#7806ff"/><rect x="1535" y="482" width="12" height="12" fill="#8400ff"/><rect x="1547" y="482" width="12" height="12" fill="#9600ff"/><rect x="1559" y="482" width="12" height="12" fill="#a200ff"/><rect x="1571" y="482" width="12" height="12" fill="#b400ff"/><rect x="1415" y="494" width="12" height="12" fill="#0024ff"/><rect x="1427" y="494" width="12" height="12" fill="#001eff"/><rect x="1439" y="494" width="12" height="12" fill="#0c1eff"/><rect x="1451" y="494" width="12" height="12" fill="#1818ff"/><rect x="1463" y="494" width="12" height="12" fill="#2418ff"/><rect x="1475" y="494" width="12" height="12" fill="#3612ff"/><rect x="1487" y="494" width="12" height="12" fill="#420cff"/><rect x="1499" y="494" width="12" height="12" fill="#4e0cff"/><rect x="1511" y="494" width="12" height="12" fill="#6006ff"/><rect x="1523" y="494" width="12" height="12" fill="#6c00ff"/><rect x="1535" y="494" width="12" height="12" fill="#7e00ff"/><rect x="1547" y="494" width="12" height="12" fill="#8a00ff"/><rect x="1559" y="494" width="12" height="12" fill="#9600ff"/><rect x="1415" y="506" width="24" height="12" fill="#001eff"/><rect x="1439" y="506" width="12" height="12" fill="#0618ff"/><rect x="1451" y="506" width="12" height="12" fill="#1812ff"/><rect x="1463" y="506" width="12" height="12" fill="#2412ff"/><rect x="1475" y="506" width="12" height="12" fill="#300cff"/><rect x="1487" y="506" width="12" height="12" fill="#3c0cff"/><rect x="1499" y="506" width="12" height="12" fill="#4806ff"/><rect x="1511" y="506" width="12" height="12" fill="#5a00ff"/><rect x="1523" y="506" width="12" height="12" fill="#6600ff"/><rect x="1535" y="506" width="12" height="12" fill="#7200ff"/><rect x="1547" y="506" width="12" height="12" fill="#8400ff"/><rect x="1415" y="518" width="24" height="12" fill="#0018ff"/><rect x="1439" y="518" width="12" height="12" fill="#0612ff"/><rect x="1451" y="518" width="12" height="12" fill="#1212ff"/><rect x="1463" y="518" width="12" height="12" fill="#1e0cff"/><rect x="1475" y="518" width="12" height="12" fill="#2a06ff"/><rect x="1487" y="518" width="12" height="12" fill="#3606ff"/><rect x="1499" y="518" width="12" height="12" fill="#4800ff"/><rect x="1511" y="518" width="12" height="12" fill="#5400ff"/><rect x="1523" y="518" width="12" height="12" fill="#6000ff"/><rect x="1535" y="518" width="12" height="12" fill="#6c00ff"/><rect x="1415" y="530" width="12" height="12" fill="#0018ff"/><rect x="1427" y="530" width="12" height="12" fill="#0012ff"/><rect x="1439" y="530" width="12" height="12" fill="#060cff"/><rect x="1451" y="530" width="12" height="12" fill="#120cff"/><rect x="1463" y="530" width="12" height="12" fill="#1e06ff"/><rect x="1475" y="530" width="12" height="12" fill="#2a06ff"/><rect x="1487" y="530" width="12" height="12" fill="#3600ff"/><rect x="1499" y="530" width="12" height="12" fill="#4200ff"/><rect x="1511" y="530" width="12" height="12" fill="#4e00ff"/><rect x="1523" y="530" width="12" height="12" fill="#5a00ff"/><rect x="1415" y="542" width="12" height="12" fill="#0012ff"/><rect x="1427" y="542" width="24" height="12" fill="#000cff"/><rect x="1451" y="542" width="12" height="12" fill="#0c06ff"/><rect x="1463" y="542" width="12" height="12" fill="#1806ff"/><rect x="1475" y="542" width="12" height="12" fill="#2400ff"/><rect x="1487" y="542" width="12" height="12" fill="#3000ff"/><rect x="1499" y="542" width="12" height="12" fill="#3c00ff"/><rect x="1511" y="542" width="12" height="12" fill="#4800ff"/><rect x="1415" y="554" width="24" height="12" fill="#000cff"/><rect x="1439" y="554" width="12" height="12" fill="#0006ff"/><rect x="1451" y="554" width="12" height="12" fill="#0c06ff"/><rect x="1463" y="554" width="12" height="12" fill="#1800ff"/><rect x="1475" y="554" width="12" height="12" fill="#2400ff"/><rect x="1487" y="554" width="12" height="12" fill="#2a00ff"/><rect x="1499" y="554" width="12" height="12" fill="#3600ff"/><rect x="1427" y="566" width="24" height="12" fill="#0006ff"/><rect x="1451" y="566" width="12" height="12" fill="#0c00ff"/><rect x="1463" y="566" width="12" height="12" fill="#1200ff"/><rect x="1475" y="566" width="12" height="12" fill="#1e00ff"/><rect x="1487" y="566" width="12" height="12" fill="#2a00ff"/><rect x="1427" y="578" width="12" height="12" fill="#0006ff"/><rect x="1439" y="578" width="12" height="12" fill="#0000ff"/><rect x="1451" y="578" width="12" height="12" fill="#0600ff"/><rect x="1463" y="578" width="12" height="12" fill="#1200ff"/><rect x="1475" y="578" width="12" height="12" fill="#1e00ff"/><rect x="1427" y="590" width="24" height="12" fill="#0000ff"/><rect x="1451" y="590" width="12" height="12" fill="#0600ff"/><rect x="1463" y="590" width="12" height="12" fill="#1200ff"/><rect x="1439" y="602" width="12" height="12" fill="#0000ff"/><rect x="1451" y="602" width="12" height="12" fill="#0600ff"/></g></g></g></svg>
<canvas id="cie" width="650" height="500" style="position:absolute;left:1259px;top:218px;width:650px;height:500px"></canvas>
<svg style="position:absolute;left:1688px;top:564px" width="214" height="145" viewBox="1688 564 214 145">
<defs><linearGradient id="iu" x1="0" y1="0" x2="1" y2="1"><stop offset="0" stop-color="#609800"/><stop offset="0.5" stop-color="#959800"/><stop offset="1" stop-color="#9a7000"/></linearGradient>
<linearGradient id="il" x1="0" y1="0.2" x2="1" y2="1"><stop offset="0" stop-color="#a8ff00"/><stop offset="0.45" stop-color="#ffff00"/><stop offset="1" stop-color="#ffb000"/></linearGradient></defs>
<rect x="1688" y="564" width="214" height="145" fill="url(#iu)"/>
<path d="M1688 580 L1902 694 L1902 709 L1688 709Z" fill="url(#il)"/>
</svg>
<canvas id="ins" width="214" height="145" style="position:absolute;left:1688px;top:564px;width:214px;height:145px"></canvas>
<svg style="position:absolute;left:0;top:0" width="1920" height="1146" viewBox="0 0 1920 1146" font-family="Liberation Sans, sans-serif"><rect x="1259" y="218" width="650" height="500" fill="none" stroke="#9c9c9c" stroke-width="1.6"/><line x1="1253" y1="718.0" x2="1259" y2="718.0" stroke="#9c9c9c" stroke-width="1.5"/><text x="1252.5" y="723.0" font-size="14" fill="#e4e4e4" text-anchor="end" >0</text><line x1="1259.0" y1="718" x2="1259.0" y2="724" stroke="#9c9c9c" stroke-width="1.5"/><text x="1259.0" y="739.5" font-size="14" fill="#e4e4e4" text-anchor="middle" >0</text><line x1="1253" y1="676.4" x2="1259" y2="676.4" stroke="#9c9c9c" stroke-width="1.5"/><text x="1252.5" y="681.4" font-size="14" fill="#e4e4e4" text-anchor="end" >0.05</text><line x1="1313.0" y1="718" x2="1313.0" y2="724" stroke="#9c9c9c" stroke-width="1.5"/><text x="1313.0" y="739.5" font-size="14" fill="#e4e4e4" text-anchor="middle" >0.05</text><line x1="1253" y1="634.8" x2="1259" y2="634.8" stroke="#9c9c9c" stroke-width="1.5"/><text x="1252.5" y="639.8" font-size="14" fill="#e4e4e4" text-anchor="end" >0.1</text><line x1="1367.1" y1="718" x2="1367.1" y2="724" stroke="#9c9c9c" stroke-width="1.5"/><text x="1367.1" y="739.5" font-size="14" fill="#e4e4e4" text-anchor="middle" >0.1</text><line x1="1253" y1="593.2" x2="1259" y2="593.2" stroke="#9c9c9c" stroke-width="1.5"/><text x="1252.5" y="598.2" font-size="14" fill="#e4e4e4" text-anchor="end" >0.15</text><line x1="1421.2" y1="718" x2="1421.2" y2="724" stroke="#9c9c9c" stroke-width="1.5"/><text x="1421.2" y="739.5" font-size="14" fill="#e4e4e4" text-anchor="middle" >0.15</text><line x1="1253" y1="551.6" x2="1259" y2="551.6" stroke="#9c9c9c" stroke-width="1.5"/><text x="1252.5" y="556.6" font-size="14" fill="#e4e4e4" text-anchor="end" >0.2</text><line x1="1475.2" y1="718" x2="1475.2" y2="724" stroke="#9c9c9c" stroke-width="1.5"/><text x="1475.2" y="739.5" font-size="14" fill="#e4e4e4" text-anchor="middle" >0.2</text><line x1="1253" y1="510.0" x2="1259" y2="510.0" stroke="#9c9c9c" stroke-width="1.5"/><text x="1252.5" y="515.0" font-size="14" fill="#e4e4e4" text-anchor="end" >0.25</text><line x1="1529.2" y1="718" x2="1529.2" y2="724" stroke="#9c9c9c" stroke-width="1.5"/><text x="1529.2" y="739.5" font-size="14" fill="#e4e4e4" text-anchor="middle" >0.25</text><line x1="1253" y1="468.4" x2="1259" y2="468.4" stroke="#9c9c9c" stroke-width="1.5"/><text x="1252.5" y="473.4" font-size="14" fill="#e4e4e4" text-anchor="end" >0.3</text><line x1="1583.3" y1="718" x2="1583.3" y2="724" stroke="#9c9c9c" stroke-width="1.5"/><text x="1583.3" y="739.5" font-size="14" fill="#e4e4e4" text-anchor="middle" >0.3</text><line x1="1253" y1="426.8" x2="1259" y2="426.8" stroke="#9c9c9c" stroke-width="1.5"/><text x="1252.5" y="431.8" font-size="14" fill="#e4e4e4" text-anchor="end" >0.35</text><line x1="1637.3" y1="718" x2="1637.3" y2="724" stroke="#9c9c9c" stroke-width="1.5"/><text x="1637.3" y="739.5" font-size="14" fill="#e4e4e4" text-anchor="middle" >0.35</text><line x1="1253" y1="385.2" x2="1259" y2="385.2" stroke="#9c9c9c" stroke-width="1.5"/><text x="1252.5" y="390.2" font-size="14" fill="#e4e4e4" text-anchor="end" >0.4</text><line x1="1691.4" y1="718" x2="1691.4" y2="724" stroke="#9c9c9c" stroke-width="1.5"/><text x="1691.4" y="739.5" font-size="14" fill="#e4e4e4" text-anchor="middle" >0.4</text><line x1="1253" y1="343.6" x2="1259" y2="343.6" stroke="#9c9c9c" stroke-width="1.5"/><text x="1252.5" y="348.6" font-size="14" fill="#e4e4e4" text-anchor="end" >0.45</text><line x1="1745.5" y1="718" x2="1745.5" y2="724" stroke="#9c9c9c" stroke-width="1.5"/><text x="1745.5" y="739.5" font-size="14" fill="#e4e4e4" text-anchor="middle" >0.45</text><line x1="1253" y1="302.0" x2="1259" y2="302.0" stroke="#9c9c9c" stroke-width="1.5"/><text x="1252.5" y="307.0" font-size="14" fill="#e4e4e4" text-anchor="end" >0.5</text><line x1="1799.5" y1="718" x2="1799.5" y2="724" stroke="#9c9c9c" stroke-width="1.5"/><text x="1799.5" y="739.5" font-size="14" fill="#e4e4e4" text-anchor="middle" >0.5</text><line x1="1253" y1="260.4" x2="1259" y2="260.4" stroke="#9c9c9c" stroke-width="1.5"/><text x="1252.5" y="265.4" font-size="14" fill="#e4e4e4" text-anchor="end" >0.55</text><line x1="1853.6" y1="718" x2="1853.6" y2="724" stroke="#9c9c9c" stroke-width="1.5"/><text x="1853.6" y="739.5" font-size="14" fill="#e4e4e4" text-anchor="middle" >0.55</text><text x="1566.8" y="213.0" font-size="14.5" fill="#e4e4e4" text-anchor="middle" >CIE 1976 u'v'</text><rect x="1386.4" y="241.0" width="13.6" height="13.6" fill="none" stroke="#f4f4f4" stroke-width="1.6"/><rect x="1398.0" y="253.2" width="13.6" height="13.6" fill="none" stroke="#f4f4f4" stroke-width="1.6"/><rect x="1410.7" y="265.8" width="13.6" height="13.6" fill="none" stroke="#f4f4f4" stroke-width="1.6"/><rect x="1424.9" y="281.0" width="13.6" height="13.6" fill="none" stroke="#f4f4f4" stroke-width="1.6"/><rect x="1443.6" y="297.2" width="13.6" height="13.6" fill="none" stroke="#f4f4f4" stroke-width="1.6"/><rect x="1471.6" y="249.3" width="13.6" height="13.6" fill="none" stroke="#f4f4f4" stroke-width="1.6"/><rect x="1470.9" y="261.4" width="13.6" height="13.6" fill="none" stroke="#f4f4f4" stroke-width="1.6"/><rect x="1469.7" y="274.1" width="13.6" height="13.6" fill="none" stroke="#f4f4f4" stroke-width="1.6"/><rect x="1468.6" y="286.8" width="13.6" height="13.6" fill="none" stroke="#f4f4f4" stroke-width="1.6"/><rect x="1467.4" y="301.8" width="13.6" height="13.6" fill="none" stroke="#f4f4f4" stroke-width="1.6"/><rect x="1400.6" y="331.6" width="13.6" height="13.6" fill="none" stroke="#f4f4f4" stroke-width="1.6"/><rect x="1414.7" y="328.6" width="13.6" height="13.6" fill="none" stroke="#f4f4f4" stroke-width="1.6"/><rect x="1427.4" y="326.0" width="13.6" height="13.6" fill="none" stroke="#f4f4f4" stroke-width="1.6"/><rect x="1441.1" y="323.5" width="13.6" height="13.6" fill="none" stroke="#f4f4f4" stroke-width="1.6"/><rect x="1454.2" y="322.0" width="13.6" height="13.6" fill="none" stroke="#f4f4f4" stroke-width="1.6"/><rect x="1738.6" y="274.4" width="13.6" height="13.6" fill="none" stroke="#f4f4f4" stroke-width="1.6"/><rect x="1673.8" y="285.5" width="13.6" height="13.6" fill="none" stroke="#f4f4f4" stroke-width="1.6"/><rect x="1618.2" y="295.2" width="13.6" height="13.6" fill="none" stroke="#f4f4f4" stroke-width="1.6"/><rect x="1568.6" y="301.7" width="13.6" height="13.6" fill="none" stroke="#f4f4f4" stroke-width="1.6"/><rect x="1514.4" y="311.4" width="13.6" height="13.6" fill="none" stroke="#f4f4f4" stroke-width="1.6"/><rect x="1581.7" y="434.8" width="13.6" height="13.6" fill="none" stroke="#f4f4f4" stroke-width="1.6"/><rect x="1547.3" y="402.5" width="13.6" height="13.6" fill="none" stroke="#f4f4f4" stroke-width="1.6"/><rect x="1521.5" y="376.2" width="13.6" height="13.6" fill="none" stroke="#f4f4f4" stroke-width="1.6"/><rect x="1501.8" y="355.9" width="13.6" height="13.6" fill="none" stroke="#f4f4f4" stroke-width="1.6"/><rect x="1482.6" y="336.2" width="13.6" height="13.6" fill="none" stroke="#f4f4f4" stroke-width="1.6"/><rect x="1442.1" y="578.1" width="13.6" height="13.6" fill="none" stroke="#f4f4f4" stroke-width="1.6"/><rect x="1450.2" y="491.0" width="13.6" height="13.6" fill="none" stroke="#f4f4f4" stroke-width="1.6"/><rect x="1454.7" y="433.2" width="13.6" height="13.6" fill="none" stroke="#f4f4f4" stroke-width="1.6"/><rect x="1459.8" y="387.8" width="13.6" height="13.6" fill="none" stroke="#f4f4f4" stroke-width="1.6"/><rect x="1461.8" y="350.8" width="13.6" height="13.6" fill="none" stroke="#f4f4f4" stroke-width="1.6"/><circle cx="1393.3" cy="248" r="4.3" fill="#00b000" fill-opacity="0.75" stroke="#1a1a1a" stroke-width="1.5"/><circle cx="1402.6" cy="258.9" r="4.3" fill="#40a040" fill-opacity="0.75" stroke="#1a1a1a" stroke-width="1.5"/><circle cx="1417.1" cy="271.6" r="4.3" fill="#50a050" fill-opacity="0.75" stroke="#1a1a1a" stroke-width="1.5"/><circle cx="1430.8" cy="286.7" r="4.3" fill="#60a060" fill-opacity="0.75" stroke="#1a1a1a" stroke-width="1.5"/><circle cx="1448.3" cy="303.3" r="4.3" fill="#90b090" fill-opacity="0.75" stroke="#1a1a1a" stroke-width="1.5"/><circle cx="1476.5" cy="255" r="4.3" fill="#c0c000" fill-opacity="0.75" stroke="#1a1a1a" stroke-width="1.5"/><circle cx="1474.9" cy="267.5" r="4.3" fill="#b0b040" fill-opacity="0.75" stroke="#1a1a1a" stroke-width="1.5"/><circle cx="1474.9" cy="278.6" r="4.3" fill="#b0b060" fill-opacity="0.75" stroke="#1a1a1a" stroke-width="1.5"/><circle cx="1473.1" cy="292.4" r="4.3" fill="#b0b070" fill-opacity="0.75" stroke="#1a1a1a" stroke-width="1.5"/><circle cx="1472.4" cy="307.5" r="4.3" fill="#b0b090" fill-opacity="0.75" stroke="#1a1a1a" stroke-width="1.5"/><circle cx="1406" cy="335.2" r="4.3" fill="#00c0c0" fill-opacity="0.75" stroke="#1a1a1a" stroke-width="1.5"/><circle cx="1418.7" cy="332.4" r="4.3" fill="#40b0b0" fill-opacity="0.75" stroke="#1a1a1a" stroke-width="1.5"/><circle cx="1430.8" cy="330.6" r="4.3" fill="#60b0b0" fill-opacity="0.75" stroke="#1a1a1a" stroke-width="1.5"/><circle cx="1444.9" cy="327.6" r="4.3" fill="#80b0b0" fill-opacity="0.75" stroke="#1a1a1a" stroke-width="1.5"/><circle cx="1456.9" cy="327.1" r="4.3" fill="#a0b0b0" fill-opacity="0.75" stroke="#1a1a1a" stroke-width="1.5"/><circle cx="1745.4" cy="281.2" r="4.3" fill="#e00000" fill-opacity="0.75" stroke="#1a1a1a" stroke-width="1.5"/><circle cx="1678.1" cy="291.3" r="4.3" fill="#c04040" fill-opacity="0.75" stroke="#1a1a1a" stroke-width="1.5"/><circle cx="1624" cy="299.4" r="4.3" fill="#c06060" fill-opacity="0.75" stroke="#1a1a1a" stroke-width="1.5"/><circle cx="1576.4" cy="307.5" r="4.3" fill="#c07070" fill-opacity="0.75" stroke="#1a1a1a" stroke-width="1.5"/><circle cx="1519.2" cy="317.1" r="4.3" fill="#c09090" fill-opacity="0.75" stroke="#1a1a1a" stroke-width="1.5"/><circle cx="1585.5" cy="435.6" r="4.3" fill="#c000c0" fill-opacity="0.75" stroke="#1a1a1a" stroke-width="1.5"/><circle cx="1554.1" cy="406.7" r="4.3" fill="#c040c0" fill-opacity="0.75" stroke="#1a1a1a" stroke-width="1.5"/><circle cx="1528.8" cy="381.9" r="4.3" fill="#c060c0" fill-opacity="0.75" stroke="#1a1a1a" stroke-width="1.5"/><circle cx="1508.6" cy="361.2" r="4.3" fill="#c080c0" fill-opacity="0.75" stroke="#1a1a1a" stroke-width="1.5"/><circle cx="1487.3" cy="342" r="4.3" fill="#c0a0c0" fill-opacity="0.75" stroke="#1a1a1a" stroke-width="1.5"/><circle cx="1444.3" cy="568.7" r="4.3" fill="#0000c0" fill-opacity="0.75" stroke="#1a1a1a" stroke-width="1.5"/><circle cx="1455.4" cy="495.3" r="4.3" fill="#4040c0" fill-opacity="0.75" stroke="#1a1a1a" stroke-width="1.5"/><circle cx="1459.5" cy="438.1" r="4.3" fill="#6060c0" fill-opacity="0.75" stroke="#1a1a1a" stroke-width="1.5"/><circle cx="1463.5" cy="393" r="4.3" fill="#8080c0" fill-opacity="0.75" stroke="#1a1a1a" stroke-width="1.5"/><circle cx="1468.1" cy="354.1" r="4.3" fill="#a0a0c0" fill-opacity="0.75" stroke="#1a1a1a" stroke-width="1.5"/><rect x="1464.8" y="319.6" width="14" height="14" fill="none" stroke="#111" stroke-width="2"/><circle cx="1471.2" cy="324.1" r="4.3" fill="#fff" stroke="#222" stroke-width="1.4"/><rect x="1685.2" y="561.8" width="218.6" height="148.8" fill="none" stroke="#2a2a2a" stroke-width="3"/><rect x="1687.6" y="564.1" width="214.2" height="144.6" fill="none" stroke="#9a9a9a" stroke-width="1.3"/><circle cx="1782.4" cy="621.3" r="4.3" fill="#c4bc00" stroke="#1a1a1a" stroke-width="1.5"/><rect x="1786.7" y="628.7" width="13.6" height="13.6" fill="none" stroke="#f4f4f4" stroke-width="1.6"/></svg>
<script>
(function(){
var L=[277.7,486.3,277.0,486.3,275.9,486.3,274.7,486.2,273.6,486.1,272.7,486.0,272.0,485.7,271.4,485.4,270.9,485.0,270.4,484.6,269.8,484.1,269.2,483.6,268.5,483.1,267.7,482.5,266.9,481.9,266.0,481.2,265.1,480.4,264.0,479.6,263.0,478.8,261.8,477.8,260.6,476.9,259.4,475.8,258.1,474.7,256.7,473.5,255.3,472.3,253.8,471.0,252.2,469.6,250.5,468.3,248.8,466.8,246.9,465.3,245.0,463.7,242.9,462.0,240.8,460.2,238.5,458.3,236.1,456.3,233.6,454.3,231.1,452.2,228.4,450.0,225.6,447.7,222.8,445.3,219.8,442.7,216.6,440.0,213.4,437.1,210.0,434.2,206.5,431.0,202.9,427.5,199.1,423.9,195.3,420.2,191.4,416.3,187.2,411.9,182.7,406.9,177.8,401.3,172.6,395.3,167.2,388.8,161.6,381.8,155.8,374.4,149.8,366.4,143.5,358.0,137.1,349.0,130.6,339.7,124.0,329.9,117.2,319.6,110.3,308.8,103.3,297.6,96.4,286.2,89.5,274.7,82.7,263.0,75.8,251.0,69.0,238.8,62.5,226.7,56.4,214.9,50.6,203.1,45.1,191.3,39.9,179.7,35.0,168.4,30.4,157.5,26.2,147.0,22.4,136.9,18.9,127.1,15.7,117.8,12.8,109.1,10.4,100.9,8.3,93.3,6.5,86.1,5.0,79.4,3.7,73.1,2.8,67.3,2.1,61.9,1.7,57.0,1.5,52.4,1.5,48.1,1.8,44.0,2.3,40.3,3.0,36.9,3.9,33.8,5.0,30.9,6.3,28.2,7.8,25.8,9.5,23.6,11.3,21.7,13.3,20.0,15.4,18.4,17.6,17.2,20.0,16.1,22.4,15.2,25.0,14.4,27.6,13.7,30.3,13.2,33.1,12.9,36.0,12.6,38.9,12.3,41.9,12.1,44.9,12.0,48.0,11.9,51.0,11.9,54.1,11.8,57.2,11.8,60.2,11.8,63.3,11.9,66.4,11.9,69.5,12.0,72.7,12.1,75.9,12.2,79.1,12.4,82.3,12.6,85.6,12.8,89.0,13.0,92.4,13.2,95.9,13.5,99.4,13.7,103.0,14.0,106.6,14.3,110.3,14.6,114.1,15.0,117.9,15.3,121.8,15.7,125.8,16.1,129.9,16.5,134.0,16.9,138.3,17.4,142.6,17.8,147.0,18.3,151.5,18.8,156.1,19.3,160.7,19.8,165.5,20.3,170.4,20.8,175.4,21.4,180.4,21.9,185.6,22.5,190.9,23.1,196.3,23.7,201.8,24.3,207.4,25.0,213.1,25.6,219.0,26.3,224.9,27.0,231.0,27.7,237.2,28.4,243.5,29.1,249.9,29.8,256.4,30.6,263.0,31.3,269.8,32.1,276.6,32.9,283.6,33.7,290.7,34.5,297.8,35.4,305.1,36.2,312.5,37.0,319.9,37.9,327.4,38.8,335.1,39.6,342.8,40.5,350.5,41.4,358.3,42.3,366.2,43.2,374.1,44.1,382.1,45.0,390.0,46.0,397.9,46.9,405.7,47.8,413.4,48.6,421.0,49.5,428.6,50.4,436.2,51.3,443.8,52.1,451.3,53.0,458.9,53.9,466.2,54.7,473.5,55.6,480.5,56.4,487.4,57.1,494.1,57.9,500.7,58.7,507.1,59.4,513.4,60.1,519.5,60.8,525.5,61.5,531.3,62.2,536.9,62.8,542.4,63.5,547.6,64.1,552.7,64.7,557.6,65.2,562.3,65.8,566.9,66.3,571.3,66.8,575.6,67.3,579.7,67.8,583.7,68.2,587.5,68.6,591.2,69.1,594.7,69.5,598.2,69.9,601.6,70.3,604.9,70.6,608.1,71.0,611.2,71.4,614.2,71.7,617.1,72.1,619.9,72.4,622.7,72.7,625.3,73.0,627.8,73.3,630.2,73.6,632.6,73.8,634.8,74.1,637.0,74.4,639.1,74.6,641.0,74.8,642.7,75.0,644.3,75.2,645.8,75.4,647.3,75.5,649.1,75.7,651.2,76.0,653.4,76.2,655.8,76.5,658.1,76.8,660.3,77.0,662.4,77.3,664.6,77.5,666.7,77.8,668.6,78.0,670.2,78.2,671.4,78.3,672.3,78.4,672.9,78.5,673.5,78.5,673.9,78.6]; var GAM=1.0;
function col(u,v,k){
  var d=6*u-16*v+12, x=9*u/d, y=4*v/d;
  return colxy(x,y,k);
}
function colxy(x,y,k){
  if(y<=0) return [0,0,0];
  var X=x/y, Z=(1-x-y)/y;
  var r=3.2406*X-1.5372-0.4986*Z, g=-0.9689*X+1.8758+0.0415*Z, b=0.0557*X-0.2040+1.0570*Z;
  var ins=(r>=0&&g>=0&&b>=0);
  r=Math.max(r,0);g=Math.max(g,0);b=Math.max(b,0);
  var m=Math.max(r,g,b)||1; r/=m; g/=m; b/=m;
  function GM(c){return Math.pow(c,GAM);}
  r=GM(r);g=GM(g);b=GM(b);
  if(!ins){r*=k;g*=k;b*=k;}
  return [r*255,g*255,b*255];
}
function draw(id,W,H,map,clip,k,xy){
  var c=document.getElementById(id); if(!c||!c.getContext) return;
  var ctx=c.getContext('2d');
  var off=document.createElement('canvas'); off.width=W; off.height=H;
  var oc=off.getContext('2d'); var im=oc.createImageData(W,H); var D=im.data;
  for(var j=0;j<H;j++){for(var i=0;i<W;i++){
    var uv=map(i+0.5,j+0.5); var p=xy?colxy(uv[0],uv[1],k):col(uv[0],uv[1],k); var o=(j*W+i)*4;
    D[o]=p[0];D[o+1]=p[1];D[o+2]=p[2];D[o+3]=255;}}
  oc.putImageData(im,0,0);
  ctx.save();
  if(clip){ctx.beginPath(); ctx.moveTo(L[0],L[1]); for(var q=2;q<L.length;q+=2){ctx.lineTo(L[q],L[q+1]);} ctx.closePath(); ctx.clip();}
  ctx.drawImage(off,0,0); ctx.restore();
}
draw('cie',650,500,function(i,j){return [i/1081,(500-j)/832];},true,0.62);
draw('ins',214,145,function(i,j){var x=1688+i, y=564+j; return [0.4193+(x-1793.5)/4500, 0.5053-(y-635.5)/3000];},false,0.62,true);
})();
</script>
<div style="position:absolute;left:225px;top:1075.5px;width:1695px;height:70.5px;background:#262626"></div>
<div style="position:absolute;left:1136px;top:1076px;width:422px;height:70px;background:linear-gradient(#474747,#2a2a2a)"></div>
<div style="position:absolute;left:226.1px;top:1076.2px;width:50.5px;height:68.3px;background:linear-gradient(#a0a0a0,#5a5a5a);border-radius:5px"></div>
<div style="position:absolute;left:242.9px;top:1078.5px;width:17px;height:17px;border-radius:50%;background:linear-gradient(#5e5e5e,#8c8c8c)"></div>
<svg style="position:absolute;left:246px;top:1082px" width="11" height="8"><path d="M0.5 6.5 H10.5 L5.5 1Z" fill="#1e1e1e"/></svg>
<div style="position:absolute;left:231.9px;top:1105.5px;width:39.3px;height:33.6px;background:#ffff00;border-radius:4px;box-shadow:inset 1px 1px 1px rgba(120,120,0,0.6)"></div>
<div style="position:absolute;left:283.6px;top:1076.2px;width:168.2px;height:68.3px;background:linear-gradient(#a8a8a8,#8a8a8a 50%,#585858);border-radius:5px"></div>
<div style="position:absolute;left:289.3px;top:1082px;width:156.79999999999998px;height:40.2px;background:#c1c2a2;border-radius:4px;box-shadow:inset 1.5px 1.5px 1px rgba(90,90,40,0.55)"></div>
<div class="t" style="left:337.7px;width:60px;text-align:center;top:1129.4px;font-size:12.3px;color:#2a2a2a;font-weight:bold;">20%</div>
<div style="position:absolute;left:453.8px;top:1076.2px;width:168.7px;height:68.3px;background:linear-gradient(#a8a8a8,#8a8a8a 50%,#585858);border-radius:5px"></div>
<div style="position:absolute;left:459.5px;top:1082px;width:157.29999999999998px;height:40.2px;background:#c1c287;border-radius:4px;box-shadow:inset 1.5px 1.5px 1px rgba(90,90,40,0.55)"></div>
<div class="t" style="left:508.1px;width:60px;text-align:center;top:1129.4px;font-size:12.3px;color:#2a2a2a;font-weight:bold;">40%</div>
<div style="position:absolute;left:624.3px;top:1076.2px;width:170.10000000000002px;height:68.3px;background:linear-gradient(#a8a8a8,#8a8a8a 50%,#585858);border-radius:5px"></div>
<div style="position:absolute;left:630.0px;top:1082px;width:158.70000000000002px;height:40.2px;background:#c1c273;border-radius:4px;box-shadow:inset 1.5px 1.5px 1px rgba(90,90,40,0.55)"></div>
<div class="t" style="left:679.3px;width:60px;text-align:center;top:1129.4px;font-size:12.3px;color:#2a2a2a;font-weight:bold;">60%</div>
<div style="position:absolute;left:796.5px;top:1076.2px;width:168.29999999999995px;height:68.3px;background:linear-gradient(#a8a8a8,#8a8a8a 50%,#585858);border-radius:5px"></div>
<div style="position:absolute;left:802.2px;top:1082px;width:156.89999999999995px;height:40.2px;background:#c0c24c;border-radius:4px;box-shadow:inset 1.5px 1.5px 1px rgba(90,90,40,0.55)"></div>
<div class="t" style="left:850.6px;width:60px;text-align:center;top:1129.4px;font-size:12.3px;color:#2a2a2a;font-weight:bold;">80%</div>
<div style="position:absolute;left:967.8px;top:1076.2px;width:168.3px;height:68.3px;background:linear-gradient(#1c1c1c,#343434 45%,#353535);border-radius:5px"></div>
<div style="position:absolute;left:973.2px;top:1081.6px;width:157.7px;height:40.6px;background:#c2c000;border-radius:4px;box-shadow:inset 1.5px 1.5px 1px rgba(90,90,0,0.6)"></div>
<div class="t" style="left:1022.1px;width:60px;text-align:center;top:1129.4px;font-size:12.3px;color:#f8f8f8;font-weight:bold;">100%</div>
<div style="position:absolute;left:1556.7px;top:1075.9px;width:53.7px;height:70.1px;background:linear-gradient(#aaaaaa,#8a8a8a 30%,#9a9a9a 31%,#707070);border-radius:5px 5px 0 0"></div>
<div style="position:absolute;left:1556.7px;top:1096px;width:53.7px;height:1.5px;background:#5a5a5a"></div>
<div style="position:absolute;left:1575.5px;top:1078.8px;width:16px;height:16px;border-radius:50%;background:linear-gradient(#7a7a7a,#a8a8a8)"></div>
<svg style="position:absolute;left:1578px;top:1083px" width="11" height="8"><path d="M0.5 6.5 H10.5 L5.5 1Z" fill="#2a2a2a"/></svg>
<div style="position:absolute;left:1566.3px;top:1103.6px;width:34.7px;height:33.7px;box-sizing:border-box;border:3.2px solid #232323;border-radius:5px;background:#a4a4a4"></div>
<div style="position:absolute;left:1576px;top:1113.7px;width:15px;height:15px;background:#000"></div>
<div style="position:absolute;left:1612px;top:1076px;width:50.70000000000009px;height:35px;background:linear-gradient(#b0b0b0,#8e8e8e);border-radius:5px 0 0 0;"></div>
<div style="position:absolute;left:1627.95px;top:1082px;width:20px;height:20px;border-radius:50%;background:linear-gradient(#8a8a8a,#a8a8a8)"></div>
<div style="position:absolute;left:1663.9px;top:1076px;width:49.3px;height:35px;background:linear-gradient(#b0b0b0,#8e8e8e);"></div>
<div style="position:absolute;left:1679.15px;top:1082px;width:20px;height:20px;border-radius:50%;background:linear-gradient(#8a8a8a,#a8a8a8)"></div>
<div style="position:absolute;left:1714.4px;top:1076px;width:49.499999999999815px;height:35px;background:linear-gradient(#b0b0b0,#8e8e8e);"></div>
<div style="position:absolute;left:1729.75px;top:1082px;width:20px;height:20px;border-radius:50%;background:linear-gradient(#8a8a8a,#a8a8a8)"></div>
<div style="position:absolute;left:1765.1px;top:1076px;width:49.3px;height:35px;background:linear-gradient(#b0b0b0,#8e8e8e);"></div>
<div style="position:absolute;left:1780.35px;top:1082px;width:20px;height:20px;border-radius:50%;background:linear-gradient(#8a8a8a,#a8a8a8)"></div>
<div style="position:absolute;left:1815.6px;top:1076px;width:49.60000000000018px;height:35px;background:linear-gradient(#b0b0b0,#8e8e8e);"></div>
<div style="position:absolute;left:1831.0px;top:1082px;width:20px;height:20px;border-radius:50%;background:linear-gradient(#8a8a8a,#a8a8a8)"></div>
<div style="position:absolute;left:1866.4px;top:1076px;width:50.399999999999906px;height:35px;background:linear-gradient(#b0b0b0,#8e8e8e);"></div>
<div style="position:absolute;left:1882.2px;top:1082px;width:20px;height:20px;border-radius:50%;background:linear-gradient(#8a8a8a,#a8a8a8)"></div>
<div style="position:absolute;left:1612px;top:1111px;width:152px;height:35px;background:linear-gradient(#b4b4b4,#8e8e8e);border-radius:0 0 0 0"></div>
<div style="position:absolute;left:1765.1px;top:1111px;width:153px;height:35px;background:linear-gradient(#b4b4b4,#8e8e8e)"></div>
<div style="position:absolute;left:1764px;top:1111px;width:1.2px;height:35px;background:#555"></div>
<div style="position:absolute;left:1630px;top:1118px;width:20px;height:20px;border-radius:50%;background:linear-gradient(#8a8a8a,#acacac)"></div>
<div style="position:absolute;left:1877px;top:1118px;width:20px;height:20px;border-radius:50%;background:linear-gradient(#8a8a8a,#acacac)"></div>
<div class="t" style="left:1877.0px;width:20px;text-align:center;top:1116.1px;font-size:20px;color:#333;">»</div>
<div class="t" style="left:1677.7px;top:1115.6px;font-size:24.5px;color:#2e2e2e;letter-spacing:1.6px;">Back</div>
<div class="t" style="left:1797.8px;top:1115.6px;font-size:24.5px;color:#2e2e2e;letter-spacing:2.6px;">Next</div>
<svg style="position:absolute;left:1620px;top:1076px" width="300" height="70" viewBox="1620 1076 300 70" font-family="Liberation Sans, sans-serif">
<g opacity="0.8">
<path d="M1640.6 1117 L1671.7 1115.1 L1696.9 1119.7 L1656.5 1131 L1633.3 1120.4 L1630.6 1084.3 L1669.1 1092.5 L1670.4 1115.1" fill="none" stroke="#f0f0f0" stroke-width="4.6" stroke-linejoin="round" opacity="0.75"/>
<path d="M1640.6 1117 L1671.7 1115.1 L1696.9 1119.7 L1656.5 1131 L1633.3 1120.4 L1630.6 1084.3 L1669.1 1092.5 L1670.4 1115.1" fill="none" stroke="#a8343f" stroke-width="2.4" stroke-linejoin="round"/>
<path d="M1642.5 1097.2 L1653.8 1111.1 L1673.7 1083.9" fill="none" stroke="#f0f0f0" stroke-width="6.5" stroke-linecap="round" stroke-linejoin="round" opacity="0.7"/>
<path d="M1642.5 1097.2 L1653.8 1111.1 L1673.7 1083.9" fill="none" stroke="#3c3c3c" stroke-width="3.8" stroke-linecap="round" stroke-linejoin="round"/>
<text x="1676" y="1112.4" font-size="25" font-weight="bold" fill="#a8343f" stroke="#f4f4f4" stroke-width="1.6" paint-order="stroke" textLength="149" lengthAdjust="spacingAndGlyphs">NOTEBOOK</text>
<text x="1825" y="1112.4" font-size="25" fill="none" stroke="#f4f4f4" stroke-width="3.2" stroke-linejoin="round" textLength="87" lengthAdjust="spacingAndGlyphs">CHECK</text><text x="1825" y="1112.4" font-size="25" fill="#363636" stroke="#363636" stroke-width="0.7" textLength="87" lengthAdjust="spacingAndGlyphs">CHECK</text>
</g></svg>
<div style="position:absolute;left:1914px;top:58px;width:6px;height:1088px;background:linear-gradient(90deg,rgba(0,0,0,0),rgba(0,0,0,0.6))"></div>
</body></html>
